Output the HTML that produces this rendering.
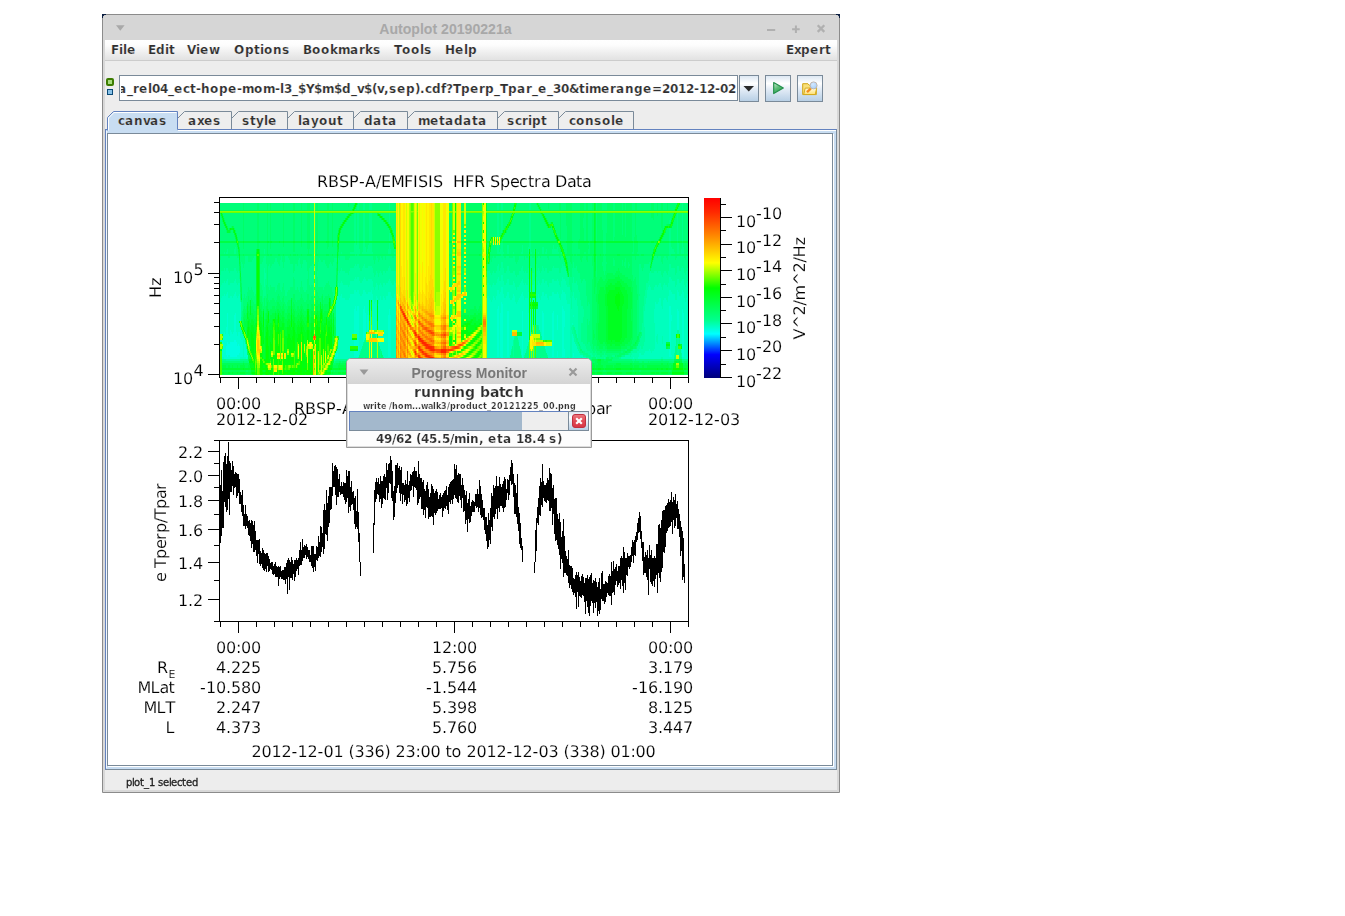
<!DOCTYPE html>
<html lang="en"><head><meta charset="utf-8"><title>Autoplot 20190221a</title>
<style>
*{box-sizing:border-box;margin:0;padding:0}
html,body{width:1345px;height:916px;overflow:hidden;background:#fff}
body{position:relative;font-family:"DejaVu Sans","Liberation Sans",sans-serif;font-size:12px;font-weight:bold;color:#333}
svg{position:absolute;left:0;top:0;overflow:visible}
svg text{font-family:"DejaVu Sans","Liberation Sans",sans-serif;white-space:pre}
.ui text{font-weight:bold;font-size:12px;fill:#2e2e2e;stroke:#f6f6f6;stroke-width:0.2px}
.plot text{font-weight:normal;font-size:16px;fill:#000}
#win{position:absolute;left:102px;top:14px;width:738px;height:779px;background:#ededed;border:1px solid #8b8b8b;border-radius:4px 4px 0 0;box-shadow:inset 0 0 0 2px #d8d8d8}

.nv{position:absolute;top:14px;width:4px;height:4px;background:#0b1b3d}
#title{position:absolute;left:103px;top:15px;width:736px;height:25px;background:#d6d6d6;border-radius:3px 3px 0 0}
#title text{font-family:"Liberation Sans","DejaVu Sans",sans-serif;font-size:15px;font-weight:bold;fill:#a8a8a8}
#menubar{position:absolute;left:105px;top:40px;width:732px;height:21px;background:linear-gradient(#fff 0,#fdfdfd 25%,#ececec 70%,#e2e2e2 100%);border-bottom:1px solid #cccccc}
#status{position:absolute;left:105px;top:770px;width:732px;height:21px}
#status text{font-weight:normal;font-size:10px;fill:#222}
#addr{position:absolute;left:119px;top:75px;width:619px;height:26px;background:#fff;border:1px solid #7a8a99;overflow:hidden}
.btn{position:absolute;top:75px;height:27px;border:1px solid #7a8a99;background:linear-gradient(#dde8f3 0,#fff 30%,#e6eef7 50%,#b8cfe5 100%)}
#pane{position:absolute;left:105px;top:129px;width:732px;height:641px;border:1px solid #6382bf;border-right-color:#7a8a99;border-bottom-color:#7a8a99;background:#c8ddf2}
#canvas{position:absolute;left:107px;top:133px;width:726px;height:633px;background:#fff;border:1px solid #7a8a99;box-shadow:1px 1px 0 #fff}
#pm{position:absolute;left:346px;top:358px;width:246px;height:90px;background:#fdfdfd;border:1px solid #9a9a9a;border-radius:5px 5px 0 0;box-shadow:inset 0 0 0 1px #dcdcdc}
#pm .tb{position:absolute;left:0;top:0;width:244px;height:25px;background:linear-gradient(#ececec,#d4d4d4);border-radius:4px 4px 0 0}
#pm .tt text{font-family:"Liberation Sans","DejaVu Sans",sans-serif;font-size:15px;font-weight:bold;fill:#787878}
#pm .bar{position:absolute;left:2px;top:52px;width:220px;height:20px;border:1px solid #7a8a99;border-top-color:#6382bf;border-left-color:#6382bf;background:#eeeeee}
#pm .bar i{position:absolute;left:0;top:0;width:172px;height:18px;background:#a3b8cc}
#pm .cancel{position:absolute;left:221px;top:52px;width:21px;height:20px;border:1px solid #7a8a99;background:linear-gradient(#dde8f3,#fff 30%,#b8cfe5)}
</style></head>
<body>
<div id="win"></div><svg width="1345" height="916" viewBox="0 0 1345 916" shape-rendering="crispEdges"><path d="M102 14h4v1h-2v1h-1v2h-1zM840 14h-4v1h2v1h1v2h1z" fill="#0b1d40"/></svg>
<div id="title"><svg width="736" height="25" viewBox="0 0 736 25"><text transform="translate(342.4,19.1) scale(0.94,1)" x="0" y="0" text-anchor="middle">Autoplot 20190221a</text>
<path d="M13 10.2h8.6l-4.3 5.6z" fill="#a9a9a9"/>
<path d="M664 15h8.2" stroke="#b0b0b0" stroke-width="2"/><path d="M689.1 14.2h7.6m-3.8 -3.8v7.6" stroke="#b0b0b0" stroke-width="2"/>
<path d="M714.7 10.3l6.6 6.6m0 -6.6l-6.6 6.6" stroke="#b0b0b0" stroke-width="2.3"/></svg></div>
<div id="menubar"></div>
<svg class="ui" width="1345" height="916" viewBox="0 0 1345 916"><text x="111 119 123 127" y="54" >File</text><text x="148 156 165 169" y="54" >Edit</text><text x="187 196 200 209" y="54" >View</text><text x="234 245 254 260 264 273 282" y="54" >Options</text><text x="303 312 321 330 338 350 359 365 373" y="54" >Bookmarks</text><text x="394 402 411 420 424" y="54" >Tools</text><text x="445 455 464 468" y="54" >Help</text><text x="786 794 801 810 819 825" y="54" >Expert</text></svg>
<svg width="1345" height="916" viewBox="0 0 1345 916"><rect x="106" y="78" width="8" height="8" rx="2" fill="#3c7c00"/><rect x="108" y="80" width="4" height="4" fill="#a6dc7c"/><rect x="107" y="89" width="6" height="6" fill="#0a4a78"/><rect x="108" y="90" width="4" height="4" fill="#88c2e8"/></svg><div id="addr"><div style="position:absolute;left:1px;top:0;width:616px;height:24px;overflow:hidden"><svg class="ui" width="616" height="24" viewBox="0 0 616 24"><text x="-3 6 12 18 27 31 39 47 53 62 69 75 80 89 98 107 116 121 133 142 154 159 163 171 177 185 193 201 213 221 230 236 243 251 256 263 268 276 285 294 299 304 311 320 325 332 340 349 358 364 373 379 387 396 405 411 417 426 432 440 448 458 464 468 480 489 495 504 513 522 531 541 549 557 565 573 578 586 594 599 607" y="17" >a_rel04_ect-hope-mom-l3_$Y$m$d_v$(v,sep).cdf?Tperp_Tpar_e_30&amp;timerange=2012-12-02</text></svg></div></div><div class="btn" style="left:739px;width:20px"></div><div class="btn" style="left:765px;width:26px"></div><div class="btn" style="left:797px;width:26px"></div><svg width="1345" height="916" viewBox="0 0 1345 916"><defs><linearGradient id="pg" x1="0" y1="0" x2="0.6" y2="1"><stop offset="0" stop-color="#cfeed6"/><stop offset="0.55" stop-color="#58bb74"/><stop offset="1" stop-color="#2f9c50"/></linearGradient><linearGradient id="fg" x1="0" y1="0" x2="0" y2="1"><stop offset="0" stop-color="#fffbe2"/><stop offset="1" stop-color="#ffe070"/></linearGradient><radialGradient id="lg" cx="0.4" cy="0.35" r="0.8"><stop offset="0" stop-color="#d4e8ff"/><stop offset="1" stop-color="#9ccaf8"/></radialGradient></defs><path d="M743.5 86h10.5l-5.25 5.5z" fill="#2a2a2a"/><path d="M773.7 82.5L783.3 88L773.7 93.5Z" fill="url(#pg)" stroke="#23904c" stroke-width="1.2" stroke-linejoin="round"/><path d="M802.7 83.7h5.2l1.5 1.6h6.9v9.3h-13.6z" fill="#f9e07a" stroke="#d0a616"/><path d="M803.7 94.5l1.5 -6.4h11.5l-1.5 6.4z" fill="url(#fg)" stroke="#d6ab1c"/><path d="M807 92.2l3.8 -3.6" stroke="#f28c1c" stroke-width="2.3"/><circle cx="813.6" cy="85.4" r="3.5" fill="url(#lg)" stroke="#c0b6b0"/></svg>
<div id="pane"></div>
<svg width="1345" height="916" viewBox="0 0 1345 916"><path d="M107.5 132.5 L107.5 117.5 L113.5 111.5 L177.5 111.5 L177.5 129.5 L177.5 132.5 Z" fill="#c8ddf2"/><path d="M107.5 130.5 L107.5 117.5 L113.5 111.5 L177.5 111.5 L177.5 129.5" fill="none" stroke="#6382bf"/><path d="M108.5 130.5 L108.5 118.0 L114.0 112.5 L176.5 112.5" fill="none" stroke="#fff"/><path d="M178.0 118.0 L184.0 112.0 L231.5 112.0 L231.5 129.0 L178.0 129.0 Z" fill="#eeeeee"/><path d="M178.0 118.0 L184.5 111.5 L231.5 111.5 L231.5 129.0" fill="none" stroke="#7a8a99"/><path d="M232.0 118.0 L238.0 112.0 L287.5 112.0 L287.5 129.0 L232.0 129.0 Z" fill="#eeeeee"/><path d="M232.0 118.0 L238.5 111.5 L287.5 111.5 L287.5 129.0" fill="none" stroke="#7a8a99"/><path d="M288.0 118.0 L294.0 112.0 L353.5 112.0 L353.5 129.0 L288.0 129.0 Z" fill="#eeeeee"/><path d="M288.0 118.0 L294.5 111.5 L353.5 111.5 L353.5 129.0" fill="none" stroke="#7a8a99"/><path d="M354.0 118.0 L360.0 112.0 L407.5 112.0 L407.5 129.0 L354.0 129.0 Z" fill="#eeeeee"/><path d="M354.0 118.0 L360.5 111.5 L407.5 111.5 L407.5 129.0" fill="none" stroke="#7a8a99"/><path d="M408.0 118.0 L414.0 112.0 L497.5 112.0 L497.5 129.0 L408.0 129.0 Z" fill="#eeeeee"/><path d="M408.0 118.0 L414.5 111.5 L497.5 111.5 L497.5 129.0" fill="none" stroke="#7a8a99"/><path d="M498.0 118.0 L504.0 112.0 L558.5 112.0 L558.5 129.0 L498.0 129.0 Z" fill="#eeeeee"/><path d="M498.0 118.0 L504.5 111.5 L558.5 111.5 L558.5 129.0" fill="none" stroke="#7a8a99"/><path d="M559.0 118.0 L565.0 112.0 L633.5 112.0 L633.5 129.0 L559.0 129.0 Z" fill="#eeeeee"/><path d="M559.0 118.0 L565.5 111.5 L633.5 111.5 L633.5 129.0" fill="none" stroke="#7a8a99"/><path d="M178 130.5H836" stroke="#fff" fill="none"/><path d="M106.5 131V768" stroke="#fff" stroke-opacity="0.75" fill="none"/></svg><svg class="ui" width="1345" height="916" viewBox="0 0 1345 916"><text x="118 125 134 143 150 159" y="125" >canvas</text><text x="188 197 204 213" y="125" >axes</text><text x="242 250 256 264 268" y="125" >style</text><text x="298 302 311 319 328 337" y="125" >layout</text><text x="364 373 382 388" y="125" >data</text><text x="418 430 439 445 454 463 472 478" y="125" >metadata</text><text x="507 515 522 528 532 541" y="125" >script</text><text x="569 576 585 594 602 611 615" y="125" >console</text></svg>
<div id="canvas"></div>
<svg width="1345" height="916" viewBox="0 0 1345 916" shape-rendering="crispEdges"><g shape-rendering="crispEdges" fill="none" stroke-width="1"><rect x="220" y="203" width="468" height="172" fill="#00ff79" stroke="none"/><path stroke="#00ffe1" d="M226.5 346v9M227.5 342v15M228.5 344v11M229.5 344v11M230.5 342v15M231.5 342v15M232.5 342v15M233.5 342v15M234.5 340v17M235.5 340v17M236.5 342v15M237.5 346v9M238.5 344v11M239.5 346v7"/><path stroke="#00ffcf" d="M222.5 340v4M222.5 349v8M223.5 338v19M224.5 332v27M225.5 334v25M226.5 327v19M226.5 355v4M227.5 313v29M227.5 357v2M228.5 334v10M228.5 355v4M229.5 336v8M229.5 355v4M230.5 330v12M230.5 357v2M231.5 332v10M231.5 357v2M232.5 334v8M232.5 357v2M233.5 332v10M233.5 357v2M234.5 315v25M234.5 357v2M235.5 313v27M235.5 357v2M236.5 332v10M236.5 357v2M237.5 336v10M237.5 355v4M238.5 332v12M238.5 355v4M239.5 332v14M239.5 353v6M240.5 338v19M241.5 340v17M242.5 340v17M244.5 342v15M245.5 344v13M246.5 349v10M247.5 355v2M334.5 357v2M335.5 353v6M336.5 355v2M337.5 353v4M354.5 309v25M354.5 340v6M354.5 351v6M355.5 306v28M355.5 340v6M355.5 351v6M356.5 311v23M356.5 340v6M356.5 351v6M357.5 306v40M357.5 351v6M358.5 306v51M363.5 309v33M364.5 306v34M365.5 313v25M367.5 315v17M368.5 311v19M370.5 309v21M388.5 315v42M389.5 309v48M390.5 315v42M497.5 309v48M498.5 306v51M500.5 313v44M501.5 302v57M502.5 304v55M507.5 311v46M508.5 311v46M522.5 311v46M528.5 313v29M530.5 309v27M542.5 311v29M543.5 313v27M552.5 313v44M553.5 311v46M557.5 315v15M557.5 351v6M562.5 306v51M563.5 309v48M564.5 311v16M564.5 349v8M573.5 353v4M669.5 306v36M669.5 349v8M670.5 306v51M671.5 315v6M671.5 355v2M677.5 309v21M678.5 311v19M682.5 309v48M683.5 313v44"/><path stroke="#00ffbe" d="M220.5 302v32M220.5 340v2M221.5 298v36M221.5 340v2M222.5 296v38M222.5 357v2M223.5 296v42M223.5 357v2M224.5 294v38M225.5 296v38M226.5 294v33M227.5 292v21M228.5 298v36M229.5 298v38M230.5 296v34M231.5 296v36M232.5 298v36M233.5 296v36M234.5 294v21M235.5 292v21M236.5 296v36M237.5 298v38M238.5 296v36M239.5 294v27M239.5 323v9M240.5 302v19M240.5 327v11M240.5 357v2M241.5 330v10M241.5 357v2M242.5 334v6M242.5 357v2M243.5 336v23M244.5 338v4M244.5 357v2M245.5 357v2M247.5 357v2M336.5 300v36M336.5 351v4M336.5 357v2M337.5 296v40M337.5 349v4M337.5 357v2M338.5 296v40M338.5 340v19M339.5 300v59M340.5 296v63M341.5 294v65M342.5 298v61M343.5 298v61M344.5 298v61M345.5 300v59M346.5 300v59M347.5 300v59M348.5 300v59M349.5 298v61M350.5 294v52M350.5 351v8M351.5 294v52M351.5 351v8M352.5 294v40M352.5 340v6M352.5 351v8M353.5 294v40M353.5 340v6M353.5 351v8M354.5 290v19M354.5 357v2M355.5 290v16M355.5 357v2M356.5 292v19M356.5 357v2M357.5 290v16M357.5 357v2M358.5 290v16M359.5 294v61M360.5 296v55M361.5 296v53M362.5 294v52M363.5 290v19M364.5 290v16M365.5 292v21M366.5 294v38M367.5 294v21M368.5 292v19M369.5 292v8M370.5 292v17M371.5 290v10M372.5 294v36M373.5 300v30M374.5 304v26M375.5 302v28M376.5 296v34M376.5 334v4M377.5 298v2M378.5 304v26M378.5 336v2M379.5 300v30M379.5 336v2M379.5 342v4M380.5 296v34M380.5 336v2M380.5 342v7M381.5 300v30M381.5 336v2M381.5 342v9M382.5 300v30M382.5 336v2M382.5 342v13M383.5 296v34M383.5 334v4M383.5 342v15M384.5 298v61M385.5 300v59M386.5 296v63M387.5 296v63M388.5 292v23M388.5 357v2M389.5 292v17M389.5 357v2M390.5 292v23M390.5 357v2M391.5 296v63M392.5 298v61M393.5 298v61M394.5 294v65M395.5 296v63M487.5 296v63M488.5 296v63M489.5 298v61M490.5 300v59M491.5 302v57M492.5 300v59M493.5 296v63M494.5 298v61M495.5 300v59M496.5 296v63M497.5 290v19M497.5 357v2M498.5 290v16M498.5 357v2M499.5 294v65M500.5 292v21M500.5 357v2M501.5 287v15M502.5 287v17M503.5 294v65M504.5 298v61M505.5 298v61M506.5 296v63M507.5 292v19M507.5 357v2M508.5 292v19M508.5 357v2M509.5 298v61M510.5 300v55M511.5 300v49M512.5 298v32M512.5 336v10M513.5 294v36M513.5 336v4M514.5 296v34M515.5 302v28M516.5 304v26M517.5 302v30M518.5 300v32M518.5 336v4M519.5 298v34M519.5 336v10M520.5 296v36M520.5 336v13M521.5 294v38M521.5 336v19M522.5 292v19M522.5 357v2M523.5 296v63M524.5 300v55M525.5 298v55M526.5 298v51M527.5 298v48M528.5 292v21M530.5 290v2M530.5 298v4M532.5 300v2M532.5 309v21M533.5 298v2M534.5 298v4M534.5 309v16M536.5 309v16M537.5 298v4M537.5 309v16M538.5 294v31M539.5 298v32M540.5 300v32M541.5 296v40M542.5 292v19M543.5 292v21M544.5 296v44M545.5 294v46M545.5 346v3M546.5 294v46M546.5 346v7M547.5 298v42M547.5 346v9M548.5 300v40M548.5 346v13M549.5 296v44M549.5 346v13M550.5 296v44M550.5 346v13M551.5 296v44M551.5 346v13M552.5 292v21M552.5 357v2M553.5 292v19M553.5 357v2M554.5 294v65M555.5 294v65M556.5 294v65M557.5 292v23M557.5 330v21M557.5 357v2M558.5 294v65M559.5 298v61M560.5 300v59M561.5 294v65M562.5 290v16M562.5 357v2M563.5 292v17M563.5 357v2M564.5 292v19M564.5 327v22M564.5 357v2M565.5 294v65M566.5 300v59M567.5 304v53M568.5 304v53M569.5 304v55M572.5 323v2M572.5 334v25M573.5 315v2M573.5 338v15M573.5 357v2M574.5 342v17M575.5 344v15M576.5 346v13M577.5 349v10M578.5 351v8M579.5 353v6M580.5 355v4M581.5 355v2M582.5 355v4M583.5 357v2M584.5 357v2M585.5 357v2M633.5 357v2M638.5 357v2M639.5 353v6M640.5 353v6M641.5 355v4M642.5 355v4M643.5 355v4M644.5 353v6M645.5 351v8M646.5 351v8M647.5 351v8M648.5 351v8M649.5 349v10M650.5 351v8M651.5 353v6M652.5 351v8M653.5 351v8M654.5 309v14M654.5 349v10M655.5 302v57M656.5 304v32M656.5 342v17M657.5 304v30M657.5 344v15M658.5 302v57M659.5 298v61M660.5 298v61M661.5 306v51M662.5 309v27M662.5 344v13M663.5 300v59M664.5 298v61M665.5 298v61M666.5 300v42M666.5 349v10M667.5 302v40M667.5 349v10M668.5 296v46M668.5 349v10M669.5 290v16M669.5 357v2M670.5 290v16M670.5 357v2M671.5 292v23M671.5 321v34M671.5 357v2M672.5 294v65M673.5 294v65M674.5 294v59M675.5 300v46M676.5 300v34M677.5 290v19M678.5 292v19M679.5 296v38M680.5 296v48M681.5 294v50M681.5 349v4M682.5 290v19M682.5 357v2M683.5 292v21M683.5 357v2M684.5 298v61M685.5 302v57M686.5 298v61M687.5 294v65"/><path stroke="#00ffad" d="M220.5 287v15M221.5 285v13M222.5 283v13M223.5 283v13M224.5 281v13M225.5 283v13M226.5 281v13M227.5 279v13M228.5 285v13M229.5 285v13M230.5 283v13M231.5 283v13M232.5 283v15M233.5 283v13M234.5 281v13M235.5 279v13M236.5 283v13M237.5 285v13M238.5 283v13M239.5 283v11M338.5 283v13M339.5 287v13M340.5 283v13M341.5 281v13M342.5 283v15M343.5 285v13M344.5 285v13M345.5 285v15M346.5 285v15M347.5 285v15M348.5 287v13M349.5 285v13M350.5 281v13M351.5 281v13M352.5 281v13M353.5 281v13M354.5 279v11M355.5 277v13M356.5 279v13M357.5 277v13M358.5 277v13M359.5 281v13M360.5 283v13M361.5 283v13M362.5 281v13M363.5 279v11M364.5 277v13M365.5 279v13M366.5 281v13M367.5 281v13M368.5 279v13M369.5 279v13M370.5 279v13M371.5 279v11M372.5 281v13M373.5 287v13M374.5 290v14M375.5 287v15M376.5 283v13M377.5 285v13M378.5 290v14M379.5 285v15M380.5 283v13M381.5 285v15M382.5 287v13M383.5 283v13M384.5 283v15M385.5 285v15M386.5 283v13M387.5 283v13M388.5 281v11M389.5 279v13M390.5 281v11M391.5 283v13M392.5 285v13M393.5 285v13M394.5 281v13M395.5 283v13M487.5 283v13M488.5 283v13M489.5 285v13M490.5 285v15M491.5 287v15M492.5 285v15M493.5 283v13M494.5 285v13M495.5 285v15M496.5 283v13M497.5 279v11M498.5 277v13M499.5 281v13M500.5 281v11M501.5 275v12M502.5 275v12M503.5 281v13M504.5 285v13M505.5 285v13M506.5 283v13M507.5 279v13M508.5 279v13M509.5 285v13M510.5 285v15M511.5 285v15M512.5 285v13M513.5 281v13M514.5 283v13M515.5 287v15M516.5 290v14M517.5 287v15M518.5 287v13M519.5 285v13M520.5 283v13M521.5 281v13M522.5 279v13M523.5 283v13M524.5 285v15M525.5 283v15M526.5 285v13M527.5 285v13M528.5 279v13M530.5 279v11M532.5 285v7M532.5 298v2M533.5 285v7M534.5 281v11M536.5 290v12M537.5 285v13M538.5 281v13M539.5 283v15M540.5 285v15M541.5 283v13M542.5 279v13M543.5 279v13M544.5 283v13M545.5 281v13M546.5 281v13M547.5 285v13M548.5 287v13M549.5 283v13M550.5 283v13M551.5 283v13M552.5 279v13M553.5 279v13M554.5 281v13M555.5 281v13M556.5 281v13M557.5 279v13M558.5 281v13M559.5 285v13M560.5 287v13M561.5 281v13M562.5 277v13M563.5 279v13M564.5 279v13M565.5 281v13M566.5 285v15M567.5 287v17M567.5 357v2M568.5 287v17M568.5 357v2M569.5 287v17M570.5 298v61M571.5 309v18M571.5 330v29M572.5 296v27M573.5 292v23M573.5 317v8M573.5 336v2M574.5 298v29M575.5 300v30M576.5 298v36M577.5 306v32M581.5 357v2M621.5 357v2M622.5 357v2M623.5 357v2M624.5 357v2M625.5 355v4M626.5 355v4M627.5 355v4M628.5 355v4M629.5 355v4M630.5 357v2M631.5 355v4M632.5 353v6M633.5 353v4M634.5 353v6M635.5 353v6M636.5 353v6M637.5 351v8M638.5 351v6M639.5 349v4M640.5 346v7M641.5 349v6M642.5 349v6M643.5 346v9M644.5 311v16M644.5 342v11M645.5 304v47M646.5 298v53M647.5 290v61M648.5 287v64M649.5 285v64M650.5 287v64M651.5 290v63M652.5 290v61M653.5 290v61M654.5 287v22M654.5 323v26M655.5 285v17M656.5 285v19M656.5 336v6M657.5 287v17M657.5 334v10M658.5 285v17M659.5 283v15M660.5 283v15M661.5 287v19M661.5 357v2M662.5 290v19M662.5 336v8M662.5 357v2M663.5 285v15M664.5 283v15M665.5 285v13M666.5 285v15M667.5 287v15M668.5 283v13M669.5 277v13M670.5 277v13M671.5 279v13M672.5 281v13M673.5 281v13M674.5 281v13M675.5 287v13M676.5 285v15M677.5 279v11M678.5 279v13M679.5 283v13M680.5 283v13M681.5 281v13M682.5 279v11M683.5 279v13M684.5 285v13M685.5 287v15M686.5 283v15M687.5 281v13"/><path stroke="#00ff9c" d="M220.5 275v12M221.5 271v14M222.5 271v12M223.5 271v12M224.5 268v13M225.5 271v12M226.5 268v13M226.5 359v2M227.5 268v11M227.5 359v2M228.5 271v14M228.5 359v2M229.5 273v12M229.5 359v2M230.5 271v12M230.5 359v2M231.5 271v12M231.5 359v2M232.5 271v12M232.5 359v2M233.5 271v12M233.5 359v2M234.5 268v13M234.5 359v2M235.5 268v11M235.5 359v2M236.5 271v12M236.5 359v2M237.5 273v12M237.5 359v2M238.5 271v12M238.5 359v2M239.5 279v4M239.5 359v2M240.5 300v2M264.5 268v19M265.5 273v6M334.5 359v2M335.5 359v2M338.5 271v12M339.5 273v14M340.5 271v12M341.5 268v13M342.5 271v12M343.5 271v14M344.5 271v14M345.5 273v12M346.5 273v12M347.5 273v12M348.5 275v12M349.5 271v14M350.5 268v13M351.5 268v13M352.5 268v13M353.5 268v13M354.5 266v13M355.5 264v13M356.5 266v13M357.5 264v13M358.5 264v13M358.5 357v2M359.5 268v13M360.5 271v12M360.5 351v2M361.5 271v12M362.5 268v13M363.5 266v13M363.5 342v2M364.5 264v13M364.5 340v2M365.5 268v11M366.5 268v13M367.5 268v13M368.5 266v13M369.5 266v13M370.5 266v13M371.5 266v13M372.5 268v13M373.5 273v14M374.5 277v13M375.5 275v12M376.5 271v12M377.5 273v12M378.5 277v13M379.5 273v12M380.5 271v12M381.5 273v12M382.5 275v12M383.5 271v12M384.5 271v12M385.5 273v12M386.5 271v12M387.5 271v12M388.5 268v13M389.5 266v13M390.5 268v13M391.5 271v12M392.5 271v14M393.5 271v14M394.5 271v10M395.5 271v12M487.5 271v12M488.5 271v12M489.5 271v14M490.5 273v12M491.5 275v12M492.5 273v12M493.5 271v12M494.5 273v12M495.5 273v12M496.5 271v12M497.5 266v13M498.5 264v13M499.5 271v10M500.5 268v13M501.5 262v13M501.5 359v2M502.5 262v13M502.5 359v2M503.5 268v13M504.5 273v12M505.5 273v12M506.5 271v12M507.5 266v13M508.5 266v13M509.5 271v14M510.5 273v12M511.5 273v12M511.5 349v2M512.5 273v12M513.5 271v10M513.5 340v17M514.5 271v12M514.5 336v2M515.5 275v12M516.5 277v13M517.5 275v12M517.5 336v2M518.5 275v12M518.5 340v2M519.5 271v14M520.5 271v12M520.5 349v2M521.5 268v13M521.5 355v2M522.5 266v13M523.5 271v12M524.5 273v12M524.5 355v2M525.5 271v12M526.5 273v12M526.5 349v2M527.5 273v12M528.5 268v11M528.5 342v2M530.5 266v13M532.5 273v12M533.5 273v12M534.5 268v13M536.5 277v13M537.5 271v14M538.5 268v13M538.5 325v2M539.5 271v12M540.5 273v12M540.5 332v2M541.5 271v12M542.5 266v13M543.5 268v11M544.5 271v12M545.5 268v13M545.5 349v2M546.5 268v13M547.5 273v12M547.5 355v2M548.5 273v14M549.5 271v12M550.5 271v12M551.5 271v12M552.5 268v11M553.5 266v13M554.5 268v13M555.5 268v13M556.5 268v13M557.5 268v11M558.5 268v13M559.5 273v12M560.5 273v14M561.5 268v13M562.5 264v13M563.5 266v13M564.5 266v13M565.5 268v13M566.5 273v12M567.5 277v10M568.5 277v10M569.5 285v2M570.5 290v8M571.5 292v17M571.5 327v3M572.5 283v13M572.5 325v9M573.5 277v15M573.5 325v2M573.5 330v6M574.5 283v15M574.5 334v8M575.5 283v17M575.5 338v6M576.5 281v17M576.5 342v4M577.5 285v21M577.5 344v5M578.5 290v52M578.5 346v5M579.5 292v52M579.5 349v4M580.5 300v46M580.5 353v2M581.5 306v17M581.5 342v7M581.5 353v2M582.5 306v17M582.5 342v9M582.5 353v2M583.5 309v8M583.5 344v7M583.5 355v2M584.5 344v7M584.5 355v2M585.5 346v7M585.5 355v2M586.5 349v4M586.5 357v2M587.5 351v2M587.5 357v2M588.5 351v4M588.5 357v2M589.5 351v4M590.5 353v2M591.5 353v4M592.5 355v2M595.5 355v2M596.5 357v2M604.5 357v2M629.5 353v2M630.5 353v4M631.5 351v4M632.5 351v2M633.5 349v4M634.5 349v4M635.5 349v4M636.5 349v4M637.5 346v5M638.5 344v7M639.5 342v7M640.5 338v8M641.5 330v2M641.5 336v13M642.5 323v26M643.5 306v40M644.5 296v15M644.5 327v15M645.5 290v14M646.5 283v15M647.5 283v7M648.5 281v6M649.5 273v12M650.5 271v16M651.5 273v17M652.5 273v17M653.5 273v17M654.5 271v16M655.5 271v14M656.5 271v14M657.5 273v14M658.5 271v14M659.5 271v12M660.5 271v12M661.5 275v12M662.5 277v13M663.5 273v12M664.5 271v12M665.5 271v14M666.5 273v12M667.5 275v12M668.5 271v12M669.5 264v13M670.5 264v13M671.5 268v11M672.5 268v13M673.5 268v13M674.5 268v13M674.5 353v4M675.5 275v12M676.5 273v12M677.5 266v13M677.5 330v4M677.5 338v17M678.5 266v13M678.5 330v4M678.5 338v6M678.5 349v6M679.5 271v12M680.5 271v12M681.5 268v13M681.5 353v4M682.5 266v13M683.5 268v11M684.5 273v12M685.5 275v12M686.5 271v12M687.5 268v13"/><path stroke="#00ff8b" d="M220.5 260v15M221.5 256v15M222.5 256v15M222.5 359v2M223.5 256v15M223.5 359v2M224.5 252v2M224.5 256v12M224.5 359v2M225.5 256v15M225.5 359v2M226.5 252v2M226.5 256v12M227.5 249v5M227.5 256v12M228.5 258v13M229.5 258v15M230.5 256v15M231.5 256v15M232.5 256v15M233.5 256v15M234.5 249v5M234.5 256v12M235.5 247v7M235.5 256v12M236.5 256v15M237.5 258v15M238.5 258v13M239.5 273v6M240.5 298v2M240.5 359v2M241.5 262v15M241.5 302v15M241.5 359v2M242.5 264v47M242.5 359v2M243.5 268v30M243.5 359v2M244.5 264v30M244.5 359v2M245.5 256v42M245.5 342v2M245.5 359v2M246.5 256v40M246.5 346v3M246.5 359v2M247.5 256v36M247.5 359v2M248.5 262v25M249.5 262v28M250.5 262v28M251.5 262v25M252.5 260v30M253.5 258v34M254.5 256v40M255.5 256v38M260.5 264v19M261.5 264v21M262.5 262v28M263.5 258v40M264.5 249v5M264.5 256v12M264.5 287v9M265.5 256v17M265.5 279v17M266.5 264v21M268.5 266v21M269.5 264v26M270.5 268v17M271.5 266v21M272.5 264v23M273.5 264v23M274.5 262v25M275.5 258v34M276.5 258v32M277.5 262v23M278.5 264v19M279.5 266v17M280.5 260v30M281.5 256v36M282.5 262v25M283.5 268v15M284.5 262v28M285.5 256v40M286.5 256v40M287.5 256v36M288.5 258v32M289.5 260v30M290.5 264v23M291.5 264v23M292.5 264v23M293.5 273v4M294.5 271v8M295.5 264v26M296.5 264v26M297.5 266v21M298.5 260v30M299.5 258v34M300.5 264v23M301.5 268v13M302.5 264v23M303.5 260v30M304.5 260v32M305.5 260v32M306.5 262v28M307.5 271v8M309.5 268v17M310.5 266v21M311.5 266v19M312.5 264v21M313.5 262v28M315.5 264v21M317.5 271v6M318.5 262v25M319.5 258v29M320.5 260v27M321.5 262v25M322.5 262v25M323.5 260v30M324.5 260v27M325.5 264v21M326.5 266v17M327.5 268v15M328.5 268v13M329.5 264v21M330.5 262v25M331.5 264v23M332.5 266v26M333.5 262v36M334.5 258v38M334.5 361v2M335.5 258v29M335.5 304v2M336.5 258v4M336.5 359v2M337.5 359v2M338.5 258v13M338.5 359v2M339.5 260v13M339.5 359v2M340.5 256v15M340.5 359v2M341.5 252v2M341.5 256v12M341.5 359v2M342.5 256v15M342.5 359v2M343.5 256v15M343.5 359v2M344.5 256v15M344.5 359v2M345.5 260v13M345.5 359v2M346.5 260v13M346.5 359v2M347.5 260v13M347.5 359v2M348.5 260v15M348.5 359v2M349.5 258v13M349.5 359v2M350.5 252v2M350.5 256v12M350.5 359v2M351.5 252v2M351.5 256v12M351.5 359v2M352.5 252v2M352.5 256v12M352.5 359v2M353.5 252v2M353.5 256v12M353.5 359v2M354.5 214v27M354.5 243v11M354.5 256v10M354.5 359v2M355.5 209v1M355.5 213v28M355.5 243v11M355.5 256v8M355.5 359v2M356.5 245v9M356.5 256v10M356.5 359v2M357.5 205v5M357.5 213v28M357.5 243v11M357.5 256v8M357.5 359v2M358.5 203v7M358.5 213v28M358.5 243v11M358.5 256v8M359.5 249v5M359.5 256v12M359.5 355v2M360.5 256v15M360.5 353v4M361.5 256v15M361.5 349v8M362.5 252v2M362.5 256v12M362.5 346v11M363.5 203v7M363.5 213v28M363.5 243v11M363.5 256v10M363.5 344v15M364.5 203v7M364.5 213v28M364.5 243v11M364.5 256v8M364.5 342v17M365.5 247v7M365.5 256v12M365.5 338v19M366.5 252v2M366.5 256v12M366.5 342v15M367.5 249v5M367.5 256v12M367.5 342v15M368.5 245v9M368.5 256v10M368.5 330v2M368.5 342v17M369.5 203v7M369.5 213v28M369.5 243v11M369.5 256v10M370.5 203v7M370.5 213v28M370.5 243v11M370.5 256v10M370.5 334v4M370.5 342v17M371.5 203v7M371.5 213v28M371.5 243v11M371.5 256v10M372.5 252v2M372.5 256v12M372.5 334v4M372.5 342v15M373.5 260v13M374.5 264v13M375.5 260v15M375.5 334v2M376.5 256v15M376.5 342v15M377.5 258v15M378.5 262v15M378.5 342v2M379.5 260v13M380.5 256v15M380.5 349v8M381.5 258v15M381.5 351v2M382.5 260v15M383.5 256v15M383.5 357v2M384.5 256v15M384.5 359v2M385.5 260v13M385.5 359v2M386.5 256v15M386.5 359v2M387.5 256v15M387.5 359v2M388.5 249v5M388.5 256v12M388.5 359v2M389.5 203v7M389.5 213v11M389.5 233v8M389.5 243v11M389.5 256v10M389.5 359v2M390.5 249v5M390.5 256v12M390.5 359v2M391.5 256v15M391.5 359v2M392.5 258v13M392.5 359v2M393.5 258v13M393.5 359v2M394.5 252v2M394.5 256v15M394.5 359v2M395.5 256v15M395.5 359v2M487.5 264v7M487.5 359v2M488.5 264v7M488.5 359v2M489.5 264v7M489.5 359v2M490.5 260v13M490.5 359v2M491.5 262v13M491.5 359v2M492.5 258v15M492.5 359v2M493.5 256v15M493.5 359v2M494.5 258v15M494.5 359v2M495.5 258v15M495.5 359v2M496.5 256v15M496.5 359v2M497.5 203v7M497.5 213v24M497.5 245v9M497.5 256v10M497.5 359v2M498.5 203v7M498.5 213v26M498.5 243v11M498.5 256v8M498.5 359v2M499.5 252v2M499.5 256v15M499.5 359v2M500.5 249v5M500.5 256v12M500.5 359v2M501.5 203v7M501.5 213v20M501.5 243v11M501.5 256v6M502.5 203v7M502.5 213v17M502.5 239v2M502.5 243v11M502.5 256v6M503.5 252v2M503.5 256v12M503.5 359v2M504.5 258v15M504.5 359v2M505.5 258v15M505.5 359v2M506.5 256v15M506.5 359v2M507.5 245v9M507.5 256v10M507.5 359v2M508.5 245v9M508.5 256v10M508.5 359v2M509.5 258v13M510.5 258v15M510.5 355v4M511.5 258v15M511.5 351v8M512.5 258v15M512.5 346v13M513.5 252v2M513.5 256v15M513.5 357v2M514.5 256v15M514.5 338v21M515.5 262v13M515.5 336v23M516.5 264v13M516.5 336v23M517.5 262v13M517.5 338v21M518.5 260v15M518.5 342v17M519.5 256v15M519.5 346v13M520.5 256v15M520.5 351v8M521.5 252v2M521.5 256v12M521.5 357v2M522.5 245v9M522.5 256v10M523.5 256v15M524.5 260v13M525.5 256v15M525.5 353v6M526.5 258v15M526.5 351v8M527.5 258v15M527.5 346v11M528.5 247v7M528.5 256v12M528.5 344v15M529.5 203v7M529.5 213v28M529.5 243v6M530.5 203v7M530.5 213v28M530.5 243v11M530.5 256v10M530.5 351v8M531.5 252v2M531.5 256v12M532.5 258v15M532.5 330v4M532.5 351v6M533.5 258v15M534.5 249v5M534.5 256v12M534.5 325v9M534.5 346v13M536.5 264v13M536.5 325v9M536.5 346v11M537.5 258v13M537.5 325v9M537.5 346v13M538.5 252v2M538.5 256v12M538.5 327v7M538.5 346v13M539.5 256v15M539.5 330v4M539.5 346v13M540.5 258v15M540.5 334v6M540.5 346v11M541.5 256v15M541.5 336v4M541.5 346v13M542.5 247v7M542.5 256v10M542.5 346v13M543.5 247v7M543.5 256v12M543.5 346v13M544.5 256v15M544.5 346v13M545.5 252v2M545.5 256v12M545.5 351v8M546.5 249v5M546.5 256v12M546.5 353v6M547.5 258v15M548.5 260v13M549.5 256v15M549.5 359v2M550.5 256v15M550.5 359v2M551.5 256v15M551.5 359v2M552.5 249v5M552.5 256v12M552.5 359v2M553.5 245v9M553.5 256v10M553.5 359v2M554.5 249v5M554.5 256v12M554.5 359v2M555.5 249v5M555.5 256v12M555.5 359v2M556.5 249v5M556.5 256v12M556.5 359v2M557.5 247v7M557.5 256v12M557.5 359v2M558.5 252v2M558.5 256v12M558.5 359v2M559.5 258v15M559.5 359v2M560.5 260v13M560.5 359v2M561.5 252v2M561.5 256v12M561.5 359v2M562.5 256v8M562.5 359v2M563.5 260v6M563.5 359v2M564.5 262v4M564.5 359v2M565.5 359v2M566.5 271v2M566.5 359v2M568.5 359v2M569.5 271v14M569.5 359v2M570.5 277v13M571.5 277v15M572.5 268v15M572.5 359v2M573.5 262v15M573.5 327v3M573.5 359v2M574.5 268v15M574.5 327v7M574.5 359v2M575.5 268v15M575.5 330v8M575.5 359v2M576.5 266v15M576.5 334v8M576.5 359v2M577.5 271v14M577.5 338v6M577.5 359v2M578.5 273v17M578.5 344v2M578.5 359v2M579.5 273v19M579.5 346v3M579.5 359v2M580.5 279v21M580.5 346v3M580.5 351v2M580.5 359v2M581.5 283v23M581.5 323v19M581.5 351v2M581.5 359v2M582.5 281v25M582.5 323v19M582.5 359v2M583.5 279v30M583.5 317v27M583.5 351v4M583.5 359v2M584.5 279v65M584.5 351v4M584.5 359v2M585.5 281v65M585.5 353v2M585.5 359v2M586.5 296v53M586.5 353v4M586.5 359v2M587.5 306v13M587.5 344v7M587.5 353v4M587.5 359v2M588.5 302v23M588.5 342v9M588.5 355v2M588.5 359v2M589.5 304v17M589.5 342v9M589.5 355v6M590.5 346v7M590.5 355v4M591.5 349v4M591.5 357v2M592.5 351v4M593.5 353v4M594.5 353v4M595.5 351v4M596.5 353v4M597.5 355v4M598.5 355v4M599.5 355v4M600.5 357v2M601.5 357v2M602.5 355v4M603.5 355v4M604.5 353v4M605.5 355v4M606.5 355v2M612.5 355v2M613.5 355v2M614.5 355v2M619.5 357v2M620.5 357v2M622.5 355v2M623.5 355v2M624.5 355v2M628.5 353v2M632.5 359v2M633.5 359v2M634.5 359v2M636.5 359v2M637.5 359v2M638.5 359v2M639.5 264v30M639.5 296v36M639.5 359v2M640.5 264v68M640.5 359v2M641.5 268v62M641.5 359v2M642.5 271v52M642.5 359v2M643.5 268v38M643.5 359v2M644.5 264v32M644.5 359v2M645.5 264v26M645.5 359v2M646.5 264v19M646.5 359v2M647.5 264v19M647.5 359v2M648.5 264v17M648.5 359v2M649.5 262v11M649.5 359v2M650.5 359v2M651.5 268v5M651.5 359v2M652.5 264v9M652.5 359v2M653.5 260v13M653.5 359v2M654.5 256v15M654.5 359v2M655.5 256v15M655.5 359v2M656.5 256v15M656.5 359v2M657.5 258v15M657.5 359v2M658.5 256v15M658.5 359v2M659.5 256v15M659.5 359v2M660.5 256v15M660.5 359v2M661.5 262v13M662.5 264v13M663.5 258v15M663.5 359v2M664.5 256v15M664.5 359v2M665.5 256v15M665.5 359v2M666.5 258v15M666.5 359v2M667.5 260v15M667.5 359v2M668.5 256v15M668.5 359v2M669.5 220v4M669.5 228v13M669.5 243v11M669.5 256v8M669.5 359v2M670.5 218v4M670.5 228v13M670.5 243v11M670.5 256v8M670.5 359v2M671.5 247v7M671.5 256v12M671.5 359v2M672.5 249v5M672.5 256v12M672.5 359v2M673.5 249v5M673.5 256v12M673.5 359v2M674.5 252v2M674.5 256v12M674.5 357v2M675.5 260v15M675.5 346v13M676.5 258v15M676.5 338v17M677.5 213v28M677.5 243v11M677.5 256v10M678.5 243v11M678.5 256v10M679.5 256v15M679.5 338v6M679.5 349v10M680.5 256v15M680.5 349v10M681.5 249v5M681.5 256v12M681.5 357v2M682.5 203v7M682.5 213v28M682.5 243v11M682.5 256v10M682.5 359v2M683.5 247v7M683.5 256v12M683.5 359v2M684.5 258v15M684.5 359v2M685.5 260v15M685.5 359v2M686.5 256v15M686.5 359v2M687.5 252v2M687.5 256v12M687.5 359v2"/><path stroke="#00ff67" d="M220.5 214v2M220.5 254v2M221.5 254v2M222.5 213v1M222.5 254v2M223.5 254v2M224.5 218v2M224.5 254v2M225.5 254v2M226.5 230v3M226.5 254v2M227.5 254v2M228.5 228v2M228.5 254v2M229.5 254v2M230.5 254v2M231.5 226v2M231.5 254v2M232.5 254v2M233.5 254v2M234.5 235v2M234.5 254v2M235.5 239v2M235.5 254v2M236.5 243v2M236.5 254v2M237.5 247v2M237.5 254v2M239.5 266v5M240.5 254v2M240.5 262v4M240.5 287v5M241.5 254v2M241.5 283v4M241.5 300v2M242.5 254v2M242.5 321v2M242.5 332v2M243.5 203v7M243.5 213v28M243.5 243v6M243.5 309v8M243.5 361v2M244.5 254v2M244.5 306v7M245.5 254v2M245.5 309v6M246.5 254v2M246.5 306v7M246.5 370v2M246.5 374v1M247.5 254v2M247.5 351v4M247.5 370v2M247.5 374v1M248.5 254v2M248.5 296v8M249.5 254v2M249.5 300v6M250.5 254v2M251.5 254v2M251.5 298v8M252.5 254v2M252.5 300v6M253.5 254v2M253.5 302v7M254.5 254v2M254.5 304v7M255.5 254v2M255.5 304v7M257.5 203v7M257.5 213v28M257.5 243v6M258.5 203v7M258.5 213v28M258.5 243v6M260.5 254v2M260.5 296v6M261.5 254v2M261.5 296v8M262.5 254v2M262.5 302v9M263.5 254v2M263.5 306v3M264.5 254v2M264.5 298v21M265.5 254v2M265.5 306v7M266.5 254v2M266.5 298v8M267.5 203v7M267.5 213v28M267.5 243v11M267.5 294v8M268.5 300v9M269.5 254v2M269.5 302v9M270.5 203v7M270.5 213v28M270.5 243v6M270.5 300v9M271.5 300v9M272.5 254v2M272.5 298v8M273.5 254v2M273.5 298v8M274.5 254v2M274.5 300v6M275.5 254v2M275.5 302v7M276.5 254v2M276.5 300v6M277.5 254v2M277.5 296v6M278.5 294v8M279.5 296v8M280.5 254v2M280.5 300v6M281.5 254v2M281.5 302v7M282.5 254v2M282.5 298v8M283.5 203v7M283.5 213v28M283.5 243v4M283.5 296v8M284.5 254v2M284.5 302v7M285.5 254v2M285.5 304v9M286.5 254v2M286.5 306v7M287.5 254v2M287.5 302v7M288.5 254v2M288.5 300v6M289.5 254v2M289.5 300v6M290.5 300v6M291.5 254v2M292.5 254v2M292.5 298v8M293.5 203v7M293.5 213v28M293.5 243v9M293.5 294v8M294.5 203v7M294.5 213v28M294.5 243v9M294.5 294v10M295.5 300v9M296.5 254v2M296.5 302v9M297.5 300v6M298.5 254v2M298.5 300v6M299.5 254v2M299.5 300v9M300.5 254v2M300.5 298v8M301.5 203v7M301.5 213v28M301.5 243v4M301.5 294v10M302.5 254v2M302.5 298v8M303.5 254v2M303.5 300v9M304.5 254v2M304.5 302v9M305.5 254v2M305.5 302v9M306.5 254v2M306.5 300v9M307.5 203v7M307.5 213v28M307.5 243v6M307.5 294v10M308.5 203v7M308.5 213v28M308.5 243v11M308.5 294v10M309.5 203v7M309.5 213v28M309.5 243v6M309.5 300v9M310.5 300v9M311.5 296v8M312.5 254v2M312.5 296v8M313.5 254v2M313.5 300v6M315.5 296v8M316.5 203v7M316.5 213v28M316.5 243v11M316.5 290v10M317.5 203v7M317.5 213v28M317.5 243v6M317.5 292v8M318.5 254v2M318.5 296v8M319.5 254v2M319.5 298v6M320.5 254v2M320.5 298v4M321.5 254v2M321.5 296v8M322.5 254v2M322.5 294v2M323.5 254v2M323.5 300v6M324.5 254v2M324.5 298v6M325.5 254v2M325.5 296v8M326.5 296v8M327.5 203v7M327.5 213v28M327.5 243v6M327.5 296v8M328.5 203v7M328.5 213v28M328.5 243v4M328.5 294v8M329.5 254v2M329.5 296v2M330.5 254v2M331.5 254v2M331.5 302v4M331.5 370v2M332.5 203v7M332.5 213v28M332.5 243v4M332.5 311v4M333.5 254v2M333.5 311v2M333.5 363v2M334.5 254v2M334.5 317v8M334.5 363v2M334.5 370v2M335.5 254v2M335.5 317v10M335.5 363v2M336.5 254v2M336.5 268v7M337.5 233v2M337.5 275v6M338.5 228v2M338.5 252v2M339.5 226v2M339.5 254v2M339.5 361v2M340.5 224v2M340.5 254v2M340.5 361v2M341.5 254v2M342.5 254v2M342.5 361v2M343.5 254v2M343.5 361v2M344.5 254v2M344.5 361v2M345.5 222v2M345.5 254v2M345.5 361v2M346.5 254v2M346.5 361v2M347.5 214v2M347.5 254v2M347.5 361v2M348.5 203v4M348.5 218v2M348.5 254v2M348.5 361v2M349.5 213v1M349.5 254v2M349.5 361v2M350.5 254v2M351.5 254v2M352.5 254v2M353.5 205v2M353.5 254v2M354.5 203v2M354.5 254v2M356.5 254v2M359.5 254v2M360.5 254v2M361.5 254v2M362.5 254v2M363.5 254v2M364.5 254v2M365.5 254v2M366.5 254v2M367.5 254v2M368.5 254v2M369.5 254v2M370.5 254v2M371.5 254v2M372.5 254v2M373.5 254v2M374.5 254v2M375.5 254v2M376.5 254v2M377.5 254v2M378.5 254v2M379.5 254v2M380.5 254v2M381.5 254v2M382.5 254v2M383.5 254v2M384.5 254v2M385.5 254v2M385.5 361v2M386.5 254v2M386.5 361v2M387.5 226v2M387.5 254v2M387.5 361v2M388.5 222v2M388.5 254v2M389.5 254v2M390.5 254v2M391.5 235v2M391.5 254v2M391.5 361v2M392.5 254v2M392.5 361v2M393.5 254v2M393.5 361v2M394.5 254v2M395.5 254v2M395.5 361v2M449.5 203v7M449.5 213v28M449.5 243v11M449.5 256v31M449.5 290v16M450.5 203v7M450.5 213v28M450.5 243v11M450.5 256v31M450.5 292v8M450.5 304v5M451.5 203v7M451.5 213v28M451.5 243v11M451.5 256v31M451.5 292v8M451.5 304v5M453.5 235v2M453.5 239v2M453.5 243v2M453.5 247v2M453.5 256v2M453.5 260v2M453.5 264v2M453.5 277v2M453.5 281v2M454.5 235v2M454.5 239v2M454.5 243v2M454.5 247v2M454.5 256v2M454.5 260v2M454.5 264v2M454.5 277v2M454.5 281v2M454.5 302v2M461.5 203v7M461.5 213v28M461.5 243v11M461.5 256v38M461.5 298v13M462.5 203v7M462.5 213v28M462.5 243v11M462.5 256v36M462.5 298v11M463.5 203v7M463.5 213v28M463.5 243v11M463.5 256v36M463.5 296v10M464.5 228v2M464.5 233v2M464.5 237v2M464.5 245v2M464.5 258v2M464.5 262v2M464.5 266v2M464.5 275v2M464.5 279v2M464.5 283v2M464.5 296v2M464.5 300v2M464.5 304v5M465.5 228v2M465.5 233v2M465.5 237v2M465.5 245v2M465.5 258v2M465.5 262v2M465.5 266v2M465.5 275v2M465.5 279v2M465.5 283v2M465.5 296v2M465.5 300v2M465.5 304v5M466.5 203v7M466.5 213v28M466.5 243v11M466.5 256v36M466.5 296v13M467.5 203v7M467.5 213v28M467.5 243v11M467.5 256v53M468.5 203v7M468.5 213v28M468.5 243v11M468.5 256v55M469.5 203v7M469.5 213v28M469.5 243v11M469.5 256v55M470.5 203v7M470.5 213v28M470.5 243v11M470.5 256v53M471.5 203v7M471.5 213v28M471.5 243v11M471.5 256v53M472.5 203v7M472.5 213v28M472.5 243v11M472.5 256v53M473.5 203v7M473.5 213v28M473.5 243v11M473.5 256v53M474.5 203v7M474.5 213v28M474.5 243v11M474.5 256v50M475.5 203v7M475.5 213v28M475.5 243v11M475.5 256v50M476.5 203v7M476.5 213v28M476.5 243v11M476.5 256v53M477.5 203v7M477.5 213v28M477.5 243v11M477.5 256v55M478.5 203v7M478.5 213v28M478.5 243v11M478.5 256v53M479.5 203v7M479.5 213v28M479.5 243v11M479.5 256v50M480.5 203v7M480.5 213v28M480.5 243v11M480.5 256v48M481.5 203v7M481.5 213v28M481.5 243v11M481.5 256v50M487.5 252v2M487.5 361v2M488.5 245v2M488.5 361v2M489.5 361v2M490.5 237v2M490.5 254v2M490.5 361v2M491.5 245v2M491.5 254v2M491.5 361v2M492.5 254v2M492.5 361v2M493.5 254v2M493.5 361v2M494.5 254v2M494.5 361v2M495.5 254v2M495.5 361v2M496.5 254v2M496.5 361v2M497.5 254v2M497.5 370v2M497.5 374v1M498.5 254v2M498.5 370v2M498.5 374v1M499.5 254v2M500.5 254v2M501.5 370v2M501.5 374v1M502.5 230v3M502.5 370v2M502.5 374v1M503.5 254v2M504.5 254v2M504.5 361v2M505.5 254v2M505.5 361v2M506.5 254v2M506.5 361v2M507.5 254v2M508.5 254v2M509.5 254v2M509.5 359v2M510.5 254v2M511.5 254v2M512.5 209v1M512.5 254v2M513.5 205v2M513.5 216v2M513.5 254v2M514.5 254v2M515.5 209v1M515.5 254v2M516.5 205v2M516.5 254v2M517.5 254v2M518.5 254v2M519.5 254v2M520.5 254v2M521.5 254v2M522.5 254v2M522.5 359v2M523.5 254v2M524.5 254v2M525.5 254v2M526.5 254v2M527.5 254v2M528.5 254v2M530.5 254v2M531.5 254v2M532.5 254v2M533.5 254v2M534.5 254v2M536.5 254v2M537.5 254v2M538.5 254v2M539.5 254v2M540.5 254v2M541.5 214v2M541.5 254v2M542.5 216v2M542.5 254v2M543.5 218v2M543.5 254v2M544.5 214v2M544.5 254v2M545.5 216v2M545.5 254v2M546.5 254v2M547.5 254v2M548.5 203v6M548.5 254v2M549.5 254v2M549.5 361v2M550.5 222v2M550.5 254v2M550.5 361v2M551.5 226v2M551.5 254v2M551.5 361v2M552.5 254v2M553.5 254v2M554.5 226v2M554.5 235v2M554.5 254v2M555.5 254v2M556.5 254v2M557.5 254v2M558.5 254v2M559.5 203v7M559.5 213v1M559.5 254v2M559.5 361v2M560.5 203v7M560.5 213v26M560.5 249v3M560.5 254v2M560.5 361v2M561.5 243v2M561.5 254v2M562.5 245v2M562.5 370v2M562.5 374v1M563.5 370v2M563.5 374v1M566.5 203v7M566.5 213v13M566.5 361v2M567.5 203v7M567.5 213v28M567.5 243v11M567.5 361v2M568.5 203v7M568.5 213v28M568.5 243v11M568.5 268v3M568.5 361v2M569.5 203v7M569.5 213v28M569.5 243v11M569.5 361v2M570.5 203v7M570.5 213v28M570.5 243v11M570.5 256v6M570.5 361v2M571.5 203v7M571.5 213v28M571.5 243v11M571.5 256v8M571.5 361v2M572.5 361v2M573.5 254v2M573.5 370v2M573.5 374v1M576.5 254v2M576.5 370v2M576.5 374v1M578.5 243v6M578.5 361v2M579.5 239v2M579.5 243v6M579.5 361v2M580.5 203v7M580.5 213v28M580.5 243v11M580.5 256v4M580.5 361v2M581.5 203v7M581.5 213v28M581.5 243v11M581.5 256v6M581.5 361v2M582.5 203v7M582.5 213v28M582.5 243v11M582.5 256v2M582.5 361v2M583.5 203v7M583.5 213v5M583.5 228v13M583.5 243v11M583.5 361v2M584.5 243v9M584.5 361v2M585.5 243v9M585.5 361v2M586.5 203v7M586.5 213v28M586.5 243v11M586.5 256v4M586.5 361v2M587.5 203v7M587.5 213v28M587.5 243v11M587.5 256v6M587.5 361v2M588.5 245v4M589.5 370v2M589.5 374v1M590.5 243v11M590.5 361v2M591.5 243v11M591.5 361v2M592.5 203v7M592.5 213v28M592.5 243v11M592.5 256v10M592.5 279v65M592.5 361v2M593.5 203v7M593.5 213v28M593.5 243v11M593.5 256v74M593.5 340v9M593.5 361v2M594.5 294v40M594.5 338v8M594.5 361v2M595.5 287v59M595.5 370v2M595.5 374v1M596.5 243v11M596.5 277v17M596.5 302v21M596.5 340v9M597.5 203v7M597.5 213v28M597.5 243v11M597.5 256v27M597.5 346v5M598.5 203v7M598.5 213v28M598.5 243v11M598.5 256v25M598.5 346v5M599.5 203v7M599.5 213v28M599.5 243v11M599.5 256v23M599.5 349v2M600.5 203v7M600.5 213v28M600.5 243v11M600.5 256v21M600.5 349v4M601.5 203v7M601.5 213v28M601.5 243v11M601.5 256v21M601.5 349v4M602.5 230v11M602.5 243v11M602.5 256v6M602.5 266v13M602.5 349v2M603.5 271v10M603.5 346v5M603.5 370v2M603.5 374v1M604.5 254v2M604.5 275v6M604.5 346v5M604.5 359v2M604.5 370v2M604.5 374v1M605.5 271v8M605.5 349v2M605.5 359v2M605.5 370v2M605.5 374v1M606.5 233v8M606.5 243v11M606.5 256v6M606.5 264v11M606.5 349v4M606.5 357v2M607.5 203v7M607.5 213v28M607.5 243v11M607.5 256v17M607.5 351v2M607.5 357v2M608.5 203v7M608.5 213v28M608.5 243v11M608.5 256v17M608.5 351v2M608.5 357v2M608.5 361v2M609.5 203v7M609.5 213v28M609.5 243v11M609.5 256v17M609.5 351v2M609.5 361v2M610.5 203v7M610.5 213v28M610.5 243v11M610.5 256v17M610.5 351v2M610.5 361v2M611.5 203v7M611.5 213v28M611.5 243v11M611.5 256v17M611.5 351v2M611.5 357v2M611.5 361v2M612.5 203v7M612.5 213v28M612.5 243v11M612.5 256v17M612.5 351v2M612.5 357v2M612.5 361v2M613.5 243v11M613.5 256v2M613.5 266v9M613.5 351v2M613.5 361v2M614.5 237v4M614.5 243v11M614.5 256v4M614.5 266v9M614.5 351v2M614.5 361v2M615.5 203v7M615.5 213v28M615.5 243v11M615.5 256v17M615.5 351v2M615.5 355v2M615.5 361v2M616.5 203v7M616.5 213v28M616.5 243v11M616.5 256v15M616.5 351v2M616.5 361v2M617.5 203v7M617.5 213v28M617.5 243v11M617.5 256v15M617.5 351v2M617.5 355v2M617.5 361v2M618.5 203v7M618.5 213v28M618.5 243v11M618.5 256v12M618.5 351v2M618.5 355v2M618.5 361v2M619.5 203v7M619.5 213v28M619.5 243v11M619.5 256v15M619.5 351v6M619.5 361v2M620.5 203v7M620.5 213v28M620.5 243v11M620.5 256v17M620.5 351v6M620.5 361v2M621.5 203v7M621.5 213v28M621.5 243v11M621.5 256v17M621.5 349v2M621.5 353v2M621.5 361v2M622.5 235v6M622.5 243v11M622.5 256v4M622.5 266v9M622.5 349v2M622.5 353v2M622.5 361v2M623.5 203v7M623.5 213v28M623.5 243v11M623.5 256v19M623.5 349v6M623.5 361v2M624.5 203v7M624.5 213v28M624.5 243v11M624.5 256v6M624.5 266v9M624.5 349v6M624.5 361v2M625.5 237v4M625.5 243v11M625.5 256v2M625.5 268v9M625.5 361v2M626.5 203v7M626.5 213v28M626.5 243v11M626.5 256v21M626.5 361v2M627.5 203v7M627.5 213v28M627.5 243v11M627.5 256v21M627.5 346v3M627.5 351v2M627.5 361v2M628.5 203v7M628.5 213v28M628.5 243v11M628.5 256v6M628.5 268v11M628.5 346v3M628.5 351v2M628.5 361v2M629.5 203v7M629.5 213v28M629.5 243v11M629.5 256v8M629.5 266v13M629.5 346v3M629.5 351v2M629.5 361v2M630.5 203v7M630.5 213v28M630.5 243v11M630.5 256v23M630.5 361v2M631.5 203v7M631.5 213v28M631.5 243v11M631.5 256v25M631.5 344v2M631.5 349v2M631.5 361v2M632.5 243v9M632.5 275v12M632.5 340v6M632.5 361v2M633.5 281v63M633.5 346v3M633.5 370v2M633.5 374v1M634.5 237v4M634.5 243v11M634.5 279v65M634.5 346v3M634.5 361v2M635.5 203v7M635.5 213v28M635.5 243v11M635.5 256v4M635.5 277v65M635.5 346v3M635.5 361v2M636.5 203v7M636.5 235v6M636.5 243v11M636.5 285v55M636.5 344v2M636.5 361v2M637.5 243v9M637.5 294v6M637.5 342v4M637.5 361v2M638.5 334v2M638.5 340v2M638.5 361v2M639.5 254v2M639.5 332v4M639.5 370v2M639.5 374v1M640.5 254v2M640.5 332v2M640.5 370v2M640.5 374v1M642.5 361v2M643.5 361v2M644.5 254v2M645.5 254v2M646.5 254v2M647.5 254v2M648.5 254v2M648.5 361v2M649.5 254v2M650.5 254v2M650.5 268v3M650.5 361v2M651.5 203v7M651.5 213v5M651.5 266v2M651.5 361v2M652.5 203v7M652.5 213v5M652.5 252v2M652.5 361v2M653.5 203v7M653.5 213v7M653.5 258v2M653.5 361v2M654.5 361v2M655.5 252v4M655.5 361v2M656.5 249v3M656.5 254v2M656.5 361v2M657.5 203v7M657.5 213v3M657.5 254v2M657.5 361v2M658.5 245v2M658.5 254v2M658.5 361v2M659.5 243v2M659.5 254v2M659.5 361v2M660.5 254v2M660.5 361v2M661.5 203v7M661.5 213v15M661.5 254v2M661.5 361v2M662.5 203v7M662.5 213v17M662.5 254v2M662.5 361v2M663.5 228v2M663.5 254v2M663.5 361v2M664.5 254v2M664.5 361v2M665.5 254v2M665.5 361v2M666.5 224v2M666.5 254v2M666.5 361v2M667.5 203v7M667.5 213v1M667.5 254v2M667.5 361v2M668.5 254v2M668.5 361v2M669.5 370v2M669.5 374v1M670.5 222v2M670.5 370v2M670.5 374v1M671.5 218v2M671.5 254v2M672.5 254v2M673.5 213v1M673.5 222v2M673.5 254v2M674.5 209v1M674.5 254v2M675.5 216v2M675.5 254v2M676.5 254v2M677.5 209v1M677.5 254v2M678.5 207v2M678.5 254v2M679.5 205v2M679.5 254v2M680.5 254v2M681.5 254v2M682.5 254v2M683.5 254v2M684.5 254v2M684.5 361v2M685.5 254v2M685.5 361v2M686.5 254v2M686.5 361v2M687.5 254v2"/><path stroke="#00ff56" d="M220.5 210v1M221.5 210v1M221.5 216v2M222.5 210v1M222.5 220v2M222.5 363v2M222.5 370v2M222.5 374v1M223.5 210v1M223.5 216v2M223.5 363v2M223.5 370v2M223.5 374v1M224.5 210v1M224.5 363v2M224.5 370v2M224.5 374v1M225.5 210v1M225.5 363v2M225.5 370v2M225.5 374v1M226.5 210v1M226.5 224v2M226.5 363v5M226.5 370v2M226.5 374v1M227.5 210v1M227.5 226v2M227.5 363v5M227.5 370v2M227.5 374v1M228.5 210v1M228.5 363v2M228.5 370v2M228.5 374v1M229.5 210v1M229.5 363v2M229.5 370v2M229.5 374v1M230.5 210v1M230.5 230v3M230.5 363v5M230.5 370v2M230.5 374v1M231.5 210v1M231.5 363v5M231.5 370v2M231.5 374v1M232.5 210v1M232.5 363v2M232.5 370v2M232.5 374v1M233.5 210v1M233.5 226v2M233.5 363v5M233.5 370v2M233.5 374v1M234.5 210v1M234.5 228v2M234.5 363v5M234.5 370v2M234.5 374v1M235.5 210v1M235.5 230v3M235.5 363v5M235.5 370v2M235.5 374v1M236.5 210v1M236.5 233v2M236.5 363v5M236.5 370v2M236.5 374v1M237.5 210v1M237.5 237v2M237.5 363v2M237.5 370v2M237.5 374v1M238.5 210v1M238.5 252v4M238.5 363v5M238.5 370v2M238.5 374v1M239.5 210v1M239.5 247v2M239.5 264v2M239.5 363v5M239.5 370v2M239.5 374v1M240.5 210v1M240.5 266v5M240.5 281v6M240.5 363v2M240.5 370v2M240.5 374v1M241.5 210v1M241.5 287v7M241.5 363v2M241.5 370v2M241.5 374v1M242.5 210v1M242.5 363v2M242.5 370v2M242.5 374v1M243.5 210v1M243.5 254v2M243.5 317v10M243.5 334v2M243.5 370v2M243.5 374v1M244.5 210v1M244.5 313v6M244.5 363v2M244.5 370v2M244.5 374v1M245.5 210v1M245.5 315v6M245.5 327v5M245.5 363v5M245.5 370v2M245.5 374v1M246.5 210v1M246.5 313v6M246.5 332v2M246.5 363v5M247.5 210v1M247.5 302v2M247.5 363v5M248.5 210v1M248.5 304v7M248.5 353v8M248.5 363v2M248.5 370v2M248.5 374v1M249.5 210v1M249.5 306v7M249.5 355v4M249.5 370v2M249.5 374v1M250.5 210v1M250.5 370v2M250.5 374v1M251.5 210v1M251.5 306v7M251.5 374v1M252.5 210v1M252.5 306v7M253.5 210v1M253.5 309v6M254.5 210v1M254.5 311v8M255.5 210v1M255.5 311v6M256.5 210v1M257.5 210v1M258.5 210v1M259.5 210v1M260.5 210v1M260.5 302v7M261.5 210v1M261.5 304v7M262.5 210v1M262.5 311v6M263.5 210v1M264.5 210v1M264.5 319v8M265.5 210v1M265.5 313v6M266.5 210v1M266.5 306v7M267.5 210v1M267.5 254v2M267.5 302v7M268.5 210v1M268.5 254v2M268.5 309v2M269.5 210v1M269.5 311v8M270.5 210v1M270.5 254v2M270.5 309v6M271.5 210v1M271.5 254v2M271.5 309v6M272.5 210v1M272.5 306v7M273.5 210v1M273.5 306v7M274.5 210v1M274.5 306v7M275.5 210v1M275.5 309v2M276.5 210v1M276.5 306v7M277.5 210v1M277.5 302v7M278.5 210v1M278.5 254v2M278.5 302v7M279.5 210v1M279.5 254v2M279.5 304v7M280.5 210v1M280.5 306v7M281.5 210v1M281.5 309v6M282.5 210v1M282.5 306v5M283.5 210v1M283.5 254v2M283.5 304v7M284.5 210v1M284.5 309v8M285.5 210v1M285.5 313v6M286.5 210v1M286.5 313v6M287.5 210v1M287.5 309v6M288.5 210v1M288.5 306v7M289.5 210v1M289.5 306v7M290.5 210v1M290.5 254v2M290.5 306v9M291.5 210v1M292.5 210v1M292.5 306v7M293.5 210v1M293.5 254v2M293.5 302v7M294.5 210v1M294.5 254v2M294.5 304v7M295.5 210v1M295.5 254v2M295.5 309v8M296.5 210v1M296.5 311v6M297.5 210v1M297.5 254v2M297.5 306v9M298.5 210v1M298.5 306v7M299.5 210v1M299.5 309v6M300.5 210v1M300.5 306v5M301.5 210v1M301.5 254v2M301.5 304v5M302.5 210v1M302.5 306v7M303.5 210v1M303.5 309v6M304.5 210v1M304.5 311v6M305.5 210v1M305.5 311v6M306.5 210v1M306.5 309v6M307.5 210v1M307.5 254v2M307.5 304v5M308.5 210v1M308.5 254v2M308.5 304v5M309.5 210v1M309.5 254v2M309.5 309v6M310.5 210v1M310.5 254v2M310.5 309v8M311.5 210v1M311.5 254v2M311.5 304v7M312.5 210v1M312.5 304v7M313.5 210v1M313.5 306v7M315.5 210v1M315.5 254v2M315.5 304v7M316.5 210v1M316.5 254v2M316.5 300v6M317.5 210v1M317.5 254v2M317.5 300v6M318.5 210v1M318.5 304v7M319.5 210v1M319.5 304v7M320.5 210v1M321.5 210v1M321.5 304v5M322.5 210v1M322.5 296v8M323.5 210v1M323.5 306v7M324.5 210v1M324.5 304v7M325.5 210v1M325.5 304v7M326.5 210v1M326.5 254v2M326.5 304v7M327.5 210v1M327.5 254v2M327.5 304v7M328.5 210v1M328.5 254v2M328.5 302v7M329.5 210v1M330.5 210v1M330.5 374v1M331.5 210v1M331.5 374v1M332.5 210v1M332.5 254v2M332.5 315v8M332.5 370v2M332.5 374v1M333.5 210v1M333.5 365v3M333.5 370v2M333.5 374v1M334.5 210v1M334.5 325v11M334.5 365v3M334.5 374v1M335.5 210v1M335.5 327v9M335.5 365v3M335.5 370v2M335.5 374v1M336.5 210v1M336.5 275v6M336.5 363v5M336.5 370v2M336.5 374v1M337.5 210v1M337.5 271v4M337.5 346v3M337.5 363v5M337.5 370v2M337.5 374v1M338.5 210v1M338.5 254v2M338.5 363v2M338.5 370v2M338.5 374v1M339.5 210v1M339.5 237v4M339.5 370v2M339.5 374v1M340.5 210v1M340.5 363v2M340.5 370v2M340.5 374v1M341.5 210v1M341.5 228v2M341.5 363v2M341.5 370v2M341.5 374v1M342.5 210v1M342.5 363v2M342.5 370v2M342.5 374v1M343.5 210v1M343.5 220v2M343.5 363v2M343.5 370v2M343.5 374v1M344.5 210v1M344.5 363v2M344.5 370v2M344.5 374v1M345.5 210v1M345.5 370v2M345.5 374v1M346.5 210v1M346.5 216v2M346.5 370v2M346.5 374v1M347.5 210v1M347.5 370v2M347.5 374v1M348.5 210v1M348.5 370v2M348.5 374v1M349.5 210v1M349.5 363v2M349.5 370v2M349.5 374v1M350.5 210v1M350.5 363v2M350.5 370v2M350.5 374v1M351.5 210v1M351.5 214v2M351.5 363v2M351.5 370v2M351.5 374v1M352.5 363v2M352.5 370v2M352.5 374v1M353.5 363v2M353.5 370v2M354.5 363v5M355.5 210v1M355.5 241v2M355.5 363v2M356.5 205v2M356.5 210v1M357.5 203v2M357.5 210v1M357.5 241v2M358.5 210v1M358.5 241v2M358.5 359v2M359.5 210v1M360.5 210v1M361.5 210v1M362.5 210v1M363.5 210v1M363.5 241v2M363.5 359v2M364.5 210v1M364.5 241v2M364.5 359v2M365.5 210v1M366.5 210v1M367.5 210v1M368.5 210v1M368.5 359v2M369.5 210v1M370.5 210v1M370.5 359v2M371.5 210v1M372.5 210v1M373.5 210v1M374.5 210v1M375.5 210v1M376.5 210v1M377.5 210v1M378.5 210v1M379.5 210v1M380.5 210v1M381.5 210v1M382.5 210v1M383.5 210v1M384.5 210v1M385.5 210v1M386.5 210v1M386.5 224v2M386.5 363v2M387.5 210v1M387.5 363v2M388.5 210v1M388.5 363v2M388.5 370v2M389.5 210v1M389.5 224v2M389.5 363v5M389.5 370v2M389.5 374v1M390.5 210v1M390.5 363v2M390.5 370v2M390.5 374v1M391.5 210v1M391.5 363v2M391.5 370v2M391.5 374v1M392.5 210v1M392.5 239v2M392.5 363v2M392.5 370v2M392.5 374v1M393.5 210v1M393.5 233v2M393.5 245v2M393.5 363v2M393.5 370v2M393.5 374v1M394.5 210v1M394.5 237v2M394.5 363v2M394.5 370v2M394.5 374v1M395.5 210v1M395.5 243v2M395.5 363v2M395.5 370v2M395.5 374v1M449.5 210v1M449.5 254v2M449.5 306v7M450.5 210v1M450.5 254v2M450.5 309v6M451.5 210v1M451.5 254v2M451.5 309v6M461.5 210v1M461.5 254v2M461.5 311v4M462.5 210v1M462.5 254v2M462.5 309v6M463.5 210v1M463.5 254v2M463.5 306v7M464.5 254v2M464.5 313v2M465.5 254v2M465.5 313v2M466.5 210v1M466.5 254v2M466.5 309v6M467.5 210v1M467.5 254v2M467.5 309v6M468.5 210v1M468.5 254v2M468.5 311v4M469.5 210v1M469.5 254v2M469.5 311v6M470.5 210v1M470.5 254v2M470.5 309v6M471.5 210v1M471.5 254v2M471.5 309v6M472.5 210v1M472.5 254v2M472.5 309v6M473.5 210v1M473.5 254v2M473.5 309v6M474.5 210v1M474.5 254v2M474.5 306v7M475.5 210v1M475.5 254v2M475.5 306v7M476.5 210v1M476.5 254v2M476.5 309v6M477.5 210v1M477.5 254v2M477.5 311v4M478.5 210v1M478.5 254v2M478.5 309v4M479.5 210v1M479.5 306v7M480.5 210v1M480.5 304v7M481.5 210v1M481.5 254v2M481.5 306v7M487.5 210v1M487.5 256v2M487.5 262v2M487.5 363v2M487.5 370v2M487.5 374v1M488.5 210v1M488.5 363v2M488.5 370v2M488.5 374v1M489.5 210v1M489.5 262v2M489.5 363v2M489.5 370v2M489.5 374v1M490.5 210v1M490.5 370v2M490.5 374v1M491.5 210v1M491.5 370v2M491.5 374v1M492.5 210v1M492.5 363v2M492.5 370v2M492.5 374v1M493.5 210v1M493.5 363v2M493.5 370v2M493.5 374v1M494.5 210v1M494.5 363v2M494.5 370v2M494.5 374v1M495.5 210v1M495.5 370v2M495.5 374v1M496.5 210v1M496.5 363v2M496.5 370v2M496.5 374v1M497.5 210v1M497.5 363v5M498.5 210v1M498.5 363v5M499.5 210v1M499.5 363v2M499.5 370v2M499.5 374v1M500.5 210v1M500.5 235v2M500.5 363v2M500.5 370v2M500.5 374v1M501.5 210v1M501.5 233v2M501.5 239v4M501.5 363v5M502.5 210v1M502.5 237v2M502.5 241v2M502.5 363v5M503.5 210v1M503.5 235v2M503.5 363v2M503.5 370v2M503.5 374v1M504.5 210v1M504.5 228v2M504.5 363v2M504.5 370v2M504.5 374v1M505.5 210v1M505.5 226v2M505.5 363v2M505.5 370v2M505.5 374v1M506.5 210v1M506.5 230v3M506.5 363v2M506.5 370v2M507.5 210v1M507.5 363v5M508.5 210v1M509.5 210v1M510.5 210v1M510.5 216v2M510.5 224v2M510.5 359v2M511.5 210v1M511.5 222v2M511.5 359v2M512.5 210v1M512.5 359v2M513.5 359v2M514.5 359v2M515.5 210v1M515.5 359v2M516.5 210v1M516.5 359v2M517.5 210v1M517.5 359v2M518.5 210v1M518.5 359v2M519.5 210v1M519.5 359v2M520.5 210v1M520.5 359v2M521.5 210v1M521.5 359v2M522.5 210v1M523.5 210v1M523.5 359v2M524.5 210v1M525.5 210v1M525.5 359v2M526.5 210v1M527.5 210v1M528.5 210v1M528.5 359v2M529.5 210v1M529.5 241v2M530.5 210v1M530.5 241v2M530.5 359v2M531.5 210v1M532.5 210v1M533.5 210v1M534.5 210v1M534.5 359v2M535.5 210v1M536.5 203v2M536.5 210v1M537.5 205v2M537.5 210v1M537.5 359v2M538.5 203v2M538.5 207v2M538.5 210v1M538.5 359v2M539.5 205v2M539.5 209v2M539.5 359v2M540.5 207v2M540.5 213v1M541.5 209v2M541.5 359v2M542.5 210v1M542.5 359v2M543.5 210v1M543.5 359v2M544.5 210v1M544.5 220v2M544.5 359v2M545.5 210v1M545.5 222v2M545.5 359v2M546.5 210v1M546.5 218v2M546.5 224v2M546.5 359v2M547.5 210v1M547.5 220v2M547.5 226v2M548.5 210v1M548.5 222v2M548.5 359v2M549.5 210v1M550.5 210v1M550.5 363v2M551.5 210v1M551.5 363v2M552.5 210v1M552.5 363v2M552.5 370v2M553.5 210v1M553.5 363v5M553.5 370v2M553.5 374v1M554.5 210v1M554.5 363v2M554.5 370v2M554.5 374v1M555.5 210v1M555.5 237v2M555.5 363v2M555.5 370v2M555.5 374v1M556.5 210v1M556.5 239v2M556.5 363v2M556.5 370v2M556.5 374v1M557.5 210v1M557.5 235v2M557.5 363v2M557.5 370v2M557.5 374v1M558.5 210v1M558.5 237v2M558.5 243v2M558.5 363v2M558.5 370v2M558.5 374v1M559.5 210v1M559.5 239v2M559.5 363v2M559.5 370v2M559.5 374v1M560.5 210v1M560.5 370v2M560.5 374v1M561.5 210v1M561.5 363v2M561.5 370v2M561.5 374v1M562.5 210v1M562.5 363v5M563.5 210v1M563.5 363v5M564.5 210v1M564.5 363v5M564.5 370v2M564.5 374v1M565.5 210v1M565.5 254v2M565.5 363v2M565.5 370v2M565.5 374v1M566.5 210v1M566.5 254v2M566.5 258v2M566.5 363v2M566.5 370v2M566.5 374v1M567.5 210v1M567.5 254v2M567.5 262v2M567.5 273v2M567.5 370v2M567.5 374v1M568.5 210v1M568.5 254v2M568.5 271v2M568.5 370v2M568.5 374v1M569.5 210v1M569.5 254v2M569.5 370v2M569.5 374v1M570.5 210v1M570.5 254v2M571.5 210v1M571.5 254v2M572.5 210v1M572.5 254v2M572.5 363v2M572.5 370v2M572.5 374v1M573.5 210v1M573.5 363v5M574.5 210v1M574.5 254v2M574.5 363v2M574.5 370v2M574.5 374v1M575.5 210v1M575.5 254v2M575.5 363v2M575.5 370v2M575.5 374v1M576.5 210v1M576.5 363v5M577.5 210v1M577.5 254v2M577.5 363v2M577.5 370v2M577.5 374v1M578.5 210v1M578.5 254v2M578.5 363v2M578.5 370v2M578.5 374v1M579.5 210v1M579.5 254v2M579.5 363v2M579.5 370v2M579.5 374v1M580.5 210v1M580.5 254v2M580.5 363v2M580.5 370v2M580.5 374v1M581.5 210v1M581.5 254v2M581.5 370v2M581.5 374v1M582.5 210v1M582.5 254v2M582.5 363v2M582.5 370v2M582.5 374v1M583.5 210v1M583.5 254v2M583.5 363v2M583.5 370v2M583.5 374v1M584.5 210v1M584.5 254v2M584.5 363v2M584.5 370v2M584.5 374v1M585.5 210v1M585.5 254v2M585.5 363v2M585.5 370v2M585.5 374v1M586.5 210v1M586.5 254v2M586.5 363v2M586.5 370v2M586.5 374v1M587.5 210v1M587.5 254v2M587.5 363v2M587.5 370v2M587.5 374v1M588.5 210v1M588.5 254v2M588.5 363v2M588.5 370v2M588.5 374v1M589.5 210v1M589.5 254v2M589.5 363v5M590.5 210v1M590.5 254v2M590.5 363v2M590.5 370v2M590.5 374v1M591.5 210v1M591.5 254v2M591.5 363v2M591.5 370v2M591.5 374v1M592.5 210v1M592.5 254v2M592.5 359v2M592.5 363v2M592.5 370v2M592.5 374v1M593.5 210v1M593.5 330v10M593.5 359v2M593.5 370v2M593.5 374v1M594.5 277v17M594.5 334v4M594.5 359v2M594.5 363v2M594.5 370v2M594.5 374v1M595.5 271v16M595.5 359v9M596.5 210v1M596.5 254v2M596.5 294v8M596.5 323v17M596.5 359v6M596.5 370v2M596.5 374v1M597.5 210v1M597.5 254v2M597.5 283v63M597.5 363v2M597.5 370v2M597.5 374v1M598.5 210v1M598.5 254v2M598.5 281v13M598.5 304v19M598.5 340v6M598.5 370v2M598.5 374v1M599.5 210v1M599.5 254v2M599.5 279v11M599.5 342v7M599.5 370v2M599.5 374v1M600.5 210v1M600.5 277v10M600.5 344v5M600.5 370v2M600.5 374v1M601.5 210v1M601.5 254v2M601.5 277v10M601.5 344v5M601.5 359v6M601.5 370v2M601.5 374v1M602.5 210v1M602.5 254v2M602.5 279v8M602.5 344v5M602.5 359v6M602.5 370v2M602.5 374v1M603.5 210v1M603.5 254v2M603.5 281v6M603.5 342v4M603.5 359v9M604.5 210v1M604.5 281v9M604.5 342v4M604.5 361v7M605.5 210v1M605.5 254v2M605.5 279v6M605.5 344v5M605.5 361v7M606.5 210v1M606.5 254v2M606.5 275v8M606.5 346v3M606.5 359v6M606.5 370v2M606.5 374v1M607.5 210v1M607.5 254v2M607.5 273v8M607.5 349v2M607.5 359v6M607.5 370v2M607.5 374v1M608.5 210v1M608.5 254v2M608.5 273v6M608.5 349v2M608.5 359v2M608.5 363v2M608.5 370v2M608.5 374v1M609.5 210v1M609.5 254v2M609.5 273v6M609.5 349v2M609.5 359v2M609.5 363v2M609.5 370v2M609.5 374v1M610.5 210v1M610.5 254v2M610.5 273v6M610.5 349v2M610.5 359v2M610.5 363v2M610.5 370v2M610.5 374v1M611.5 210v1M611.5 254v2M611.5 273v6M611.5 349v2M611.5 359v2M611.5 363v2M611.5 370v2M611.5 374v1M612.5 210v1M612.5 254v2M612.5 273v6M612.5 349v2M612.5 363v2M612.5 370v2M612.5 374v1M613.5 210v1M613.5 254v2M613.5 275v4M613.5 349v2M613.5 363v5M613.5 370v2M613.5 374v1M614.5 210v1M614.5 254v2M614.5 275v4M614.5 349v2M614.5 363v2M614.5 370v2M614.5 374v1M615.5 210v1M615.5 254v2M615.5 273v4M615.5 349v2M615.5 363v2M615.5 370v2M615.5 374v1M616.5 210v1M616.5 254v2M616.5 271v6M616.5 349v2M616.5 370v2M616.5 374v1M617.5 210v1M617.5 271v6M617.5 349v2M617.5 370v2M617.5 374v1M618.5 210v1M618.5 268v7M618.5 349v2M618.5 370v2M618.5 374v1M619.5 210v1M619.5 271v6M619.5 349v2M619.5 370v2M619.5 374v1M620.5 210v1M620.5 254v2M620.5 273v6M620.5 349v2M620.5 370v2M620.5 374v1M621.5 210v1M621.5 254v2M621.5 273v6M621.5 346v3M621.5 363v2M621.5 370v2M621.5 374v1M622.5 210v1M622.5 254v2M622.5 275v6M622.5 346v3M622.5 363v2M622.5 370v2M622.5 374v1M623.5 210v1M623.5 254v2M623.5 275v6M623.5 346v3M623.5 363v2M623.5 370v2M623.5 374v1M624.5 210v1M624.5 254v2M624.5 275v8M624.5 346v3M624.5 363v2M624.5 370v2M624.5 374v1M625.5 210v1M625.5 254v2M625.5 277v6M625.5 344v5M625.5 351v2M625.5 363v2M625.5 370v2M625.5 374v1M626.5 210v1M626.5 254v2M626.5 277v6M626.5 344v5M626.5 351v2M626.5 363v2M626.5 370v2M626.5 374v1M627.5 210v1M627.5 254v2M627.5 277v8M627.5 344v2M627.5 349v2M627.5 363v2M627.5 370v2M627.5 374v1M628.5 210v1M628.5 254v2M628.5 279v8M628.5 342v4M628.5 349v2M628.5 363v2M628.5 370v2M628.5 374v1M629.5 210v1M629.5 254v2M629.5 279v8M629.5 342v4M629.5 349v2M629.5 363v2M629.5 370v2M629.5 374v1M630.5 210v1M630.5 254v2M630.5 279v8M630.5 340v11M630.5 370v2M630.5 374v1M631.5 210v1M631.5 254v2M631.5 281v11M631.5 309v12M631.5 338v6M631.5 346v3M631.5 370v2M631.5 374v1M632.5 210v1M632.5 254v2M632.5 287v53M632.5 346v3M632.5 363v2M632.5 370v2M632.5 374v1M633.5 210v1M633.5 254v2M633.5 344v2M633.5 363v5M634.5 210v1M634.5 254v2M634.5 344v2M634.5 363v2M634.5 370v2M634.5 374v1M635.5 210v1M635.5 254v2M635.5 344v2M635.5 363v2M635.5 370v2M635.5 374v1M636.5 210v1M636.5 254v2M636.5 340v4M636.5 363v2M636.5 370v2M636.5 374v1M637.5 210v1M637.5 254v2M637.5 336v6M637.5 363v2M637.5 370v2M637.5 374v1M638.5 210v1M638.5 254v2M638.5 336v4M638.5 363v2M638.5 370v2M638.5 374v1M639.5 210v1M639.5 363v5M640.5 210v1M640.5 363v5M641.5 210v1M641.5 254v2M641.5 363v5M641.5 370v2M641.5 374v1M642.5 210v1M642.5 254v2M642.5 363v2M642.5 370v2M642.5 374v1M643.5 210v1M643.5 254v2M643.5 363v2M643.5 370v2M643.5 374v1M644.5 210v1M644.5 363v5M644.5 370v2M644.5 374v1M645.5 210v1M645.5 363v5M645.5 370v2M645.5 374v1M646.5 210v1M646.5 363v5M646.5 370v2M646.5 374v1M647.5 210v1M647.5 363v2M647.5 370v2M647.5 374v1M648.5 210v1M648.5 363v2M648.5 370v2M648.5 374v1M649.5 210v1M649.5 363v2M649.5 370v2M649.5 374v1M650.5 210v1M650.5 264v2M650.5 363v2M650.5 370v2M650.5 374v1M651.5 210v1M651.5 254v2M651.5 258v2M651.5 363v2M651.5 370v2M651.5 374v1M652.5 210v1M652.5 363v2M652.5 370v2M652.5 374v1M653.5 210v1M653.5 363v2M653.5 370v2M653.5 374v1M654.5 210v1M654.5 363v2M654.5 370v2M654.5 374v1M655.5 210v1M655.5 363v2M655.5 370v2M655.5 374v1M656.5 210v1M656.5 363v2M656.5 370v2M656.5 374v1M657.5 210v1M657.5 363v2M657.5 370v2M657.5 374v1M658.5 210v1M658.5 239v2M658.5 363v2M658.5 370v2M658.5 374v1M659.5 210v1M659.5 237v2M659.5 363v2M659.5 370v2M659.5 374v1M660.5 210v1M660.5 235v2M660.5 363v2M660.5 370v2M660.5 374v1M661.5 210v1M661.5 233v2M661.5 239v2M661.5 370v2M661.5 374v1M662.5 210v1M662.5 230v3M662.5 237v2M662.5 370v2M662.5 374v1M663.5 210v1M663.5 235v2M663.5 363v2M663.5 370v2M663.5 374v1M664.5 210v1M664.5 226v2M664.5 233v2M664.5 363v2M664.5 370v2M664.5 374v1M665.5 210v1M665.5 363v2M665.5 370v2M665.5 374v1M666.5 210v1M666.5 228v2M666.5 363v2M666.5 370v2M666.5 374v1M667.5 210v1M667.5 224v2M667.5 370v2M667.5 374v1M668.5 210v1M668.5 224v2M668.5 346v3M668.5 363v2M668.5 370v2M668.5 374v1M669.5 210v1M669.5 241v2M669.5 346v3M669.5 363v5M670.5 210v1M670.5 241v2M670.5 363v5M671.5 210v1M671.5 363v2M671.5 370v2M671.5 374v1M672.5 210v1M672.5 216v2M672.5 363v2M673.5 210v1M674.5 210v1M674.5 218v2M674.5 359v2M675.5 207v2M675.5 359v2M676.5 359v2M677.5 210v1M677.5 241v2M677.5 359v2M678.5 210v1M678.5 359v2M679.5 210v1M679.5 359v2M680.5 210v1M680.5 359v2M681.5 210v1M681.5 359v2M682.5 210v1M682.5 241v2M683.5 210v1M683.5 363v2M684.5 210v1M684.5 363v2M684.5 370v2M684.5 374v1M685.5 210v1M685.5 370v2M685.5 374v1M686.5 210v1M686.5 363v2M686.5 370v2M686.5 374v1M687.5 210v1M687.5 363v2M687.5 370v2M687.5 374v1"/><path stroke="#00ff44" d="M220.5 213v1M220.5 241v2M221.5 241v2M222.5 241v2M222.5 365v3M223.5 222v2M223.5 241v2M223.5 365v3M224.5 220v2M224.5 241v2M224.5 365v3M224.5 372v2M225.5 222v2M225.5 241v2M225.5 365v3M225.5 372v2M226.5 241v2M226.5 372v2M227.5 241v2M227.5 372v2M228.5 241v2M228.5 365v3M229.5 228v2M229.5 241v2M229.5 365v3M230.5 241v2M230.5 372v2M231.5 241v2M231.5 372v2M232.5 226v2M232.5 241v2M232.5 365v3M233.5 241v2M233.5 372v2M234.5 241v2M234.5 372v2M235.5 237v2M235.5 241v2M235.5 372v2M236.5 372v2M237.5 245v2M237.5 365v3M238.5 243v2M238.5 249v3M238.5 372v2M239.5 241v2M239.5 249v5M239.5 260v4M239.5 372v2M240.5 241v2M240.5 271v2M240.5 277v4M240.5 365v3M241.5 241v2M241.5 294v4M241.5 365v3M242.5 241v2M242.5 323v2M242.5 365v3M243.5 363v5M244.5 241v2M244.5 319v11M244.5 365v3M245.5 241v2M245.5 321v6M245.5 372v2M246.5 241v2M246.5 319v13M246.5 372v2M247.5 241v2M247.5 304v2M247.5 319v2M247.5 349v2M247.5 372v2M248.5 241v2M248.5 311v6M248.5 365v3M248.5 372v2M249.5 241v2M249.5 313v6M249.5 365v3M249.5 372v2M250.5 241v2M250.5 315v8M250.5 357v2M250.5 372v2M251.5 241v2M251.5 313v6M252.5 241v2M252.5 313v6M253.5 241v2M253.5 315v6M254.5 241v2M254.5 319v6M255.5 241v2M255.5 317v6M256.5 241v2M256.5 249v3M259.5 249v3M260.5 241v2M260.5 309v6M261.5 241v2M261.5 311v6M262.5 241v2M262.5 317v8M263.5 241v2M263.5 309v2M264.5 241v2M264.5 327v11M265.5 241v2M265.5 319v8M266.5 241v2M266.5 313v6M267.5 309v6M269.5 241v2M269.5 319v6M270.5 315v8M271.5 315v8M272.5 241v2M272.5 313v6M273.5 241v2M273.5 313v6M274.5 241v2M274.5 313v6M275.5 241v2M275.5 311v2M276.5 241v2M276.5 313v6M277.5 241v2M277.5 309v6M278.5 241v2M278.5 309v4M279.5 311v6M280.5 241v2M280.5 313v6M281.5 241v2M281.5 315v6M282.5 241v2M282.5 311v6M283.5 311v6M284.5 241v2M284.5 317v6M285.5 241v2M285.5 319v8M286.5 241v2M286.5 319v8M287.5 241v2M287.5 315v6M288.5 241v2M288.5 313v6M289.5 241v2M289.5 313v6M290.5 241v2M290.5 315v6M291.5 241v2M291.5 298v2M292.5 241v2M292.5 313v6M293.5 309v6M294.5 311v6M295.5 241v2M295.5 317v6M296.5 241v2M296.5 317v8M297.5 241v2M297.5 315v6M298.5 241v2M298.5 313v6M299.5 241v2M299.5 315v6M300.5 241v2M300.5 311v6M301.5 309v6M302.5 241v2M302.5 313v6M303.5 241v2M303.5 315v6M304.5 241v2M304.5 317v6M305.5 241v2M305.5 317v8M306.5 241v2M306.5 315v6M309.5 315v8M310.5 317v6M311.5 311v6M312.5 241v2M312.5 311v6M313.5 241v2M313.5 313v6M315.5 241v2M315.5 311v4M316.5 306v7M317.5 306v5M318.5 241v2M318.5 311v4M319.5 241v2M319.5 311v6M320.5 241v2M321.5 241v2M322.5 241v2M322.5 304v5M323.5 241v2M323.5 313v6M324.5 241v2M324.5 311v6M325.5 241v2M325.5 311v6M326.5 311v6M327.5 311v2M327.5 317v2M328.5 309v2M329.5 241v2M330.5 241v2M330.5 298v2M330.5 315v4M331.5 241v2M331.5 372v2M332.5 323v11M333.5 241v2M333.5 336v8M333.5 359v4M333.5 372v2M334.5 241v2M334.5 372v2M335.5 241v2M335.5 372v2M336.5 241v2M336.5 281v4M336.5 372v2M337.5 235v6M337.5 243v2M337.5 247v5M337.5 264v7M337.5 372v2M338.5 230v3M338.5 249v3M338.5 336v2M338.5 365v3M339.5 235v2M339.5 363v5M340.5 230v3M340.5 241v2M340.5 365v3M341.5 241v2M341.5 365v3M341.5 372v2M342.5 222v2M342.5 226v2M342.5 241v2M342.5 365v3M343.5 241v2M343.5 365v3M344.5 241v2M344.5 365v3M345.5 241v2M345.5 363v5M346.5 220v2M346.5 241v2M346.5 363v5M347.5 241v2M347.5 363v5M348.5 241v2M348.5 363v5M349.5 216v2M349.5 241v2M349.5 365v3M350.5 241v2M350.5 365v3M350.5 372v2M351.5 241v2M351.5 365v3M351.5 372v2M352.5 241v2M352.5 365v3M352.5 372v2M353.5 213v1M353.5 241v2M353.5 365v3M354.5 209v2M354.5 241v2M355.5 207v2M356.5 241v2M359.5 241v2M359.5 359v2M360.5 241v2M360.5 359v2M361.5 241v2M361.5 359v2M362.5 241v2M362.5 359v2M365.5 241v2M365.5 359v2M366.5 241v2M366.5 359v2M367.5 241v2M367.5 359v2M368.5 241v2M369.5 241v2M370.5 241v2M371.5 241v2M372.5 241v2M372.5 359v2M373.5 241v2M373.5 359v2M374.5 241v2M374.5 359v2M375.5 241v2M375.5 359v2M376.5 241v2M376.5 359v2M377.5 213v3M377.5 241v2M378.5 213v1M378.5 241v2M378.5 359v2M379.5 216v2M379.5 241v2M379.5 359v2M380.5 214v2M380.5 241v2M380.5 359v2M381.5 218v2M381.5 241v2M381.5 359v2M382.5 216v2M382.5 241v2M382.5 359v2M383.5 220v2M383.5 241v2M383.5 359v2M384.5 218v2M384.5 241v2M385.5 241v2M386.5 220v2M386.5 241v2M387.5 241v2M387.5 365v3M388.5 241v2M388.5 365v3M389.5 241v2M389.5 372v2M390.5 241v2M390.5 365v3M390.5 372v2M391.5 228v2M391.5 241v2M391.5 365v3M391.5 372v2M392.5 230v3M392.5 241v2M392.5 365v3M393.5 365v3M394.5 365v3M394.5 372v2M395.5 241v2M395.5 365v3M395.5 372v2M449.5 313v6M450.5 315v2M461.5 315v6M462.5 315v4M463.5 313v6M464.5 315v4M465.5 315v4M466.5 315v4M467.5 315v4M468.5 315v6M469.5 317v4M470.5 315v4M471.5 315v4M472.5 315v4M473.5 315v2M474.5 313v4M475.5 313v4M476.5 315v6M477.5 315v6M478.5 313v6M479.5 254v2M479.5 313v6M480.5 254v2M480.5 311v6M481.5 313v6M487.5 241v2M487.5 254v2M487.5 258v4M487.5 365v3M487.5 372v2M488.5 241v2M488.5 247v2M488.5 365v3M489.5 365v3M490.5 249v3M490.5 363v5M491.5 243v2M491.5 363v5M492.5 365v3M493.5 365v3M493.5 372v2M494.5 241v2M494.5 365v3M495.5 363v5M496.5 365v3M496.5 372v2M497.5 372v2M498.5 239v2M498.5 372v2M499.5 365v3M499.5 372v2M500.5 365v3M500.5 372v2M501.5 372v2M502.5 372v2M503.5 241v2M503.5 365v3M503.5 372v2M504.5 233v2M504.5 241v2M504.5 365v3M505.5 241v2M505.5 365v3M506.5 241v2M506.5 365v3M507.5 228v2M507.5 241v2M508.5 222v2M508.5 241v2M509.5 220v2M509.5 241v2M510.5 241v2M511.5 214v2M511.5 241v2M512.5 218v2M512.5 241v2M513.5 241v2M513.5 361v2M514.5 241v2M514.5 361v2M515.5 241v2M516.5 203v2M516.5 241v2M517.5 241v2M518.5 241v2M519.5 241v2M520.5 241v2M520.5 361v2M521.5 241v2M521.5 361v2M522.5 241v2M522.5 361v2M523.5 241v2M524.5 241v2M524.5 359v2M525.5 241v2M526.5 241v2M526.5 359v2M527.5 241v2M527.5 359v2M528.5 241v2M530.5 306v3M530.5 361v2M531.5 241v2M532.5 241v2M532.5 359v2M533.5 241v2M534.5 241v2M535.5 241v2M536.5 241v2M536.5 359v2M537.5 241v2M538.5 241v2M539.5 241v2M540.5 241v2M540.5 359v2M541.5 241v2M542.5 241v2M543.5 241v2M544.5 241v2M545.5 241v2M546.5 241v2M547.5 241v2M547.5 359v2M548.5 241v2M549.5 241v2M550.5 241v2M551.5 241v2M551.5 365v3M552.5 228v2M552.5 241v2M552.5 365v3M553.5 224v2M553.5 241v2M553.5 372v2M554.5 241v2M554.5 365v3M554.5 372v2M555.5 241v2M555.5 365v3M555.5 372v2M556.5 233v2M556.5 241v2M556.5 365v3M556.5 372v2M557.5 365v3M557.5 372v2M558.5 365v3M558.5 372v2M559.5 245v2M559.5 365v3M560.5 363v5M561.5 241v2M561.5 365v3M561.5 372v2M562.5 241v2M562.5 254v2M562.5 372v2M563.5 241v2M563.5 372v2M564.5 241v2M564.5 252v2M564.5 260v2M564.5 372v2M565.5 241v2M565.5 264v2M565.5 365v3M565.5 372v2M566.5 268v3M566.5 365v3M567.5 264v2M567.5 363v5M568.5 363v5M569.5 363v5M570.5 363v5M570.5 370v2M570.5 374v1M571.5 363v5M571.5 370v2M571.5 374v1M572.5 365v3M572.5 372v2M573.5 241v2M573.5 372v2M574.5 241v2M574.5 365v3M574.5 372v2M575.5 241v2M575.5 365v3M575.5 372v2M576.5 241v2M576.5 372v2M577.5 241v2M577.5 365v3M577.5 372v2M578.5 365v3M578.5 372v2M579.5 365v3M579.5 372v2M580.5 365v3M581.5 363v5M582.5 365v3M583.5 365v3M583.5 372v2M584.5 365v3M584.5 372v2M585.5 365v3M585.5 372v2M586.5 365v3M587.5 365v3M588.5 365v3M588.5 372v2M589.5 241v2M589.5 372v2M590.5 365v3M590.5 372v2M591.5 365v3M591.5 372v2M592.5 365v3M593.5 254v2M593.5 363v5M594.5 262v15M594.5 365v3M595.5 203v8M595.5 213v28M595.5 243v11M595.5 256v15M595.5 372v2M596.5 365v3M596.5 372v2M597.5 359v4M597.5 365v3M598.5 294v10M598.5 323v17M598.5 361v7M599.5 290v52M599.5 361v7M600.5 254v2M600.5 287v57M600.5 361v7M601.5 287v57M601.5 365v3M602.5 287v57M602.5 365v3M602.5 372v2M603.5 241v2M603.5 287v55M603.5 372v2M604.5 241v2M604.5 290v52M604.5 368v2M604.5 372v2M605.5 241v2M605.5 285v9M605.5 306v38M605.5 372v2M606.5 283v4M606.5 342v4M606.5 365v3M606.5 372v2M607.5 281v6M607.5 344v5M607.5 365v3M608.5 279v6M608.5 344v5M608.5 365v3M609.5 279v6M609.5 344v5M609.5 365v3M610.5 279v4M610.5 346v3M610.5 365v3M611.5 279v4M611.5 346v3M611.5 365v3M612.5 279v6M612.5 344v5M612.5 365v3M612.5 372v2M613.5 279v6M613.5 344v5M613.5 372v2M614.5 279v6M614.5 344v5M614.5 365v3M614.5 372v2M615.5 277v6M615.5 346v3M615.5 365v3M616.5 277v6M616.5 346v3M616.5 363v5M617.5 254v2M617.5 277v4M617.5 346v3M617.5 363v5M618.5 254v2M618.5 275v6M618.5 346v3M618.5 363v5M619.5 254v2M619.5 277v4M619.5 346v3M619.5 363v5M620.5 279v4M620.5 344v5M620.5 363v5M621.5 279v6M621.5 344v2M621.5 365v3M622.5 281v6M622.5 342v4M622.5 365v3M622.5 372v2M623.5 281v6M623.5 342v4M623.5 365v3M623.5 372v2M624.5 283v4M624.5 340v6M624.5 365v3M624.5 372v2M625.5 283v7M625.5 338v6M625.5 365v3M625.5 372v2M626.5 283v7M626.5 338v6M626.5 365v3M627.5 285v9M627.5 309v35M627.5 365v3M628.5 287v55M628.5 365v3M629.5 287v55M629.5 365v3M630.5 287v53M630.5 363v5M631.5 292v17M631.5 321v17M631.5 363v5M632.5 365v3M632.5 372v2M633.5 241v2M633.5 372v2M634.5 365v3M634.5 372v2M635.5 342v2M635.5 365v3M636.5 365v3M636.5 372v2M637.5 365v3M637.5 372v2M638.5 241v2M638.5 365v3M638.5 372v2M639.5 241v2M639.5 372v2M640.5 241v2M640.5 372v2M641.5 241v2M641.5 372v2M642.5 241v2M642.5 365v3M642.5 372v2M643.5 241v2M643.5 365v3M643.5 372v2M644.5 241v2M644.5 372v2M645.5 241v2M645.5 372v2M646.5 241v2M646.5 372v2M647.5 241v2M647.5 365v3M647.5 372v2M648.5 241v2M648.5 365v3M648.5 372v2M649.5 241v2M649.5 365v3M649.5 372v2M650.5 241v2M650.5 365v3M650.5 372v2M651.5 260v2M651.5 264v2M651.5 365v3M652.5 260v2M652.5 365v3M653.5 249v3M653.5 365v3M654.5 241v2M654.5 247v2M654.5 365v3M655.5 241v2M655.5 365v3M655.5 372v2M656.5 241v2M656.5 365v3M657.5 365v3M658.5 365v3M659.5 365v3M659.5 372v2M660.5 365v3M660.5 372v2M661.5 241v2M661.5 363v5M662.5 241v2M662.5 363v5M663.5 241v2M663.5 365v3M664.5 241v2M664.5 365v3M665.5 230v3M665.5 241v2M665.5 365v3M666.5 241v2M666.5 342v2M666.5 346v3M666.5 365v3M667.5 241v2M667.5 342v2M667.5 346v3M667.5 363v5M668.5 241v2M668.5 342v2M668.5 365v3M668.5 372v2M669.5 224v2M669.5 342v2M669.5 372v2M670.5 372v2M671.5 241v2M671.5 365v3M671.5 372v2M672.5 224v2M672.5 241v2M672.5 365v3M673.5 241v2M674.5 241v2M674.5 361v2M675.5 241v2M676.5 205v2M676.5 213v1M676.5 241v2M677.5 361v2M678.5 241v2M678.5 361v2M679.5 241v2M680.5 241v2M680.5 361v2M681.5 241v2M681.5 361v2M683.5 241v2M683.5 365v3M684.5 241v2M684.5 365v3M685.5 241v2M685.5 363v5M686.5 241v2M686.5 365v3M687.5 241v2M687.5 365v3M687.5 372v2"/><path stroke="#00ff32" d="M222.5 214v2M222.5 218v2M222.5 368v2M222.5 372v2M223.5 368v2M223.5 372v2M224.5 224v2M224.5 368v2M225.5 226v2M225.5 368v2M226.5 228v2M226.5 368v2M227.5 230v3M227.5 368v2M228.5 230v3M228.5 368v2M228.5 372v2M229.5 230v3M229.5 368v2M229.5 372v2M230.5 368v2M231.5 368v2M232.5 368v2M232.5 372v2M233.5 230v3M233.5 368v2M234.5 233v2M234.5 368v2M235.5 368v2M236.5 368v2M237.5 239v2M237.5 368v2M237.5 372v2M238.5 241v2M238.5 245v2M238.5 368v2M239.5 256v4M239.5 368v2M240.5 273v4M240.5 368v2M240.5 372v2M241.5 298v2M241.5 368v2M241.5 372v2M242.5 368v2M242.5 372v2M243.5 241v2M243.5 372v2M244.5 368v2M244.5 372v2M245.5 368v2M246.5 334v2M246.5 368v2M247.5 306v7M247.5 321v6M247.5 368v2M248.5 317v4M248.5 368v2M249.5 319v8M249.5 363v2M249.5 368v2M250.5 300v6M250.5 323v7M250.5 346v3M250.5 368v2M251.5 319v6M251.5 370v2M252.5 319v6M252.5 370v2M252.5 374v1M253.5 321v6M253.5 370v2M253.5 374v1M254.5 325v7M254.5 370v2M254.5 374v1M255.5 323v7M256.5 252v2M256.5 256v61M257.5 241v2M258.5 241v2M259.5 241v2M259.5 252v2M259.5 256v61M260.5 315v6M261.5 317v6M262.5 325v7M263.5 344v15M263.5 370v2M263.5 374v1M264.5 338v21M264.5 370v2M264.5 374v1M265.5 327v9M266.5 319v6M267.5 241v2M267.5 315v6M268.5 241v2M268.5 323v7M269.5 325v11M270.5 241v2M270.5 323v7M271.5 241v2M271.5 323v7M272.5 319v6M275.5 313v4M276.5 319v6M277.5 315v4M279.5 241v2M279.5 317v6M280.5 319v8M281.5 321v6M282.5 317v6M283.5 241v2M283.5 317v6M284.5 323v7M285.5 327v9M286.5 327v9M287.5 321v6M288.5 319v8M289.5 319v6M290.5 321v6M291.5 300v9M291.5 327v3M292.5 319v8M293.5 241v2M293.5 315v6M294.5 241v2M294.5 317v6M295.5 323v9M296.5 325v9M297.5 321v6M298.5 319v6M299.5 321v6M300.5 317v6M301.5 241v2M301.5 315v6M302.5 319v6M303.5 321v6M304.5 323v7M305.5 325v7M306.5 321v9M307.5 241v2M308.5 241v2M309.5 241v2M309.5 323v7M310.5 241v2M310.5 323v9M311.5 241v2M311.5 317v6M312.5 317v6M313.5 319v8M316.5 241v2M316.5 313v2M317.5 241v2M317.5 311v6M318.5 315v6M319.5 317v4M320.5 302v4M322.5 309v6M322.5 321v2M323.5 319v6M324.5 317v6M325.5 317v6M326.5 241v2M327.5 241v2M327.5 319v6M327.5 370v2M327.5 374v1M328.5 241v2M328.5 317v4M328.5 370v2M328.5 374v1M329.5 317v4M329.5 370v2M329.5 374v1M330.5 300v6M330.5 319v6M330.5 370v2M331.5 313v6M332.5 241v2M332.5 334v15M332.5 361v2M332.5 365v5M332.5 372v2M333.5 313v6M333.5 368v2M334.5 355v2M334.5 368v2M335.5 368v2M336.5 368v2M337.5 245v2M337.5 252v2M337.5 256v8M337.5 368v2M338.5 245v4M338.5 368v2M338.5 372v2M339.5 241v2M339.5 372v2M340.5 368v2M340.5 372v2M341.5 224v2M341.5 368v2M342.5 368v2M342.5 372v2M343.5 224v2M343.5 368v2M343.5 372v2M344.5 368v2M344.5 372v2M345.5 218v2M345.5 372v2M346.5 372v2M347.5 372v2M348.5 214v2M348.5 372v2M349.5 368v2M349.5 372v2M350.5 368v2M351.5 368v2M352.5 209v2M352.5 368v2M353.5 207v2M353.5 368v2M353.5 374v1M354.5 370v2M354.5 374v1M355.5 365v3M355.5 370v2M355.5 374v1M356.5 370v2M356.5 374v1M357.5 361v2M357.5 370v2M357.5 374v1M358.5 361v2M358.5 370v2M358.5 374v1M359.5 361v2M359.5 370v2M359.5 374v1M360.5 361v2M360.5 370v2M360.5 374v1M361.5 361v2M361.5 370v2M361.5 374v1M362.5 361v2M362.5 370v2M362.5 374v1M363.5 361v2M363.5 370v2M363.5 374v1M364.5 361v2M364.5 370v2M364.5 374v1M365.5 361v2M365.5 370v2M365.5 374v1M366.5 361v2M366.5 370v2M366.5 374v1M367.5 361v2M367.5 370v2M367.5 374v1M368.5 361v2M368.5 370v2M368.5 374v1M370.5 361v2M370.5 370v2M370.5 374v1M372.5 361v2M372.5 370v2M372.5 374v1M373.5 370v2M373.5 374v1M374.5 370v2M374.5 374v1M375.5 370v2M375.5 374v1M376.5 361v2M376.5 370v2M376.5 374v1M378.5 370v2M378.5 374v1M379.5 370v2M379.5 374v1M380.5 361v2M380.5 370v2M380.5 374v1M381.5 361v2M381.5 370v2M381.5 374v1M382.5 370v2M382.5 374v1M383.5 361v2M383.5 370v2M383.5 374v1M384.5 361v2M384.5 370v2M384.5 374v1M385.5 222v2M385.5 370v2M385.5 374v1M386.5 365v3M386.5 370v2M386.5 374v1M387.5 370v2M387.5 374v1M388.5 368v2M388.5 374v1M389.5 228v2M389.5 368v2M390.5 226v2M390.5 368v2M391.5 368v2M392.5 237v2M392.5 368v2M392.5 372v2M393.5 243v2M393.5 368v2M393.5 372v2M394.5 239v2M394.5 368v2M395.5 245v2M395.5 368v2M449.5 241v2M449.5 319v6M450.5 241v2M450.5 319v6M451.5 241v2M451.5 321v4M453.5 319v2M454.5 319v2M461.5 241v2M461.5 321v4M462.5 241v2M462.5 319v6M463.5 241v2M463.5 319v4M464.5 241v2M464.5 321v2M465.5 241v2M465.5 321v2M466.5 241v2M466.5 319v4M467.5 241v2M467.5 319v2M468.5 241v2M469.5 241v2M470.5 241v2M470.5 319v2M471.5 241v2M471.5 323v2M472.5 241v2M472.5 321v4M473.5 241v2M473.5 317v8M474.5 241v2M474.5 317v6M475.5 241v2M475.5 317v6M476.5 241v2M476.5 321v4M477.5 241v2M477.5 321v4M478.5 241v2M478.5 319v6M479.5 241v2M479.5 319v4M480.5 241v2M480.5 317v6M481.5 241v2M481.5 319v4M487.5 368v2M488.5 368v2M488.5 372v2M489.5 260v2M489.5 368v2M489.5 372v2M490.5 372v2M491.5 372v2M492.5 239v4M492.5 372v2M493.5 368v2M494.5 237v2M494.5 368v2M494.5 372v2M495.5 372v2M496.5 368v2M497.5 368v2M498.5 368v2M499.5 368v2M500.5 368v2M501.5 368v2M502.5 368v2M503.5 368v2M504.5 368v2M504.5 372v2M505.5 368v2M505.5 372v2M506.5 368v2M506.5 374v1M507.5 370v2M507.5 374v1M508.5 363v2M508.5 370v2M508.5 374v1M509.5 361v2M509.5 370v2M509.5 374v1M510.5 361v2M510.5 370v2M510.5 374v1M511.5 361v2M511.5 370v2M511.5 374v1M512.5 361v2M512.5 370v2M512.5 374v1M513.5 207v2M513.5 370v2M513.5 374v1M514.5 203v2M514.5 213v1M514.5 370v2M514.5 374v1M515.5 207v2M515.5 361v2M515.5 370v2M515.5 374v1M516.5 361v2M516.5 370v2M516.5 374v1M517.5 332v4M517.5 361v2M517.5 370v2M517.5 374v1M518.5 332v4M518.5 361v2M518.5 370v2M518.5 374v1M519.5 332v4M519.5 361v2M519.5 370v2M519.5 374v1M520.5 332v4M520.5 370v2M520.5 374v1M521.5 332v4M521.5 370v2M521.5 374v1M522.5 370v2M522.5 374v1M523.5 361v2M523.5 370v2M523.5 374v1M524.5 361v2M524.5 370v2M524.5 374v1M525.5 361v2M525.5 370v2M525.5 374v1M526.5 361v2M526.5 370v2M526.5 374v1M527.5 361v2M527.5 370v2M527.5 374v1M528.5 361v2M528.5 370v2M528.5 374v1M530.5 302v2M530.5 370v2M530.5 374v1M532.5 306v3M532.5 361v2M532.5 370v2M532.5 374v1M534.5 306v3M534.5 361v2M534.5 370v2M534.5 374v1M536.5 306v3M536.5 361v2M536.5 370v2M536.5 374v1M537.5 306v3M537.5 361v2M537.5 370v2M537.5 374v1M538.5 361v2M538.5 370v2M538.5 374v1M539.5 361v2M539.5 370v2M539.5 374v1M540.5 361v2M540.5 370v2M540.5 374v1M541.5 361v2M541.5 370v2M541.5 374v1M542.5 213v1M542.5 361v2M542.5 370v2M542.5 374v1M543.5 361v2M543.5 370v2M543.5 374v1M544.5 361v2M544.5 370v2M544.5 374v1M545.5 361v2M545.5 370v2M545.5 374v1M546.5 361v2M546.5 370v2M546.5 374v1M547.5 361v2M547.5 370v2M547.5 374v1M548.5 361v2M548.5 370v2M548.5 374v1M549.5 224v2M549.5 370v2M549.5 374v1M550.5 226v2M550.5 365v3M550.5 370v2M550.5 374v1M551.5 222v2M551.5 368v4M551.5 374v1M552.5 222v2M552.5 368v2M552.5 374v1M553.5 230v3M553.5 368v2M554.5 368v2M555.5 230v3M555.5 368v2M556.5 368v2M557.5 368v2M558.5 368v2M559.5 368v2M559.5 372v2M560.5 247v2M560.5 372v2M561.5 368v2M562.5 247v2M562.5 368v2M563.5 249v3M563.5 256v2M563.5 368v2M564.5 368v2M565.5 256v2M565.5 368v2M566.5 241v2M566.5 368v2M566.5 372v2M567.5 241v2M567.5 372v2M568.5 241v2M568.5 273v4M568.5 372v2M569.5 241v2M569.5 372v2M570.5 241v2M570.5 372v2M571.5 241v2M571.5 372v2M572.5 241v2M572.5 368v2M573.5 368v2M574.5 368v2M575.5 368v2M576.5 368v2M577.5 368v2M578.5 241v2M578.5 368v2M579.5 241v2M579.5 368v2M580.5 241v2M580.5 368v2M580.5 372v2M581.5 241v2M581.5 372v2M582.5 241v2M582.5 368v2M582.5 372v2M583.5 241v2M583.5 368v2M584.5 241v2M584.5 368v2M585.5 241v2M585.5 368v2M586.5 241v2M586.5 368v2M586.5 372v2M587.5 241v2M587.5 368v2M587.5 372v2M588.5 241v2M588.5 368v2M589.5 368v2M590.5 241v2M590.5 368v2M591.5 241v2M591.5 368v2M592.5 241v2M592.5 368v2M592.5 372v2M593.5 241v2M593.5 372v2M594.5 203v8M594.5 213v28M594.5 243v11M594.5 256v6M594.5 368v2M594.5 372v2M595.5 368v2M596.5 241v2M596.5 368v2M597.5 241v2M597.5 368v2M597.5 372v2M598.5 241v2M598.5 359v2M598.5 372v2M599.5 241v2M599.5 359v2M599.5 372v2M600.5 241v2M600.5 359v2M600.5 372v2M601.5 241v2M601.5 368v2M601.5 372v2M602.5 241v2M602.5 368v2M603.5 368v2M605.5 294v12M605.5 368v2M606.5 241v2M606.5 287v55M606.5 368v2M607.5 241v2M607.5 287v7M607.5 306v38M607.5 368v2M607.5 372v2M608.5 241v2M608.5 285v7M608.5 340v4M608.5 368v2M608.5 372v2M609.5 241v2M609.5 285v5M609.5 340v4M609.5 368v2M609.5 372v2M610.5 241v2M610.5 283v7M610.5 340v6M610.5 368v2M610.5 372v2M611.5 241v2M611.5 283v7M611.5 342v4M611.5 368v2M611.5 372v2M612.5 241v2M612.5 285v5M612.5 340v4M612.5 368v2M613.5 241v2M613.5 285v5M613.5 340v4M613.5 368v2M614.5 241v2M614.5 285v5M614.5 340v4M614.5 368v2M615.5 241v2M615.5 283v4M615.5 342v4M615.5 368v2M615.5 372v2M616.5 241v2M616.5 283v4M616.5 342v4M616.5 372v2M617.5 241v2M617.5 281v6M617.5 342v4M617.5 372v2M618.5 241v2M618.5 281v6M618.5 342v4M618.5 372v2M619.5 241v2M619.5 281v6M619.5 342v4M619.5 372v2M620.5 241v2M620.5 283v7M620.5 340v4M620.5 372v2M621.5 241v2M621.5 285v7M621.5 338v6M621.5 368v2M621.5 372v2M622.5 241v2M622.5 287v7M622.5 306v36M622.5 368v2M623.5 241v2M623.5 287v9M623.5 304v38M623.5 368v2M624.5 241v2M624.5 287v53M624.5 368v2M625.5 241v2M625.5 290v48M625.5 368v2M626.5 241v2M626.5 290v48M626.5 368v2M626.5 372v2M627.5 241v2M627.5 294v15M627.5 368v2M627.5 372v2M628.5 241v2M628.5 368v2M628.5 372v2M629.5 241v2M629.5 368v2M629.5 372v2M630.5 241v2M630.5 372v2M631.5 241v2M631.5 372v2M632.5 241v2M632.5 368v2M633.5 368v2M634.5 241v2M634.5 368v2M635.5 241v2M635.5 368v2M635.5 372v2M636.5 241v2M636.5 368v2M637.5 241v2M637.5 368v2M638.5 368v2M639.5 368v2M640.5 368v2M641.5 368v2M642.5 368v2M643.5 368v2M644.5 368v2M645.5 368v2M646.5 368v2M647.5 368v2M648.5 368v2M649.5 368v2M650.5 266v2M650.5 368v2M651.5 241v2M651.5 368v2M651.5 372v2M652.5 241v2M652.5 368v2M652.5 372v2M653.5 241v2M653.5 256v2M653.5 368v2M653.5 372v2M654.5 254v2M654.5 368v2M654.5 372v2M655.5 245v2M655.5 368v2M656.5 243v2M656.5 368v2M656.5 372v2M657.5 372v2M658.5 368v2M658.5 372v2M659.5 368v2M660.5 368v2M661.5 372v2M662.5 372v2M663.5 368v2M663.5 372v2M664.5 368v2M664.5 372v2M665.5 368v2M665.5 372v2M666.5 372v2M667.5 372v2M668.5 368v2M669.5 368v2M670.5 368v2M671.5 220v2M671.5 226v2M671.5 368v2M672.5 368v4M672.5 374v1M673.5 214v2M673.5 220v2M673.5 370v2M673.5 374v1M674.5 370v2M674.5 374v1M675.5 214v2M675.5 361v2M675.5 370v2M675.5 374v1M676.5 361v2M676.5 370v2M676.5 374v1M677.5 203v2M677.5 370v2M677.5 374v1M678.5 370v2M678.5 374v1M679.5 361v2M679.5 370v2M679.5 374v1M680.5 344v2M680.5 370v2M680.5 374v1M681.5 344v2M681.5 370v2M681.5 374v1M682.5 370v2M682.5 374v1M683.5 368v4M683.5 374v1M684.5 372v2M685.5 372v2M686.5 368v2M686.5 372v2M687.5 368v2"/><path stroke="#00ff20" d="M221.5 214v2M223.5 218v2M227.5 228v2M231.5 228v2M232.5 228v2M235.5 235v2M236.5 235v2M236.5 239v2M237.5 243v2M238.5 247v2M239.5 254v2M239.5 321v2M243.5 368v2M246.5 342v2M247.5 313v6M247.5 327v3M248.5 321v6M248.5 336v4M249.5 327v17M249.5 359v2M250.5 306v9M250.5 330v16M250.5 359v2M250.5 363v5M251.5 325v7M251.5 363v5M251.5 372v2M252.5 325v9M252.5 363v5M253.5 327v11M253.5 365v3M254.5 332v27M255.5 330v14M256.5 254v2M256.5 317v6M259.5 254v2M259.5 317v6M260.5 321v6M261.5 323v7M262.5 332v25M262.5 370v2M262.5 374v1M263.5 311v2M263.5 327v13M263.5 365v3M264.5 365v3M265.5 336v23M265.5 370v2M265.5 374v1M266.5 325v7M267.5 321v6M268.5 311v2M268.5 330v16M269.5 336v23M269.5 370v2M269.5 374v1M270.5 330v12M271.5 330v14M272.5 325v9M275.5 317v8M275.5 340v4M276.5 325v7M277.5 319v6M278.5 313v2M279.5 323v7M280.5 327v5M281.5 327v7M282.5 323v7M283.5 323v7M284.5 330v14M285.5 336v17M285.5 370v2M285.5 374v1M286.5 336v23M286.5 370v2M286.5 374v1M287.5 327v11M288.5 327v7M289.5 325v9M290.5 327v11M291.5 309v6M291.5 330v10M292.5 327v9M293.5 321v6M294.5 323v7M295.5 332v27M295.5 370v2M295.5 374v1M296.5 334v25M296.5 370v2M296.5 374v1M297.5 327v11M298.5 325v9M299.5 327v7M300.5 323v9M301.5 321v6M302.5 325v7M303.5 327v9M304.5 330v14M305.5 332v27M305.5 370v2M305.5 374v1M306.5 330v10M307.5 309v2M307.5 327v3M308.5 309v2M308.5 327v3M309.5 330v12M310.5 332v10M310.5 349v10M310.5 370v2M310.5 374v1M311.5 323v7M312.5 323v7M313.5 327v7M315.5 315v2M315.5 325v5M317.5 317v4M318.5 321v6M319.5 321v6M320.5 306v7M321.5 309v2M321.5 323v7M322.5 315v6M322.5 323v7M323.5 325v7M324.5 323v4M325.5 323v7M326.5 374v1M327.5 313v2M327.5 325v7M328.5 311v2M328.5 321v6M329.5 298v4M329.5 321v6M330.5 313v2M330.5 325v7M330.5 365v3M330.5 372v2M331.5 319v8M331.5 363v5M332.5 309v2M332.5 363v2M333.5 319v11M333.5 334v2M334.5 336v2M336.5 285v2M337.5 254v2M337.5 292v4M338.5 243v2M338.5 338v2M339.5 228v2M339.5 233v2M339.5 368v2M340.5 226v2M344.5 222v2M345.5 368v2M346.5 368v2M347.5 218v2M347.5 368v2M348.5 368v2M350.5 213v3M350.5 349v2M351.5 349v2M352.5 349v2M353.5 349v2M354.5 205v2M354.5 349v2M355.5 349v2M356.5 349v2M356.5 363v5M357.5 349v2M357.5 363v5M358.5 363v5M359.5 363v5M360.5 363v5M361.5 363v5M362.5 363v5M363.5 363v5M364.5 363v5M365.5 363v5M366.5 363v5M367.5 363v5M368.5 363v5M370.5 363v5M372.5 363v5M373.5 361v7M374.5 361v7M375.5 361v7M376.5 363v5M377.5 300v6M378.5 361v7M379.5 361v7M380.5 363v5M381.5 363v5M382.5 361v7M383.5 363v5M384.5 363v5M385.5 363v5M387.5 222v2M388.5 226v2M390.5 230v3M391.5 233v2M395.5 247v2M449.5 325v2M450.5 325v2M451.5 325v2M453.5 323v2M454.5 323v2M461.5 325v2M463.5 323v2M464.5 323v2M467.5 321v2M467.5 327v3M468.5 321v2M468.5 325v7M469.5 321v2M469.5 325v7M470.5 321v11M471.5 319v4M471.5 325v7M472.5 319v2M472.5 325v5M473.5 325v5M474.5 323v7M475.5 323v4M476.5 325v2M477.5 325v2M478.5 325v2M479.5 323v2M486.5 203v8M486.5 213v28M486.5 243v2M488.5 262v2M489.5 243v2M489.5 256v4M490.5 239v2M490.5 247v2M490.5 368v2M491.5 368v2M492.5 368v2M495.5 368v2M500.5 241v2M503.5 230v3M506.5 372v2M507.5 224v2M508.5 226v2M508.5 365v3M509.5 363v5M510.5 218v2M510.5 363v5M511.5 220v2M511.5 363v5M512.5 213v1M512.5 363v5M513.5 214v2M513.5 363v5M514.5 363v5M515.5 363v5M516.5 363v5M517.5 363v5M518.5 363v5M519.5 363v5M520.5 363v5M521.5 363v5M522.5 363v5M523.5 363v5M524.5 363v5M525.5 363v5M526.5 363v5M527.5 363v5M528.5 363v5M529.5 249v3M530.5 292v2M530.5 296v2M530.5 363v5M531.5 268v3M532.5 292v2M532.5 296v2M532.5 302v2M532.5 363v5M533.5 292v2M533.5 296v2M534.5 292v2M534.5 296v2M534.5 302v2M534.5 363v5M535.5 249v3M536.5 302v2M536.5 363v5M537.5 203v2M537.5 302v2M537.5 363v5M538.5 205v2M538.5 363v5M539.5 207v2M539.5 363v5M540.5 209v2M540.5 363v5M541.5 213v1M541.5 363v5M542.5 214v2M542.5 363v5M543.5 363v5M544.5 363v5M545.5 363v5M546.5 363v5M547.5 363v5M548.5 363v5M549.5 363v5M552.5 372v2M554.5 228v2M554.5 233v2M557.5 241v2M560.5 241v2M560.5 368v2M561.5 245v2M561.5 249v3M562.5 252v2M565.5 262v2M566.5 260v2M567.5 266v2M567.5 271v2M567.5 368v2M568.5 368v2M569.5 368v2M570.5 368v2M571.5 368v2M581.5 368v2M593.5 368v2M594.5 254v2M595.5 254v2M598.5 368v2M599.5 368v2M600.5 368v2M607.5 294v12M608.5 292v48M609.5 290v50M610.5 290v50M611.5 290v52M612.5 290v50M613.5 290v50M614.5 290v50M615.5 287v9M615.5 304v38M616.5 287v7M616.5 306v36M616.5 368v2M617.5 287v7M617.5 309v33M617.5 368v2M618.5 287v5M618.5 311v31M618.5 368v2M619.5 287v7M619.5 306v36M619.5 368v2M620.5 290v50M620.5 368v2M621.5 292v46M622.5 294v12M623.5 296v8M630.5 368v2M631.5 368v2M651.5 262v2M652.5 254v2M656.5 247v2M657.5 245v2M657.5 368v2M660.5 241v2M661.5 368v2M662.5 368v2M666.5 368v2M667.5 368v2M670.5 224v4M673.5 363v5M674.5 363v5M675.5 363v5M678.5 205v2M679.5 203v2M679.5 363v5M680.5 363v5M681.5 363v5M682.5 363v5M684.5 368v2M685.5 368v2"/><path stroke="#00ff0e" d="M220.5 349v2M221.5 213v1M221.5 349v2M222.5 216v2M223.5 220v2M224.5 222v2M225.5 224v2M226.5 226v2M230.5 228v2M233.5 228v2M234.5 230v3M235.5 233v2M236.5 237v2M236.5 241v2M240.5 325v2M242.5 330v2M243.5 327v3M244.5 336v2M245.5 332v2M247.5 330v6M248.5 327v9M248.5 351v2M249.5 344v2M249.5 361v2M250.5 349v2M250.5 355v2M250.5 361v2M251.5 332v21M251.5 359v4M252.5 334v21M252.5 361v2M252.5 372v2M253.5 338v21M253.5 363v2M253.5 372v2M254.5 359v2M254.5 363v5M254.5 372v2M255.5 344v9M256.5 323v2M256.5 368v4M256.5 374v1M257.5 249v3M258.5 249v3M259.5 323v2M260.5 327v7M261.5 330v10M262.5 361v7M263.5 313v8M263.5 325v2M263.5 340v4M263.5 363v2M263.5 372v2M264.5 359v2M264.5 372v2M265.5 359v2M265.5 365v3M266.5 332v14M267.5 327v11M268.5 313v6M268.5 321v2M268.5 346v17M268.5 370v2M268.5 374v1M269.5 359v4M270.5 342v17M270.5 370v2M270.5 374v1M271.5 344v7M271.5 357v8M271.5 370v2M271.5 374v1M272.5 334v17M272.5 357v8M272.5 368v7M274.5 355v10M274.5 372v3M275.5 325v7M275.5 344v21M275.5 374v1M276.5 332v14M277.5 325v7M278.5 315v2M278.5 330v2M279.5 330v8M280.5 361v4M280.5 370v5M281.5 334v19M281.5 359v6M281.5 370v5M284.5 344v9M284.5 359v6M284.5 370v2M284.5 374v1M285.5 359v6M286.5 359v6M287.5 338v11M287.5 355v10M287.5 370v2M287.5 374v1M288.5 334v15M288.5 355v10M288.5 370v5M289.5 334v31M289.5 370v5M290.5 338v27M290.5 370v2M290.5 374v1M291.5 315v8M291.5 340v11M291.5 361v4M291.5 370v2M291.5 374v1M292.5 336v15M292.5 361v4M292.5 370v2M292.5 374v1M293.5 327v11M294.5 330v12M295.5 359v6M296.5 359v4M297.5 338v4M297.5 359v4M297.5 370v2M297.5 374v1M298.5 334v10M298.5 359v2M298.5 365v10M299.5 334v27M299.5 365v10M300.5 332v10M301.5 327v7M302.5 332v43M303.5 336v32M303.5 370v2M303.5 374v1M304.5 353v15M304.5 370v2M304.5 374v1M305.5 359v9M306.5 340v6M306.5 357v11M306.5 370v2M306.5 374v1M307.5 311v6M307.5 330v8M308.5 311v6M308.5 330v12M309.5 349v19M309.5 370v2M309.5 374v1M310.5 359v9M311.5 330v12M312.5 330v10M313.5 334v2M313.5 340v9M315.5 317v2M315.5 330v6M315.5 340v2M316.5 315v2M316.5 325v5M317.5 321v6M318.5 327v9M319.5 327v9M320.5 313v4M320.5 334v2M321.5 311v2M321.5 330v8M322.5 330v12M322.5 353v12M323.5 332v17M324.5 327v9M324.5 351v10M325.5 330v2M325.5 372v3M326.5 317v2M326.5 336v21M326.5 370v2M327.5 332v12M327.5 372v2M328.5 327v7M328.5 372v2M329.5 302v7M329.5 315v2M329.5 327v7M329.5 365v3M329.5 372v2M330.5 332v17M331.5 327v9M331.5 368v2M333.5 300v2M333.5 330v4M333.5 357v2M334.5 296v2M335.5 302v2M336.5 298v2M336.5 349v2M337.5 241v2M337.5 290v2M338.5 233v2M340.5 228v2M344.5 220v2M346.5 218v2M347.5 216v2M349.5 214v2M351.5 213v1M352.5 213v1M353.5 372v2M354.5 368v2M354.5 372v2M355.5 203v2M355.5 372v2M356.5 203v2M356.5 372v2M357.5 372v2M358.5 372v2M359.5 372v2M360.5 372v2M361.5 372v2M362.5 372v2M363.5 372v2M364.5 372v2M365.5 372v2M366.5 372v2M367.5 372v2M368.5 372v2M369.5 300v9M370.5 372v2M372.5 372v2M373.5 372v2M374.5 372v2M375.5 372v2M376.5 372v2M377.5 306v9M378.5 372v2M379.5 372v2M380.5 372v2M381.5 372v2M382.5 372v2M383.5 372v2M384.5 372v2M385.5 372v2M386.5 372v2M387.5 368v2M387.5 372v2M388.5 372v2M392.5 235v2M393.5 235v2M394.5 247v2M449.5 338v6M450.5 336v8M451.5 336v8M453.5 340v2M454.5 340v2M455.5 203v8M455.5 213v28M455.5 243v11M455.5 256v27M455.5 287v9M455.5 302v13M455.5 319v4M461.5 332v8M461.5 349v2M461.5 368v2M462.5 325v2M462.5 330v8M463.5 330v8M464.5 330v4M465.5 323v2M465.5 330v4M466.5 323v2M466.5 327v9M467.5 325v2M467.5 330v6M467.5 374v1M468.5 323v2M468.5 332v4M468.5 344v2M468.5 353v2M468.5 363v2M468.5 372v3M469.5 323v2M469.5 332v2M469.5 372v2M470.5 332v2M470.5 342v2M470.5 361v2M471.5 370v2M472.5 330v2M472.5 340v2M472.5 359v2M473.5 330v2M473.5 368v2M475.5 327v3M476.5 336v2M476.5 355v2M476.5 365v3M477.5 334v4M477.5 344v2M477.5 353v4M477.5 363v2M477.5 374v1M478.5 334v2M478.5 353v2M478.5 363v2M478.5 372v3M479.5 374v1M480.5 323v2M480.5 332v2M481.5 330v2M481.5 370v5M486.5 245v9M488.5 249v3M489.5 241v2M489.5 252v2M496.5 241v2M505.5 230v3M506.5 226v2M507.5 368v2M507.5 372v2M508.5 372v2M509.5 224v2M509.5 372v2M510.5 372v2M511.5 372v2M512.5 372v2M513.5 372v2M514.5 372v2M515.5 372v2M516.5 372v2M517.5 372v2M518.5 372v2M519.5 372v2M520.5 372v2M521.5 372v2M522.5 372v2M523.5 372v2M524.5 372v2M525.5 372v2M526.5 372v2M527.5 372v2M528.5 372v2M530.5 372v2M532.5 372v2M534.5 372v2M535.5 252v2M535.5 256v36M535.5 298v4M535.5 309v16M536.5 372v2M537.5 372v2M538.5 372v2M539.5 372v2M540.5 372v2M541.5 372v2M542.5 372v2M543.5 214v4M543.5 372v2M544.5 216v2M544.5 372v2M545.5 372v2M546.5 372v2M547.5 372v2M548.5 372v2M549.5 372v2M550.5 372v2M551.5 372v2M564.5 258v2M566.5 266v2M567.5 268v3M595.5 241v2M615.5 296v8M616.5 294v12M617.5 294v15M618.5 292v19M619.5 294v12M652.5 256v4M653.5 252v2M654.5 252v2M655.5 249v3M657.5 241v2M658.5 243v2M664.5 228v2M666.5 226v2M666.5 344v2M667.5 344v2M668.5 344v2M669.5 226v2M669.5 344v2M672.5 218v2M672.5 222v2M672.5 372v2M673.5 372v2M674.5 213v1M674.5 216v2M674.5 372v2M675.5 372v2M676.5 372v2M677.5 207v2M677.5 372v2M678.5 344v2M678.5 372v2M679.5 344v2M679.5 372v2M680.5 372v2M681.5 346v3M681.5 372v2M682.5 372v2M683.5 372v2"/><path stroke="#07ff00" d="M241.5 321v2M242.5 325v2M243.5 332v2M244.5 330v2M245.5 338v2M247.5 336v2M247.5 346v3M249.5 353v2M251.5 368v2M252.5 368v2M253.5 368v2M254.5 361v2M254.5 368v2M256.5 325v2M256.5 365v3M256.5 372v2M257.5 252v2M257.5 256v50M258.5 252v2M258.5 256v50M259.5 325v2M260.5 334v2M260.5 353v4M260.5 359v16M261.5 340v6M261.5 353v4M261.5 359v16M262.5 357v2M262.5 368v2M262.5 372v2M263.5 321v4M263.5 368v2M264.5 363v2M264.5 368v2M265.5 361v2M265.5 368v2M265.5 372v2M266.5 346v17M266.5 365v10M267.5 338v25M267.5 368v7M268.5 319v2M268.5 372v2M269.5 372v2M270.5 372v2M271.5 368v2M271.5 372v2M273.5 319v2M273.5 355v4M274.5 319v4M275.5 332v8M275.5 372v2M276.5 346v19M276.5 372v3M277.5 332v21M277.5 359v6M277.5 370v5M278.5 317v6M278.5 327v3M278.5 332v2M278.5 346v7M279.5 338v15M279.5 359v6M279.5 370v5M282.5 374v1M283.5 353v22M284.5 365v3M284.5 372v2M285.5 372v2M286.5 372v2M287.5 372v2M290.5 368v2M290.5 372v2M291.5 323v4M291.5 351v2M291.5 357v4M291.5 368v2M291.5 372v2M292.5 351v2M292.5 357v4M292.5 368v2M292.5 372v2M293.5 338v15M293.5 357v8M293.5 368v7M294.5 342v9M294.5 368v7M295.5 368v2M295.5 372v2M296.5 368v2M296.5 372v2M297.5 368v2M297.5 372v2M300.5 342v33M301.5 361v14M303.5 368v2M303.5 372v2M304.5 368v2M304.5 372v2M305.5 368v2M305.5 372v2M306.5 368v2M306.5 372v2M307.5 317v6M307.5 338v2M307.5 370v5M308.5 317v6M308.5 342v2M308.5 349v26M309.5 368v2M309.5 372v2M310.5 368v2M310.5 372v2M311.5 349v26M312.5 340v4M312.5 349v26M315.5 319v6M315.5 342v2M316.5 317v2M316.5 330v45M317.5 327v24M318.5 336v15M319.5 336v2M319.5 368v2M320.5 317v6M320.5 336v2M321.5 313v6M321.5 321v2M321.5 338v17M322.5 342v11M324.5 336v15M324.5 361v2M324.5 374v1M325.5 332v2M326.5 319v6M326.5 357v2M326.5 372v2M328.5 334v10M328.5 368v2M329.5 334v17M329.5 355v2M329.5 368v2M330.5 368v2M331.5 311v2M331.5 336v13M331.5 351v2M331.5 361v2M333.5 306v3M333.5 344v2M335.5 287v3M335.5 351v2M337.5 287v3M338.5 237v4M339.5 230v3M341.5 226v2M342.5 224v2M343.5 222v2M345.5 220v2M348.5 216v2M352.5 338v2M353.5 209v2M353.5 338v2M354.5 207v2M354.5 338v2M355.5 205v2M355.5 338v2M355.5 368v2M356.5 338v2M356.5 368v2M357.5 368v2M358.5 368v2M359.5 368v2M360.5 368v2M361.5 368v2M362.5 368v2M363.5 368v2M364.5 368v2M365.5 368v2M366.5 368v2M367.5 368v2M368.5 368v2M369.5 309v6M370.5 368v2M371.5 300v2M372.5 368v2M373.5 368v2M374.5 368v2M375.5 368v2M376.5 368v2M377.5 315v6M378.5 214v2M378.5 368v2M379.5 214v2M379.5 368v2M380.5 216v2M380.5 368v2M381.5 216v2M381.5 368v2M382.5 218v2M382.5 368v2M383.5 218v2M383.5 368v2M384.5 220v2M384.5 368v2M385.5 220v2M385.5 368v2M386.5 222v2M386.5 368v2M387.5 224v2M388.5 224v2M389.5 226v2M391.5 230v3M392.5 233v2M449.5 336v2M449.5 344v2M449.5 355v2M449.5 363v2M449.5 374v1M450.5 344v2M450.5 363v2M450.5 372v3M451.5 353v2M451.5 363v2M451.5 372v3M453.5 353v2M453.5 372v2M454.5 353v2M454.5 372v2M455.5 334v10M457.5 351v2M457.5 370v2M458.5 351v2M458.5 370v2M459.5 351v2M459.5 359v2M459.5 368v2M460.5 359v2M460.5 368v2M461.5 330v2M462.5 338v2M462.5 349v2M462.5 357v2M462.5 368v2M463.5 325v2M463.5 338v2M463.5 357v2M464.5 346v3M464.5 365v3M465.5 346v3M465.5 355v2M465.5 365v3M465.5 374v1M466.5 325v2M466.5 336v2M466.5 355v2M466.5 374v1M467.5 323v2M467.5 344v2M467.5 353v2M467.5 363v2M469.5 334v2M469.5 342v4M469.5 351v4M469.5 361v4M469.5 374v1M470.5 351v2M470.5 370v4M471.5 332v2M471.5 340v4M471.5 351v2M471.5 359v4M472.5 342v2M472.5 349v2M472.5 368v4M473.5 338v4M473.5 349v2M473.5 357v4M473.5 370v2M474.5 338v4M474.5 357v2M474.5 368v2M475.5 336v4M475.5 346v3M475.5 355v4M475.5 365v5M476.5 327v3M476.5 338v2M476.5 344v5M476.5 357v2M476.5 363v2M476.5 374v1M477.5 365v3M477.5 372v2M478.5 336v2M478.5 342v4M478.5 351v2M478.5 355v2M478.5 361v2M479.5 332v4M479.5 342v2M479.5 351v4M479.5 361v4M479.5 370v4M480.5 330v2M480.5 340v4M480.5 351v2M480.5 359v4M480.5 370v5M481.5 323v2M481.5 332v2M481.5 340v2M481.5 349v4M481.5 359v4M481.5 368v2M483.5 203v2M483.5 222v2M483.5 230v3M483.5 239v2M483.5 258v2M483.5 266v2M483.5 275v2M483.5 285v2M483.5 294v2M486.5 256v8M488.5 252v2M489.5 245v2M489.5 254v2M490.5 245v2M491.5 237v2M494.5 239v2M501.5 235v2M502.5 233v2M508.5 368v2M509.5 368v2M510.5 222v2M510.5 368v2M511.5 216v2M511.5 368v2M512.5 216v2M512.5 368v2M513.5 209v2M513.5 368v2M514.5 205v2M514.5 209v2M514.5 368v2M515.5 205v2M515.5 368v2M516.5 368v2M517.5 368v2M518.5 368v2M519.5 368v2M520.5 368v2M521.5 368v2M522.5 368v2M523.5 368v2M524.5 368v2M525.5 368v2M526.5 368v2M527.5 368v2M528.5 368v2M529.5 252v2M529.5 256v84M530.5 304v2M530.5 368v2M532.5 304v2M532.5 368v2M533.5 300v25M534.5 304v2M534.5 368v2M535.5 254v2M535.5 292v2M535.5 296v2M535.5 302v7M536.5 304v2M536.5 368v2M537.5 304v2M537.5 368v2M538.5 368v2M539.5 368v2M540.5 368v2M541.5 368v2M542.5 368v2M543.5 368v2M544.5 218v2M544.5 368v2M545.5 218v4M545.5 368v2M546.5 220v4M546.5 368v2M547.5 222v4M547.5 368v2M548.5 224v4M548.5 368v2M549.5 368v2M550.5 368v2M552.5 226v2M553.5 226v2M555.5 235v2M556.5 235v4M557.5 237v4M558.5 239v2M559.5 243v2M560.5 243v2M565.5 258v2M566.5 262v2M594.5 241v2M659.5 239v2M660.5 237v4M661.5 235v4M662.5 233v4M663.5 230v5M665.5 226v2M667.5 226v2M671.5 222v2M673.5 368v2M674.5 368v2M675.5 209v2M675.5 368v2M676.5 209v2M676.5 334v4M676.5 368v2M677.5 368v2M678.5 368v2M679.5 334v4M679.5 368v2M680.5 368v2M681.5 368v2M682.5 368v2"/><path stroke="#28ff00" d="M220.5 342v2M221.5 342v2M222.5 334v2M222.5 338v2M241.5 327v3M246.5 336v2M246.5 340v2M248.5 340v2M251.5 357v2M252.5 355v2M253.5 361v2M255.5 353v6M255.5 372v3M256.5 327v3M256.5 363v2M259.5 327v3M265.5 363v2M270.5 359v2M272.5 365v3M273.5 321v6M274.5 323v7M278.5 323v4M278.5 344v2M278.5 359v6M278.5 370v5M280.5 332v2M284.5 368v2M286.5 365v5M287.5 365v5M291.5 365v3M295.5 365v3M297.5 365v3M298.5 361v2M301.5 334v8M307.5 323v4M308.5 323v4M316.5 319v6M317.5 351v24M319.5 365v3M320.5 323v7M320.5 332v2M320.5 365v5M321.5 319v2M322.5 368v2M323.5 374v1M325.5 334v17M325.5 370v2M326.5 325v7M326.5 361v2M327.5 315v2M327.5 344v2M327.5 351v4M328.5 344v2M328.5 359v2M328.5 365v3M329.5 309v2M330.5 306v3M330.5 353v4M332.5 304v2M332.5 359v2M333.5 302v2M334.5 298v2M334.5 304v2M334.5 340v2M335.5 290v4M335.5 300v2M335.5 336v2M336.5 296v2M337.5 336v2M338.5 235v2M350.5 346v3M351.5 346v3M352.5 346v3M353.5 346v3M354.5 346v3M355.5 346v3M356.5 346v3M357.5 346v3M366.5 332v2M369.5 315v6M371.5 302v9M377.5 321v9M377.5 334v4M390.5 228v2M393.5 237v4M394.5 243v4M449.5 353v2M449.5 372v2M450.5 353v4M451.5 344v2M451.5 355v2M454.5 361v2M454.5 370v2M455.5 254v2M455.5 351v4M455.5 361v2M455.5 370v4M457.5 361v2M458.5 359v2M458.5 368v2M459.5 370v2M460.5 351v2M460.5 370v2M461.5 357v4M463.5 327v3M463.5 349v2M463.5 365v5M464.5 325v2M464.5 355v4M465.5 325v2M466.5 344v5M466.5 363v5M467.5 355v2M467.5 372v2M468.5 361v2M469.5 370v2M470.5 344v2M470.5 353v2M470.5 359v2M470.5 363v2M470.5 374v1M471.5 349v2M471.5 368v2M471.5 372v2M472.5 332v2M472.5 351v2M472.5 357v2M472.5 361v2M474.5 330v2M474.5 346v5M474.5 355v2M474.5 359v2M474.5 365v3M475.5 374v1M476.5 334v2M476.5 353v2M476.5 368v2M476.5 372v2M477.5 357v2M478.5 332v2M478.5 365v3M478.5 370v2M479.5 325v2M479.5 344v2M480.5 334v2M480.5 349v2M480.5 353v2M480.5 363v2M480.5 368v2M481.5 338v2M481.5 357v2M486.5 241v2M486.5 254v2M486.5 264v7M488.5 256v2M492.5 237v2M496.5 239v2M500.5 237v4M501.5 237v2M502.5 235v2M503.5 233v2M504.5 230v3M505.5 228v2M506.5 228v2M507.5 226v2M508.5 224v2M509.5 222v2M515.5 203v2M529.5 254v2M530.5 294v2M531.5 271v61M532.5 294v2M533.5 294v2M534.5 294v2M535.5 294v2M543.5 340v2M545.5 340v2M546.5 340v2M549.5 226v2M550.5 224v2M551.5 224v2M554.5 230v3M560.5 245v2M561.5 247v2M562.5 249v3M563.5 252v2M564.5 254v4M565.5 260v2M566.5 264v2M654.5 249v3M656.5 245v2M657.5 243v2M664.5 230v3M665.5 228v2M668.5 226v2M671.5 224v2M672.5 220v2M673.5 216v4M674.5 214v2M675.5 213v1M676.5 207v2M677.5 205v2M678.5 203v2"/><path stroke="#4aff00" d="M220.5 351v24M221.5 351v24M222.5 346v3M237.5 241v2M240.5 323v2M242.5 327v3M243.5 330v2M248.5 349v2M250.5 351v2M251.5 353v2M252.5 359v2M253.5 359v2M255.5 359v2M255.5 368v4M256.5 330v2M256.5 359v4M257.5 254v2M257.5 306v3M257.5 374v1M258.5 254v2M258.5 306v3M258.5 374v1M259.5 368v7M260.5 357v2M261.5 357v2M262.5 359v2M263.5 359v2M264.5 361v2M267.5 365v3M270.5 361v2M273.5 327v11M274.5 330v10M277.5 368v2M278.5 334v10M280.5 334v27M282.5 330v8M282.5 351v2M282.5 359v2M282.5 372v2M283.5 330v8M283.5 351v2M285.5 365v5M288.5 368v2M289.5 368v2M293.5 365v3M294.5 351v17M296.5 363v2M297.5 342v17M299.5 361v4M314.5 264v2M314.5 271v4M314.5 279v4M314.5 287v3M314.5 296v2M314.5 304v2M314.5 311v4M314.5 319v4M314.5 327v3M314.5 344v2M314.5 351v4M314.5 359v4M314.5 368v2M319.5 338v27M319.5 374v1M320.5 330v2M320.5 338v27M324.5 365v3M324.5 372v2M325.5 363v2M326.5 332v4M326.5 359v2M327.5 346v5M327.5 359v4M327.5 368v2M328.5 346v9M329.5 351v2M330.5 363v2M331.5 306v3M332.5 349v2M333.5 355v2M334.5 338v2M335.5 294v2M336.5 346v3M337.5 342v4M338.5 241v2M369.5 321v9M371.5 311v6M393.5 241v2M394.5 241v2M411.5 203v8M411.5 213v87M412.5 203v8M412.5 213v89M450.5 334v2M451.5 334v2M453.5 361v4M453.5 370v2M453.5 374v1M454.5 351v2M455.5 241v2M457.5 359v2M458.5 361v2M461.5 327v3M461.5 340v2M462.5 327v3M463.5 346v3M464.5 338v2M464.5 374v1M465.5 357v2M465.5 363v2M466.5 353v2M466.5 372v2M467.5 336v2M467.5 346v3M467.5 365v3M468.5 342v2M468.5 355v2M470.5 334v2M470.5 340v2M472.5 338v2M472.5 372v2M473.5 342v2M473.5 346v3M473.5 361v2M473.5 365v3M474.5 336v2M474.5 370v2M474.5 374v1M475.5 340v2M475.5 344v2M475.5 349v2M475.5 359v2M475.5 363v2M477.5 327v3M477.5 338v2M477.5 342v2M477.5 346v3M477.5 351v2M477.5 361v2M477.5 368v4M479.5 336v2M479.5 340v2M479.5 349v2M479.5 355v2M479.5 359v2M481.5 342v2M481.5 363v2M486.5 271v6M488.5 254v2M488.5 258v4M489.5 247v5M490.5 243v2M491.5 239v4M510.5 220v2M511.5 218v2M512.5 214v2M513.5 213v1M514.5 207v2M535.5 325v9M535.5 346v29M544.5 340v2M547.5 340v2M548.5 340v2M549.5 340v2M550.5 340v2M551.5 340v2M552.5 224v2M553.5 228v2M555.5 233v2M563.5 254v2M653.5 254v2M655.5 247v2M677.5 334v4M678.5 334v4M678.5 346v3M679.5 346v3M680.5 346v3"/><path stroke="#6bff00" d="M220.5 212v1M221.5 212v1M222.5 212v1M223.5 212v1M224.5 212v1M225.5 212v1M226.5 212v1M227.5 212v1M228.5 212v1M229.5 212v1M230.5 212v1M231.5 212v1M232.5 212v1M233.5 212v1M234.5 212v1M235.5 212v1M236.5 212v1M237.5 212v1M238.5 212v1M239.5 212v1M240.5 212v1M241.5 212v1M241.5 323v2M242.5 212v1M243.5 212v1M244.5 212v1M244.5 334v2M245.5 212v1M245.5 334v2M246.5 212v1M246.5 338v2M247.5 212v1M247.5 338v2M247.5 344v2M248.5 212v1M248.5 342v2M249.5 212v1M249.5 346v3M249.5 351v2M250.5 212v1M250.5 353v2M251.5 212v1M252.5 212v1M253.5 212v1M254.5 212v1M255.5 212v1M255.5 361v7M256.5 212v1M256.5 332v2M256.5 357v2M257.5 212v1M257.5 309v6M257.5 368v6M258.5 212v1M258.5 309v6M258.5 368v6M259.5 212v1M260.5 212v1M260.5 336v10M261.5 212v1M262.5 212v1M263.5 212v1M263.5 361v2M264.5 212v1M265.5 212v1M266.5 212v1M267.5 212v1M268.5 212v1M269.5 212v1M270.5 212v1M271.5 212v1M271.5 365v3M272.5 212v1M273.5 212v1M273.5 338v17M273.5 359v6M273.5 368v7M274.5 212v1M274.5 340v15M275.5 212v1M276.5 212v1M277.5 212v1M277.5 365v3M278.5 212v1M279.5 212v1M280.5 212v1M281.5 212v1M282.5 212v1M282.5 338v13M282.5 361v4M282.5 370v2M283.5 212v1M283.5 338v13M284.5 212v1M285.5 212v1M286.5 212v1M287.5 212v1M288.5 212v1M288.5 365v3M289.5 212v1M290.5 212v1M290.5 365v3M291.5 212v1M292.5 212v1M292.5 365v3M293.5 212v1M293.5 355v2M294.5 212v1M295.5 212v1M296.5 212v1M297.5 212v1M298.5 212v1M298.5 363v2M299.5 212v1M300.5 212v1M301.5 212v1M302.5 212v1M303.5 212v1M304.5 212v1M305.5 212v1M306.5 212v1M306.5 346v3M306.5 355v2M307.5 212v1M307.5 363v7M308.5 212v1M309.5 212v1M310.5 212v1M311.5 212v1M312.5 212v1M313.5 212v1M315.5 212v1M316.5 212v1M317.5 212v1M318.5 212v1M318.5 372v3M319.5 212v1M319.5 370v2M320.5 212v1M321.5 212v1M322.5 212v1M322.5 365v3M322.5 370v2M323.5 212v1M324.5 212v1M325.5 212v1M326.5 212v1M327.5 212v1M327.5 355v2M328.5 212v1M328.5 313v4M329.5 212v1M329.5 311v4M329.5 353v2M329.5 357v2M330.5 212v1M330.5 311v2M330.5 361v2M331.5 212v1M331.5 309v2M332.5 212v1M332.5 306v3M332.5 351v2M333.5 212v1M333.5 304v2M333.5 346v3M334.5 212v1M334.5 342v2M334.5 351v2M335.5 212v1M336.5 212v1M336.5 292v4M337.5 212v1M337.5 340v2M338.5 212v1M339.5 212v1M340.5 212v1M341.5 212v1M342.5 212v1M343.5 212v1M344.5 212v1M345.5 212v1M346.5 212v1M347.5 212v1M348.5 212v1M349.5 212v1M350.5 212v1M351.5 212v1M352.5 212v1M352.5 334v4M353.5 212v1M353.5 334v4M354.5 212v1M354.5 334v4M355.5 212v1M355.5 334v4M356.5 212v1M356.5 334v4M357.5 212v1M358.5 212v1M359.5 212v1M360.5 212v1M361.5 212v1M362.5 212v1M363.5 212v1M364.5 212v1M365.5 212v1M366.5 212v1M367.5 212v1M368.5 212v1M369.5 212v1M370.5 212v1M371.5 212v1M371.5 317v8M372.5 212v1M373.5 212v1M374.5 212v1M374.5 330v2M375.5 212v1M375.5 330v2M376.5 212v1M376.5 330v2M377.5 212v1M378.5 212v1M379.5 212v1M380.5 212v1M381.5 212v1M382.5 212v1M383.5 212v1M383.5 330v2M384.5 212v1M385.5 212v1M386.5 212v1M387.5 212v1M388.5 212v1M389.5 212v1M390.5 212v1M391.5 212v1M392.5 212v1M393.5 212v1M394.5 212v1M395.5 212v1M411.5 212v1M411.5 300v2M411.5 306v3M412.5 212v1M412.5 302v2M413.5 203v8M413.5 212v80M417.5 203v8M417.5 212v88M449.5 212v1M449.5 332v4M450.5 212v1M450.5 332v2M451.5 212v1M451.5 332v2M452.5 203v8M452.5 212v29M452.5 243v11M452.5 256v29M452.5 290v10M452.5 304v11M452.5 321v6M452.5 334v12M452.5 353v4M452.5 361v4M452.5 372v3M453.5 230v3M453.5 268v3M453.5 306v3M453.5 344v2M454.5 230v3M454.5 268v3M454.5 306v3M454.5 363v2M454.5 374v1M455.5 212v1M455.5 330v4M457.5 353v2M457.5 368v2M457.5 372v2M460.5 357v2M461.5 212v1M461.5 351v2M461.5 370v2M462.5 212v1M462.5 359v2M462.5 365v3M463.5 212v1M463.5 355v2M464.5 224v2M464.5 249v3M464.5 287v3M464.5 349v2M464.5 368v2M465.5 224v2M465.5 249v3M465.5 287v3M466.5 212v1M467.5 212v1M467.5 361v2M468.5 212v1M468.5 351v2M468.5 370v2M469.5 212v1M469.5 359v2M470.5 212v1M470.5 349v2M470.5 368v2M471.5 212v1M471.5 344v2M471.5 353v2M471.5 357v2M471.5 363v2M471.5 374v1M472.5 212v1M473.5 212v1M473.5 351v2M473.5 355v2M473.5 372v2M474.5 212v1M474.5 361v2M474.5 372v2M475.5 212v1M475.5 330v2M475.5 353v2M475.5 370v4M476.5 212v1M476.5 340v2M476.5 359v4M476.5 370v2M477.5 212v1M477.5 332v2M477.5 359v2M478.5 212v1M478.5 338v4M478.5 346v3M478.5 357v4M478.5 368v2M479.5 212v1M479.5 330v2M479.5 365v5M480.5 212v1M480.5 325v2M480.5 338v2M480.5 344v2M480.5 357v2M480.5 365v3M481.5 212v1M481.5 327v3M481.5 334v2M481.5 346v3M481.5 353v4M481.5 365v3M486.5 212v1M486.5 277v8M487.5 212v1M488.5 212v1M489.5 212v1M490.5 212v1M491.5 212v1M492.5 212v1M493.5 212v1M494.5 212v1M495.5 212v1M496.5 212v1M497.5 212v1M498.5 212v1M499.5 212v1M500.5 212v1M501.5 212v1M502.5 212v1M503.5 212v1M504.5 212v1M505.5 212v1M506.5 212v1M507.5 212v1M508.5 212v1M509.5 212v1M510.5 212v1M511.5 212v1M512.5 212v1M513.5 212v1M514.5 212v1M515.5 212v1M516.5 212v1M517.5 212v1M518.5 212v1M519.5 212v1M520.5 212v1M521.5 212v1M522.5 212v1M523.5 212v1M524.5 212v1M525.5 212v1M526.5 212v1M527.5 212v1M528.5 212v1M529.5 212v1M529.5 340v35M530.5 212v1M531.5 212v1M531.5 332v2M532.5 212v1M533.5 212v1M533.5 325v2M534.5 212v1M534.5 338v2M535.5 212v1M536.5 212v1M536.5 338v2M537.5 212v1M537.5 338v2M538.5 212v1M538.5 338v2M539.5 212v1M539.5 338v2M540.5 212v1M541.5 212v1M542.5 212v1M543.5 212v1M544.5 212v1M545.5 212v1M546.5 212v1M547.5 212v1M548.5 212v1M549.5 212v1M550.5 212v1M551.5 212v1M552.5 212v1M553.5 212v1M554.5 212v1M555.5 212v1M556.5 212v1M557.5 212v1M558.5 212v1M558.5 241v2M559.5 212v1M559.5 241v2M560.5 212v1M561.5 212v1M562.5 212v1M563.5 212v1M564.5 212v1M565.5 212v1M566.5 212v1M567.5 212v1M568.5 212v1M569.5 212v1M570.5 212v1M571.5 212v1M572.5 212v1M573.5 212v1M574.5 212v1M575.5 212v1M576.5 212v1M577.5 212v1M578.5 212v1M579.5 212v1M580.5 212v1M581.5 212v1M582.5 212v1M583.5 212v1M584.5 212v1M585.5 212v1M586.5 212v1M587.5 212v1M588.5 212v1M589.5 212v1M590.5 212v1M591.5 212v1M592.5 212v1M593.5 212v1M594.5 212v1M595.5 212v1M596.5 212v1M597.5 212v1M598.5 212v1M599.5 212v1M600.5 212v1M601.5 212v1M602.5 212v1M603.5 212v1M604.5 212v1M605.5 212v1M606.5 212v1M607.5 212v1M608.5 212v1M609.5 212v1M610.5 212v1M611.5 212v1M612.5 212v1M613.5 212v1M614.5 212v1M615.5 212v1M616.5 212v1M617.5 212v1M618.5 212v1M619.5 212v1M620.5 212v1M621.5 212v1M622.5 212v1M623.5 212v1M624.5 212v1M625.5 212v1M626.5 212v1M627.5 212v1M628.5 212v1M629.5 212v1M630.5 212v1M631.5 212v1M632.5 212v1M633.5 212v1M634.5 212v1M635.5 212v1M636.5 212v1M637.5 212v1M638.5 212v1M639.5 212v1M640.5 212v1M641.5 212v1M642.5 212v1M643.5 212v1M644.5 212v1M645.5 212v1M646.5 212v1M647.5 212v1M648.5 212v1M649.5 212v1M650.5 212v1M651.5 212v1M652.5 212v1M653.5 212v1M654.5 212v1M655.5 212v1M656.5 212v1M657.5 212v1M658.5 212v1M659.5 212v1M659.5 241v2M660.5 212v1M661.5 212v1M662.5 212v1M663.5 212v1M664.5 212v1M665.5 212v1M666.5 212v1M667.5 212v1M668.5 212v1M669.5 212v1M670.5 212v1M671.5 212v1M672.5 212v1M673.5 212v1M674.5 212v1M675.5 212v1M676.5 212v1M676.5 365v3M677.5 212v1M677.5 365v3M678.5 212v1M678.5 365v3M679.5 212v1M680.5 212v1M681.5 212v1M682.5 212v1M683.5 212v1M684.5 212v1M685.5 212v1M686.5 212v1M687.5 212v1"/><path stroke="#8dff00" d="M220.5 211v1M221.5 211v1M222.5 211v1M223.5 211v1M224.5 211v1M225.5 211v1M226.5 211v1M227.5 211v1M228.5 211v1M229.5 211v1M230.5 211v1M231.5 211v1M232.5 211v1M233.5 211v1M234.5 211v1M235.5 211v1M236.5 211v1M237.5 211v1M238.5 211v1M239.5 211v1M240.5 211v1M240.5 321v2M241.5 211v1M241.5 325v2M242.5 211v1M243.5 211v1M244.5 211v1M244.5 332v2M245.5 211v1M245.5 336v2M246.5 211v1M247.5 211v1M248.5 211v1M249.5 211v1M249.5 349v2M250.5 211v1M251.5 211v1M251.5 355v2M252.5 211v1M252.5 357v2M253.5 211v1M254.5 211v1M255.5 211v1M256.5 211v1M256.5 334v2M256.5 355v2M257.5 211v1M257.5 315v6M257.5 363v5M258.5 211v1M258.5 315v6M258.5 363v5M259.5 211v1M259.5 330v2M259.5 365v3M260.5 211v1M261.5 211v1M262.5 211v1M263.5 211v1M264.5 211v1M265.5 211v1M266.5 211v1M266.5 363v2M267.5 211v1M268.5 211v1M269.5 211v1M270.5 211v1M271.5 211v1M272.5 211v1M273.5 211v1M273.5 365v3M274.5 211v1M275.5 211v1M276.5 211v1M277.5 211v1M278.5 211v1M279.5 211v1M280.5 211v1M281.5 211v1M282.5 211v1M283.5 211v1M284.5 211v1M285.5 211v1M286.5 211v1M287.5 211v1M287.5 349v2M287.5 353v2M288.5 211v1M288.5 349v2M288.5 353v2M289.5 211v1M289.5 365v3M290.5 211v1M291.5 211v1M291.5 355v2M292.5 211v1M293.5 211v1M294.5 211v1M295.5 211v1M296.5 211v1M296.5 365v3M297.5 211v1M297.5 363v2M298.5 211v1M299.5 211v1M300.5 211v1M301.5 211v1M302.5 211v1M303.5 211v1M304.5 211v1M304.5 351v2M305.5 211v1M306.5 211v1M307.5 211v1M308.5 211v1M309.5 211v1M310.5 211v1M311.5 211v1M312.5 211v1M313.5 211v1M315.5 211v1M316.5 211v1M317.5 211v1M318.5 211v1M319.5 211v1M320.5 211v1M320.5 372v2M321.5 211v1M322.5 211v1M322.5 374v1M323.5 211v1M323.5 349v2M323.5 365v5M324.5 211v1M324.5 370v2M325.5 211v1M326.5 211v1M326.5 363v2M327.5 211v1M328.5 211v1M329.5 211v1M330.5 211v1M330.5 349v2M331.5 211v1M331.5 349v2M331.5 353v2M332.5 211v1M332.5 357v2M333.5 211v1M334.5 211v1M334.5 300v4M334.5 353v2M335.5 211v1M335.5 296v4M336.5 211v1M336.5 287v5M336.5 336v2M337.5 211v1M338.5 211v1M339.5 211v1M340.5 211v1M341.5 211v1M342.5 211v1M343.5 211v1M344.5 211v1M345.5 211v1M346.5 211v1M347.5 211v1M348.5 211v1M349.5 211v1M350.5 211v1M351.5 211v1M352.5 211v1M353.5 211v1M354.5 211v1M355.5 211v1M356.5 211v1M357.5 211v1M358.5 211v1M359.5 211v1M360.5 211v1M361.5 211v1M362.5 211v1M363.5 211v1M364.5 211v1M365.5 211v1M366.5 211v1M366.5 340v2M367.5 211v1M367.5 332v2M367.5 340v2M368.5 211v1M368.5 332v2M368.5 340v2M369.5 211v1M370.5 211v1M371.5 211v1M371.5 325v5M372.5 211v1M373.5 211v1M374.5 211v1M375.5 211v1M376.5 211v1M377.5 211v1M378.5 211v1M379.5 211v1M380.5 211v1M381.5 211v1M382.5 211v1M383.5 211v1M384.5 211v1M385.5 211v1M386.5 211v1M387.5 211v1M388.5 211v1M389.5 211v1M390.5 211v1M391.5 211v1M392.5 211v1M393.5 211v1M394.5 211v1M395.5 211v1M410.5 203v93M411.5 211v1M411.5 302v4M411.5 315v2M412.5 211v1M412.5 306v5M412.5 317v2M413.5 211v1M413.5 292v12M417.5 211v1M417.5 300v2M417.5 306v3M435.5 203v99M436.5 203v89M437.5 203v89M438.5 203v89M439.5 203v89M449.5 211v1M449.5 327v3M450.5 211v1M451.5 211v1M451.5 361v2M452.5 211v1M452.5 332v2M452.5 370v2M453.5 252v2M453.5 271v4M453.5 290v6M453.5 351v2M453.5 355v2M454.5 252v2M454.5 271v4M454.5 290v6M454.5 344v2M455.5 211v1M455.5 327v3M455.5 363v2M455.5 374v1M458.5 353v2M459.5 361v2M461.5 211v1M462.5 211v1M463.5 211v1M463.5 374v1M464.5 271v2M464.5 290v2M464.5 309v4M465.5 271v2M465.5 290v2M465.5 309v4M465.5 338v2M466.5 211v1M467.5 211v1M468.5 211v1M468.5 336v2M468.5 346v3M468.5 365v3M469.5 211v1M469.5 355v2M470.5 211v1M471.5 211v1M472.5 211v1M472.5 344v5M472.5 363v5M472.5 374v1M473.5 211v1M473.5 332v2M473.5 363v2M473.5 374v1M474.5 211v1M474.5 342v4M474.5 351v2M474.5 363v2M475.5 211v1M475.5 342v2M475.5 361v2M476.5 211v1M476.5 342v2M476.5 349v4M477.5 211v1M477.5 340v2M477.5 349v2M478.5 211v1M478.5 349v2M479.5 211v1M479.5 338v2M479.5 346v3M479.5 357v2M480.5 211v1M480.5 336v2M480.5 346v3M480.5 355v2M481.5 211v1M481.5 336v2M481.5 344v2M482.5 203v38M482.5 243v11M482.5 256v119M486.5 211v1M486.5 285v13M487.5 211v1M488.5 211v1M489.5 211v1M490.5 211v1M490.5 241v2M491.5 211v1M492.5 211v1M493.5 211v1M494.5 211v1M495.5 211v1M496.5 211v1M497.5 211v1M498.5 211v1M498.5 241v2M499.5 211v1M500.5 211v1M501.5 211v1M502.5 211v1M503.5 211v1M504.5 211v1M505.5 211v1M506.5 211v1M507.5 211v1M508.5 211v1M509.5 211v1M510.5 211v1M511.5 211v1M512.5 211v1M513.5 211v1M514.5 211v1M515.5 211v1M516.5 211v1M517.5 211v1M518.5 211v1M519.5 211v1M520.5 211v1M521.5 211v1M522.5 211v1M523.5 211v1M524.5 211v1M525.5 211v1M526.5 211v1M527.5 211v1M528.5 211v1M529.5 211v1M530.5 211v1M530.5 349v2M531.5 211v1M531.5 351v24M532.5 211v1M532.5 349v2M533.5 211v1M533.5 327v7M533.5 346v29M534.5 211v1M535.5 211v1M536.5 211v1M537.5 211v1M538.5 211v1M539.5 211v1M540.5 211v1M541.5 211v1M542.5 211v1M543.5 211v1M544.5 211v1M545.5 211v1M546.5 211v1M547.5 211v1M548.5 211v1M549.5 211v1M550.5 211v1M551.5 211v1M552.5 211v1M553.5 211v1M554.5 211v1M555.5 211v1M556.5 211v1M557.5 211v1M558.5 211v1M559.5 211v1M560.5 211v1M561.5 211v1M562.5 211v1M563.5 211v1M564.5 211v1M565.5 211v1M566.5 211v1M567.5 211v1M568.5 211v1M569.5 211v1M570.5 211v1M571.5 211v1M572.5 211v1M573.5 211v1M574.5 211v1M575.5 211v1M576.5 211v1M577.5 211v1M578.5 211v1M579.5 211v1M580.5 211v1M581.5 211v1M582.5 211v1M583.5 211v1M584.5 211v1M585.5 211v1M586.5 211v1M587.5 211v1M588.5 211v1M589.5 211v1M590.5 211v1M591.5 211v1M592.5 211v1M593.5 211v1M594.5 211v1M595.5 211v1M596.5 211v1M597.5 211v1M598.5 211v1M599.5 211v1M600.5 211v1M601.5 211v1M602.5 211v1M603.5 211v1M604.5 211v1M605.5 211v1M606.5 211v1M607.5 211v1M608.5 211v1M609.5 211v1M610.5 211v1M611.5 211v1M612.5 211v1M613.5 211v1M614.5 211v1M615.5 211v1M616.5 211v1M617.5 211v1M618.5 211v1M619.5 211v1M620.5 211v1M621.5 211v1M622.5 211v1M623.5 211v1M624.5 211v1M625.5 211v1M626.5 211v1M627.5 211v1M628.5 211v1M629.5 211v1M630.5 211v1M631.5 211v1M632.5 211v1M633.5 211v1M634.5 211v1M635.5 211v1M636.5 211v1M637.5 211v1M638.5 211v1M639.5 211v1M640.5 211v1M641.5 211v1M642.5 211v1M643.5 211v1M644.5 211v1M645.5 211v1M646.5 211v1M647.5 211v1M648.5 211v1M649.5 211v1M650.5 211v1M651.5 211v1M652.5 211v1M653.5 211v1M654.5 211v1M655.5 211v1M656.5 211v1M657.5 211v1M658.5 211v1M658.5 241v2M659.5 211v1M660.5 211v1M661.5 211v1M662.5 211v1M663.5 211v1M664.5 211v1M665.5 211v1M666.5 211v1M667.5 211v1M668.5 211v1M669.5 211v1M670.5 211v1M671.5 211v1M672.5 211v1M673.5 211v1M674.5 211v1M675.5 211v1M676.5 211v1M677.5 211v1M678.5 211v1M679.5 211v1M680.5 211v1M681.5 211v1M682.5 211v1M683.5 211v1M684.5 211v1M685.5 211v1M686.5 211v1M687.5 211v1"/><path stroke="#aeff00" d="M220.5 334v6M220.5 344v5M221.5 334v6M221.5 344v5M222.5 336v2M222.5 344v2M248.5 346v3M256.5 336v2M256.5 353v2M257.5 321v4M257.5 361v2M258.5 321v4M258.5 361v2M259.5 332v2M259.5 363v2M260.5 351v2M261.5 346v3M261.5 351v2M267.5 363v2M268.5 363v2M268.5 368v2M269.5 363v2M269.5 368v2M270.5 368v2M271.5 351v2M271.5 355v2M272.5 351v2M272.5 355v2M278.5 365v5M282.5 365v5M292.5 355v2M293.5 353v2M298.5 344v2M298.5 357v2M306.5 349v6M307.5 340v2M308.5 346v3M309.5 342v2M312.5 346v3M314.5 262v2M314.5 266v2M314.5 290v2M314.5 294v2M314.5 298v2M314.5 302v2M314.5 306v3M314.5 330v2M314.5 342v2M314.5 346v3M314.5 365v3M314.5 370v2M318.5 351v2M319.5 372v2M320.5 370v2M320.5 374v1M321.5 355v2M323.5 351v14M324.5 363v2M325.5 351v2M325.5 365v3M326.5 368v2M327.5 365v3M328.5 357v2M328.5 361v2M329.5 359v2M330.5 351v2M331.5 355v2M331.5 359v2M334.5 344v2M335.5 340v2M335.5 349v2M336.5 342v2M337.5 338v2M377.5 342v33M378.5 330v2M379.5 330v2M380.5 330v2M381.5 330v2M382.5 330v2M399.5 203v93M409.5 203v95M410.5 296v4M411.5 317v2M412.5 304v2M412.5 323v2M413.5 304v2M413.5 309v2M417.5 302v4M417.5 309v2M417.5 315v2M435.5 302v9M436.5 292v14M437.5 292v14M438.5 292v14M439.5 292v14M449.5 330v2M450.5 327v3M450.5 361v2M451.5 327v3M451.5 370v2M452.5 254v2M453.5 309v6M454.5 309v6M455.5 323v2M456.5 203v38M456.5 243v11M456.5 256v27M456.5 287v9M456.5 300v13M456.5 319v4M456.5 330v14M456.5 351v4M456.5 359v4M456.5 370v4M458.5 372v2M461.5 365v3M462.5 340v2M462.5 346v3M462.5 351v2M462.5 370v2M463.5 359v2M464.5 268v3M464.5 334v2M464.5 363v2M465.5 268v3M465.5 334v2M465.5 349v2M465.5 353v2M465.5 368v2M465.5 372v2M466.5 357v2M467.5 342v2M467.5 370v2M469.5 346v5M469.5 365v5M470.5 365v3M471.5 334v2M471.5 346v3M471.5 365v3M472.5 353v4M473.5 336v2M473.5 344v2M473.5 353v2M474.5 353v2M475.5 334v2M475.5 351v2M478.5 327v5M480.5 327v3M481.5 325v2M482.5 254v2M483.5 211v3M483.5 249v3M486.5 298v77M534.5 340v2M535.5 338v2M536.5 340v2M537.5 340v2M538.5 340v2M539.5 340v2M540.5 340v2M541.5 340v2M542.5 340v2M676.5 363v2M677.5 363v2M678.5 363v2"/><path stroke="#d0ff00" d="M247.5 340v4M248.5 344v2M256.5 338v2M256.5 351v2M257.5 325v2M257.5 359v2M258.5 325v2M258.5 359v2M259.5 334v2M259.5 361v2M284.5 357v2M285.5 357v2M287.5 351v2M288.5 351v2M291.5 353v2M292.5 353v2M301.5 359v2M304.5 344v7M307.5 342v21M309.5 346v3M311.5 342v2M311.5 346v3M314.5 203v38M314.5 243v11M314.5 256v6M314.5 268v3M314.5 275v4M314.5 283v4M314.5 292v2M314.5 300v2M314.5 309v2M314.5 315v4M314.5 323v4M314.5 332v2M314.5 340v2M314.5 349v2M314.5 355v4M314.5 363v2M314.5 372v3M318.5 353v19M321.5 357v15M323.5 370v4M325.5 361v2M326.5 365v3M327.5 357v2M329.5 361v4M330.5 309v2M332.5 355v2M333.5 349v2M335.5 338v2M335.5 346v3M336.5 344v2M369.5 334v4M369.5 342v33M377.5 330v2M397.5 203v91M399.5 296v6M406.5 203v97M409.5 298v8M410.5 300v6M410.5 313v2M411.5 309v2M411.5 321v2M411.5 332v2M411.5 342v2M411.5 351v2M411.5 361v2M411.5 370v2M412.5 315v2M412.5 319v2M412.5 334v2M412.5 353v2M412.5 363v2M412.5 372v3M413.5 311v2M413.5 319v2M414.5 203v93M416.5 203v97M417.5 323v2M434.5 203v99M435.5 311v4M436.5 306v9M437.5 306v9M438.5 306v9M439.5 306v9M449.5 361v2M450.5 290v2M450.5 370v2M451.5 290v2M452.5 241v2M452.5 330v2M452.5 351v2M453.5 203v27M453.5 249v3M453.5 330v2M453.5 334v4M454.5 203v27M454.5 249v3M454.5 334v4M454.5 355v2M455.5 359v2M456.5 254v2M456.5 323v2M456.5 327v3M456.5 368v2M456.5 374v1M459.5 357v2M460.5 361v2M462.5 355v2M464.5 203v21M464.5 327v3M465.5 203v21M465.5 327v3M465.5 344v2M466.5 361v2M466.5 368v2M467.5 351v2M468.5 359v2M468.5 368v2M469.5 340v2M470.5 346v3M470.5 355v4M471.5 338v2M471.5 355v2M476.5 330v4M477.5 330v2M479.5 327v3M483.5 205v2M483.5 214v2M483.5 220v2M483.5 247v2M483.5 256v2M483.5 268v3M483.5 277v2M483.5 283v2M483.5 292v2M512.5 330v2M513.5 330v2M514.5 330v2M515.5 330v2M516.5 330v2M531.5 334v2M532.5 334v2M533.5 334v6M534.5 334v4M535.5 334v4M536.5 334v4M537.5 334v4M538.5 334v4M539.5 334v4M546.5 342v4M547.5 342v4M548.5 342v4M549.5 342v4M550.5 342v4M551.5 342v4M676.5 355v4M677.5 355v4M678.5 355v4"/><path stroke="#f2ff00" d="M256.5 340v4M256.5 346v5M257.5 327v3M257.5 357v2M258.5 327v3M258.5 357v2M259.5 336v2M259.5 359v2M261.5 349v2M268.5 365v3M269.5 365v3M271.5 353v2M272.5 353v2M275.5 370v2M279.5 365v3M280.5 365v3M281.5 365v3M298.5 346v11M313.5 349v2M321.5 372v3M325.5 353v8M327.5 363v2M328.5 355v2M330.5 357v2M333.5 351v4M334.5 346v3M335.5 342v2M336.5 340v2M366.5 334v2M370.5 330v2M371.5 334v4M371.5 342v33M372.5 330v2M373.5 330v2M377.5 338v2M378.5 338v4M379.5 338v4M380.5 338v4M381.5 338v4M382.5 338v4M383.5 338v4M397.5 294v4M399.5 309v4M406.5 300v2M406.5 306v3M408.5 203v95M409.5 311v4M410.5 306v3M410.5 315v2M411.5 313v2M411.5 323v2M411.5 334v2M411.5 353v2M411.5 359v2M411.5 372v3M412.5 342v4M412.5 351v2M412.5 361v2M413.5 306v3M413.5 317v2M413.5 325v2M413.5 374v1M414.5 296v10M416.5 300v9M417.5 313v2M417.5 325v2M417.5 330v2M417.5 359v2M417.5 370v2M418.5 203v70M420.5 203v61M421.5 203v70M423.5 203v63M424.5 203v70M434.5 302v9M435.5 319v4M436.5 319v4M437.5 319v4M438.5 321v2M439.5 321v2M440.5 203v110M441.5 203v70M442.5 203v84M446.5 203v110M447.5 203v108M448.5 203v110M449.5 357v2M449.5 365v3M450.5 300v4M450.5 330v2M451.5 315v2M451.5 319v2M451.5 330v2M452.5 327v3M453.5 298v2M453.5 302v2M453.5 315v2M453.5 332v2M454.5 287v3M454.5 330v4M455.5 325v2M455.5 344v2M456.5 325v2M456.5 363v2M457.5 300v6M457.5 309v2M457.5 317v4M458.5 300v6M458.5 309v2M458.5 317v4M459.5 300v6M459.5 309v2M459.5 317v4M459.5 353v2M459.5 372v2M460.5 300v6M460.5 309v2M460.5 317v4M460.5 365v3M461.5 296v2M462.5 292v2M462.5 296v2M462.5 374v1M463.5 292v2M463.5 370v2M464.5 302v2M464.5 319v2M464.5 336v2M464.5 359v2M464.5 372v2M465.5 302v2M465.5 319v2M465.5 336v2M466.5 292v4M466.5 338v2M466.5 349v2M466.5 370v2M467.5 357v2M467.5 368v2M468.5 349v2M468.5 357v2M469.5 336v2M469.5 357v2M474.5 332v4M475.5 332v2M482.5 241v2M483.5 207v4M483.5 216v4M483.5 224v6M483.5 233v6M483.5 243v4M483.5 252v2M483.5 260v6M483.5 271v4M483.5 279v4M483.5 287v5M483.5 296v10M483.5 353v22M484.5 203v38M484.5 243v11M484.5 256v50M484.5 353v22M485.5 203v38M485.5 243v11M485.5 256v50M485.5 353v22M493.5 237v4M493.5 243v2M495.5 237v4M495.5 243v2M497.5 237v4M497.5 243v2M499.5 237v4M499.5 243v2M531.5 349v2M535.5 340v2"/><path stroke="#fff600" d="M256.5 344v2M257.5 330v2M257.5 355v2M258.5 330v2M258.5 355v2M259.5 338v2M259.5 357v2M260.5 346v3M270.5 363v2M274.5 365v3M274.5 370v2M275.5 365v3M276.5 365v3M276.5 370v2M277.5 353v2M277.5 357v2M278.5 353v2M279.5 353v2M279.5 357v2M281.5 353v2M281.5 357v2M282.5 353v2M282.5 357v2M308.5 344v2M309.5 344v2M310.5 342v7M311.5 344v2M312.5 344v2M314.5 254v2M315.5 344v2M315.5 359v16M322.5 372v2M324.5 368v2M325.5 368v2M330.5 359v2M331.5 357v2M332.5 353v2M334.5 349v2M335.5 344v2M366.5 336v4M367.5 334v6M368.5 334v6M375.5 332v2M376.5 332v2M377.5 332v2M383.5 332v2M397.5 298v2M397.5 304v5M398.5 203v82M399.5 302v2M399.5 317v4M401.5 203v63M402.5 203v74M405.5 203v87M406.5 313v2M407.5 203v57M408.5 298v6M408.5 311v2M409.5 319v2M409.5 330v2M410.5 321v2M410.5 340v2M411.5 319v2M411.5 340v2M411.5 349v2M411.5 363v2M412.5 311v2M412.5 321v2M412.5 325v2M412.5 332v2M412.5 336v2M412.5 355v2M413.5 334v4M413.5 344v2M413.5 353v4M413.5 363v2M414.5 311v2M415.5 203v70M416.5 313v2M417.5 311v2M417.5 317v2M417.5 340v4M417.5 349v2M417.5 361v2M418.5 273v21M420.5 264v28M421.5 273v21M422.5 203v59M423.5 266v26M424.5 273v21M425.5 203v74M427.5 203v82M428.5 203v63M434.5 311v4M435.5 315v2M435.5 323v2M435.5 330v2M435.5 338v2M435.5 374v1M436.5 315v2M436.5 323v2M437.5 315v2M437.5 323v2M437.5 330v2M437.5 338v2M437.5 374v1M438.5 315v2M438.5 319v2M438.5 323v2M439.5 315v2M439.5 319v2M439.5 323v2M439.5 330v2M439.5 338v2M439.5 374v1M440.5 313v2M440.5 321v4M441.5 273v21M442.5 287v15M446.5 313v2M446.5 319v4M447.5 311v4M447.5 319v4M447.5 338v2M448.5 313v2M448.5 319v4M449.5 287v3M449.5 370v2M451.5 351v2M453.5 233v2M453.5 237v2M453.5 245v2M453.5 258v2M453.5 262v2M453.5 266v2M453.5 275v2M453.5 279v2M453.5 283v2M453.5 287v3M453.5 296v2M453.5 304v2M453.5 321v2M453.5 325v5M453.5 338v2M453.5 342v2M454.5 233v2M454.5 237v2M454.5 245v2M454.5 258v2M454.5 262v2M454.5 266v2M454.5 275v2M454.5 279v2M454.5 296v2M454.5 304v2M454.5 321v2M454.5 325v5M454.5 338v2M454.5 342v2M454.5 359v2M455.5 296v2M455.5 300v2M455.5 317v2M455.5 355v2M455.5 368v2M456.5 241v2M457.5 306v3M457.5 321v4M457.5 334v2M457.5 338v4M457.5 363v2M457.5 374v1M458.5 306v3M458.5 321v6M458.5 334v2M458.5 338v4M458.5 349v2M458.5 357v2M459.5 306v3M459.5 321v6M459.5 330v2M459.5 334v2M459.5 338v4M459.5 349v2M460.5 306v3M460.5 321v6M460.5 330v2M460.5 334v2M460.5 338v4M460.5 349v2M460.5 372v2M461.5 346v3M461.5 361v2M463.5 340v2M463.5 351v2M463.5 363v2M464.5 226v2M464.5 230v3M464.5 235v2M464.5 239v2M464.5 243v2M464.5 247v2M464.5 252v2M464.5 256v2M464.5 260v2M464.5 264v2M464.5 273v2M464.5 277v2M464.5 281v2M464.5 285v2M464.5 298v2M464.5 344v2M464.5 353v2M464.5 370v2M465.5 226v2M465.5 230v3M465.5 235v2M465.5 239v2M465.5 243v2M465.5 247v2M465.5 252v2M465.5 256v2M465.5 260v2M465.5 264v2M465.5 273v2M465.5 277v2M465.5 281v2M465.5 285v2M465.5 298v2M465.5 370v2M466.5 351v2M467.5 349v2M467.5 359v2M472.5 334v2M473.5 334v2M483.5 306v7M483.5 344v9M484.5 306v7M484.5 344v9M485.5 306v7M485.5 344v9M530.5 336v13M531.5 336v13M532.5 336v4M532.5 346v3M533.5 340v2M544.5 342v4M545.5 342v4"/><path stroke="#ffe700" d="M257.5 332v2M257.5 336v2M257.5 353v2M258.5 332v2M258.5 336v2M258.5 353v2M259.5 340v9M259.5 355v2M279.5 368v2M280.5 368v2M281.5 368v2M284.5 353v4M285.5 353v4M314.5 241v2M328.5 363v2M336.5 338v2M396.5 203v84M397.5 309v2M397.5 313v4M397.5 323v2M398.5 285v13M399.5 313v4M399.5 321v2M399.5 327v5M399.5 338v2M399.5 349v2M399.5 359v2M399.5 368v7M401.5 266v26M402.5 277v17M403.5 203v87M404.5 203v74M405.5 290v8M406.5 302v4M406.5 309v2M407.5 260v30M408.5 304v2M408.5 309v2M408.5 317v2M408.5 327v3M408.5 336v2M408.5 346v3M408.5 365v3M409.5 338v2M409.5 349v2M409.5 357v4M409.5 368v2M410.5 319v2M410.5 330v4M410.5 349v4M410.5 359v4M410.5 368v4M411.5 311v2M411.5 330v2M411.5 368v2M412.5 370v2M413.5 321v4M413.5 365v3M414.5 309v2M414.5 319v2M415.5 273v21M416.5 315v2M416.5 323v2M417.5 351v2M417.5 368v2M418.5 294v8M419.5 203v87M420.5 292v12M421.5 294v10M422.5 262v28M423.5 292v12M424.5 294v12M425.5 277v19M426.5 203v80M427.5 285v15M428.5 266v26M429.5 203v78M430.5 203v72M432.5 203v76M433.5 203v84M434.5 319v4M435.5 317v2M435.5 327v3M435.5 336v2M435.5 344v2M435.5 355v2M435.5 363v2M435.5 372v2M436.5 317v2M436.5 330v2M436.5 338v2M436.5 344v2M436.5 355v2M436.5 374v1M437.5 317v2M437.5 355v2M438.5 317v2M438.5 330v2M438.5 338v2M438.5 344v2M438.5 355v2M438.5 374v1M439.5 317v2M439.5 355v2M440.5 315v2M440.5 319v2M440.5 330v2M440.5 338v2M440.5 355v2M440.5 374v1M441.5 294v12M442.5 302v11M443.5 203v87M444.5 203v78M445.5 203v65M446.5 315v2M446.5 323v2M446.5 330v2M446.5 338v2M446.5 344v2M446.5 355v2M446.5 374v1M447.5 323v2M447.5 330v2M447.5 355v2M447.5 374v1M448.5 323v2M448.5 338v2M448.5 344v2M448.5 355v2M448.5 374v1M450.5 357v2M450.5 365v3M452.5 285v2M452.5 315v2M452.5 319v2M453.5 254v2M454.5 254v2M454.5 368v2M456.5 313v2M456.5 317v2M456.5 349v2M457.5 203v38M457.5 243v6M457.5 256v10M457.5 271v2M457.5 275v8M457.5 292v2M457.5 327v5M457.5 342v2M457.5 349v2M458.5 203v38M458.5 243v6M458.5 256v10M458.5 271v2M458.5 275v6M458.5 285v2M458.5 292v2M458.5 327v5M458.5 342v2M459.5 203v38M459.5 243v6M459.5 256v10M459.5 271v2M459.5 275v6M459.5 285v2M459.5 292v2M459.5 298v2M459.5 327v3M460.5 203v38M460.5 243v6M460.5 256v10M460.5 271v2M460.5 275v12M460.5 292v2M460.5 298v2M460.5 327v3M460.5 353v2M461.5 355v2M461.5 372v3M462.5 372v2M463.5 372v2M464.5 351v2M465.5 351v2M465.5 359v4M466.5 359v2M472.5 336v2M483.5 241v2M483.5 254v2M483.5 313v2M483.5 340v4M484.5 254v2M484.5 313v2M484.5 340v4M485.5 254v2M485.5 313v2M485.5 340v4M532.5 340v6M533.5 342v4M534.5 342v4M535.5 342v4"/><path stroke="#ffd900" d="M257.5 334v2M257.5 338v2M257.5 351v2M258.5 334v2M258.5 338v2M258.5 351v2M259.5 353v2M270.5 365v3M274.5 368v2M275.5 368v2M276.5 368v2M278.5 357v2M281.5 355v2M282.5 355v2M301.5 342v17M315.5 346v13M369.5 330v2M377.5 340v2M378.5 332v4M379.5 332v4M380.5 332v4M381.5 332v4M382.5 332v4M396.5 287v9M397.5 300v4M397.5 311v2M397.5 317v2M397.5 321v2M397.5 325v2M397.5 334v2M397.5 365v3M397.5 370v2M397.5 374v1M398.5 298v2M399.5 325v2M399.5 336v2M399.5 340v2M399.5 346v3M399.5 351v2M399.5 355v4M399.5 361v2M399.5 365v3M400.5 203v84M401.5 292v8M402.5 294v8M403.5 290v6M404.5 277v19M405.5 298v2M405.5 304v2M406.5 323v4M406.5 332v2M406.5 342v4M406.5 353v2M406.5 361v4M406.5 372v3M407.5 290v12M408.5 344v2M408.5 355v4M408.5 368v2M409.5 306v5M409.5 315v4M409.5 346v3M409.5 370v2M410.5 311v2M410.5 317v2M410.5 338v2M410.5 357v2M410.5 372v2M411.5 344v2M412.5 313v2M412.5 340v2M412.5 365v3M413.5 372v2M414.5 306v3M414.5 313v2M414.5 321v2M415.5 294v6M415.5 302v4M416.5 309v4M416.5 321v2M416.5 340v2M416.5 359v2M416.5 368v2M417.5 321v2M417.5 327v3M417.5 332v2M418.5 302v2M418.5 306v5M419.5 290v12M420.5 304v2M420.5 309v4M421.5 304v2M421.5 311v2M422.5 290v12M423.5 304v2M423.5 313v2M424.5 306v3M424.5 313v2M425.5 296v10M426.5 283v15M427.5 300v9M428.5 292v12M429.5 281v17M430.5 275v19M431.5 203v87M432.5 279v19M433.5 287v13M434.5 315v4M434.5 323v2M434.5 327v3M434.5 336v4M434.5 344v2M434.5 372v2M435.5 353v2M436.5 327v3M436.5 336v2M436.5 340v2M436.5 363v2M436.5 372v2M437.5 327v3M437.5 344v2M437.5 363v2M438.5 327v3M438.5 340v2M439.5 327v3M439.5 340v2M439.5 344v2M440.5 317v2M440.5 340v2M440.5 344v2M441.5 306v9M442.5 313v2M443.5 290v12M444.5 281v17M445.5 268v24M446.5 317v2M446.5 336v2M446.5 363v2M446.5 372v2M447.5 315v4M447.5 327v3M447.5 344v2M447.5 363v2M448.5 315v4M448.5 327v5M448.5 336v2M448.5 353v2M448.5 363v2M448.5 372v2M450.5 287v3M450.5 317v2M450.5 351v2M451.5 287v3M451.5 317v2M451.5 357v2M451.5 365v3M452.5 287v3M452.5 317v2M453.5 285v2M453.5 317v2M453.5 359v2M454.5 283v4M454.5 315v4M455.5 283v4M455.5 315v2M456.5 283v4M456.5 315v2M456.5 344v2M456.5 355v2M457.5 249v3M457.5 268v3M457.5 287v3M457.5 325v2M458.5 249v3M458.5 268v3M458.5 287v3M458.5 363v2M458.5 374v1M459.5 249v3M459.5 268v3M459.5 287v3M459.5 342v2M459.5 365v3M460.5 249v3M460.5 268v3M460.5 287v3M460.5 374v1M462.5 361v2M463.5 353v2M464.5 361v2M466.5 342v2M468.5 340v2M470.5 336v4M471.5 336v2M483.5 336v4M484.5 241v2M484.5 336v4M485.5 241v2M485.5 336v4M493.5 241v2M495.5 241v2M497.5 241v2M499.5 241v2"/><path stroke="#ffca00" d="M257.5 340v11M258.5 340v11M259.5 349v4M260.5 349v2M277.5 355v2M278.5 355v2M279.5 355v2M369.5 338v4M370.5 338v4M371.5 330v2M371.5 338v4M372.5 338v4M373.5 338v4M374.5 338v4M375.5 338v4M376.5 338v4M396.5 296v2M396.5 302v4M397.5 319v2M397.5 330v4M397.5 336v2M397.5 342v4M397.5 351v8M397.5 363v2M397.5 368v2M397.5 372v2M398.5 306v5M399.5 306v3M399.5 323v2M399.5 332v4M399.5 342v4M399.5 353v2M399.5 363v2M400.5 287v11M401.5 300v6M403.5 296v8M404.5 296v2M404.5 302v4M405.5 300v4M405.5 306v3M405.5 311v2M406.5 311v2M406.5 315v2M406.5 334v2M406.5 340v2M406.5 351v2M406.5 355v2M407.5 309v2M408.5 313v4M408.5 338v2M408.5 374v1M409.5 327v3M409.5 336v2M409.5 340v2M409.5 355v2M409.5 365v3M410.5 309v2M411.5 338v2M411.5 355v4M411.5 365v3M412.5 349v2M412.5 359v2M413.5 313v4M413.5 338v2M413.5 342v2M413.5 357v2M413.5 361v2M414.5 325v2M414.5 336v2M414.5 355v2M414.5 365v3M415.5 300v2M416.5 330v2M416.5 349v2M416.5 357v2M417.5 357v2M417.5 372v2M418.5 304v2M418.5 317v2M419.5 302v2M419.5 309v2M420.5 306v3M420.5 319v2M421.5 306v5M421.5 313v2M421.5 319v2M422.5 302v4M422.5 311v2M423.5 306v3M423.5 311v2M423.5 315v2M424.5 315v2M424.5 323v2M425.5 306v3M425.5 315v2M426.5 298v11M427.5 309v2M427.5 315v4M428.5 304v7M429.5 298v11M430.5 294v12M431.5 290v12M432.5 298v11M433.5 300v11M434.5 330v2M434.5 353v4M434.5 363v2M434.5 374v1M435.5 325v2M435.5 340v4M436.5 325v2M436.5 353v2M437.5 325v2M437.5 336v2M437.5 340v2M437.5 372v2M438.5 325v2M438.5 336v2M438.5 363v2M438.5 372v2M439.5 325v2M439.5 357v2M439.5 363v5M440.5 327v3M440.5 332v2M440.5 357v2M440.5 363v2M440.5 372v2M441.5 321v2M442.5 315v2M442.5 319v6M443.5 302v11M444.5 298v11M445.5 292v12M446.5 327v3M446.5 340v2M446.5 353v2M447.5 336v2M447.5 340v2M447.5 353v2M447.5 372v2M448.5 340v2M451.5 300v4M452.5 300v4M452.5 357v2M452.5 365v3M453.5 241v2M453.5 300v2M453.5 368v2M454.5 241v2M454.5 298v4M455.5 298v2M456.5 296v4M457.5 252v4M457.5 266v2M457.5 273v2M457.5 283v4M457.5 290v2M457.5 294v6M457.5 311v6M457.5 332v2M457.5 336v2M457.5 355v4M458.5 252v4M458.5 266v2M458.5 273v2M458.5 281v4M458.5 290v2M458.5 294v6M458.5 311v6M458.5 332v2M458.5 336v2M459.5 252v4M459.5 266v2M459.5 273v2M459.5 281v4M459.5 290v2M459.5 294v4M459.5 311v6M459.5 332v2M459.5 336v2M459.5 374v1M460.5 252v4M460.5 266v2M460.5 273v2M460.5 290v2M460.5 294v4M460.5 311v6M460.5 332v2M460.5 336v2M460.5 342v2M460.5 355v2M461.5 294v2M461.5 353v2M462.5 294v2M462.5 353v2M462.5 363v2M463.5 294v2M463.5 361v2M464.5 292v4M465.5 292v4M467.5 338v2M469.5 338v2M483.5 315v2M483.5 332v4M484.5 315v2M484.5 332v4M485.5 315v2M485.5 332v4M536.5 344v2M537.5 344v2M538.5 344v2M539.5 344v2M540.5 344v2M541.5 344v2M542.5 344v2M543.5 342v4"/><path stroke="#ffbb00" d="M313.5 351v24M369.5 332v2M370.5 332v2M371.5 332v2M372.5 332v2M373.5 332v2M374.5 332v2M396.5 298v4M396.5 311v4M397.5 327v3M397.5 338v4M397.5 346v5M397.5 359v4M398.5 300v2M398.5 311v2M398.5 315v4M398.5 325v5M398.5 336v2M398.5 368v2M398.5 372v2M399.5 304v2M400.5 298v6M401.5 315v2M402.5 302v7M402.5 317v2M402.5 325v2M403.5 306v3M404.5 298v4M404.5 309v2M405.5 321v4M405.5 330v2M405.5 370v2M406.5 330v2M406.5 349v2M406.5 365v3M406.5 370v2M407.5 302v2M407.5 315v2M408.5 306v3M408.5 319v2M408.5 330v2M408.5 334v2M408.5 349v2M408.5 353v2M408.5 359v2M408.5 363v2M408.5 372v2M409.5 321v2M409.5 332v2M409.5 351v2M409.5 361v2M409.5 374v1M410.5 342v2M410.5 346v3M410.5 363v2M411.5 336v2M411.5 346v3M412.5 346v3M412.5 357v2M412.5 368v2M413.5 346v3M413.5 351v2M414.5 327v3M414.5 338v2M414.5 346v3M414.5 357v2M414.5 374v1M415.5 306v3M415.5 311v4M415.5 321v2M416.5 325v5M416.5 338v2M416.5 370v2M417.5 319v2M417.5 338v2M418.5 311v2M418.5 315v2M418.5 325v2M418.5 332v2M419.5 304v5M419.5 311v2M419.5 317v2M420.5 313v2M420.5 317v2M420.5 327v3M421.5 321v2M421.5 327v3M421.5 374v1M422.5 306v3M422.5 313v2M423.5 309v2M423.5 321v2M423.5 330v2M424.5 309v4M424.5 321v2M424.5 332v2M425.5 309v2M425.5 313v2M425.5 317v2M425.5 323v2M426.5 309v2M426.5 315v2M427.5 325v2M427.5 334v2M428.5 311v2M428.5 315v6M429.5 309v4M429.5 317v2M430.5 306v7M431.5 302v9M432.5 309v4M433.5 311v4M433.5 319v2M436.5 342v2M437.5 342v2M437.5 353v2M437.5 357v2M437.5 365v3M438.5 332v2M438.5 353v2M438.5 357v2M438.5 365v3M439.5 332v2M439.5 336v2M439.5 342v2M439.5 346v3M439.5 372v2M440.5 325v2M440.5 336v2M440.5 346v3M440.5 365v3M441.5 315v2M441.5 319v2M441.5 323v2M441.5 330v2M441.5 338v2M441.5 374v1M442.5 330v2M442.5 338v2M442.5 355v2M442.5 374v1M443.5 313v2M443.5 321v2M444.5 309v6M445.5 304v11M446.5 325v2M447.5 325v2M447.5 342v2M448.5 325v2M448.5 342v2M449.5 346v3M449.5 351v2M451.5 359v2M452.5 359v2M453.5 357v2M453.5 365v3M455.5 349v2M457.5 241v2M458.5 241v2M458.5 355v2M458.5 365v3M459.5 241v2M459.5 355v2M459.5 363v2M460.5 241v2M460.5 346v3M460.5 363v2M461.5 363v2M464.5 340v2M468.5 338v2M483.5 330v2M484.5 330v2M485.5 330v2M512.5 332v4M513.5 332v4M514.5 332v4M515.5 332v4M516.5 332v4M536.5 342v2M537.5 342v2M538.5 342v2M539.5 342v2M540.5 342v2M541.5 342v2M542.5 342v2"/><path stroke="#ffad00" d="M396.5 306v5M396.5 321v4M396.5 332v2M396.5 368v2M396.5 372v2M398.5 313v2M398.5 319v2M398.5 323v2M398.5 334v2M398.5 338v2M398.5 344v5M398.5 355v4M398.5 365v3M398.5 370v2M398.5 374v1M400.5 311v4M401.5 313v2M401.5 317v2M401.5 321v6M401.5 332v4M401.5 342v2M401.5 374v1M402.5 315v2M402.5 319v2M402.5 323v2M402.5 334v4M402.5 344v2M402.5 353v4M402.5 365v3M402.5 374v1M403.5 304v2M403.5 309v2M403.5 317v4M403.5 327v3M403.5 338v2M404.5 321v2M405.5 309v2M405.5 313v2M405.5 332v2M405.5 340v4M405.5 349v4M405.5 359v4M405.5 372v2M406.5 327v3M406.5 336v2M406.5 346v3M406.5 359v2M406.5 368v2M407.5 306v3M407.5 325v2M407.5 334v2M407.5 374v1M408.5 325v2M408.5 332v2M408.5 340v2M408.5 370v2M409.5 334v2M409.5 363v2M409.5 372v2M410.5 323v2M410.5 334v4M410.5 353v4M410.5 365v3M410.5 374v1M411.5 325v2M412.5 338v2M413.5 370v2M414.5 317v2M414.5 323v2M414.5 344v2M414.5 353v2M414.5 363v2M414.5 368v2M415.5 338v2M418.5 342v2M418.5 351v2M418.5 361v2M418.5 370v4M420.5 334v2M420.5 344v2M420.5 353v2M420.5 363v2M420.5 372v3M421.5 330v2M421.5 334v2M421.5 355v2M421.5 363v2M422.5 309v2M422.5 315v2M422.5 321v2M423.5 323v2M423.5 346v3M423.5 357v2M423.5 365v3M424.5 317v2M424.5 330v2M424.5 338v2M424.5 349v2M424.5 357v2M424.5 368v2M425.5 311v2M425.5 332v2M426.5 313v2M426.5 317v2M427.5 311v4M427.5 319v2M427.5 370v2M428.5 325v2M429.5 319v2M430.5 317v4M431.5 311v2M431.5 319v2M432.5 313v2M432.5 317v6M433.5 321v2M434.5 325v2M434.5 340v4M435.5 332v4M435.5 357v2M435.5 365v3M436.5 332v2M436.5 357v2M436.5 365v3M437.5 332v2M437.5 346v3M438.5 342v2M438.5 346v3M439.5 353v2M440.5 342v2M440.5 353v2M441.5 317v2M441.5 355v2M442.5 317v2M442.5 340v2M442.5 344v2M443.5 315v2M443.5 319v2M443.5 323v2M443.5 330v2M443.5 338v2M443.5 374v1M444.5 315v2M444.5 319v6M445.5 319v4M446.5 332v2M446.5 342v2M446.5 357v2M446.5 365v3M447.5 357v2M447.5 365v3M449.5 359v2M450.5 359v2M450.5 368v2M451.5 368v2M452.5 368v2M454.5 357v2M454.5 365v3M455.5 357v2M455.5 365v3M456.5 357v2M456.5 365v3M457.5 344v2M457.5 365v3M461.5 342v2M463.5 344v2M483.5 317v2M483.5 327v3M484.5 317v2M484.5 327v3M485.5 317v2M485.5 327v3"/><path stroke="#ff9e00" d="M313.5 338v2M315.5 338v2M396.5 315v2M396.5 319v2M396.5 330v2M396.5 340v6M396.5 349v6M396.5 361v7M396.5 370v2M396.5 374v1M398.5 304v2M398.5 321v2M398.5 330v4M398.5 340v2M398.5 349v2M398.5 353v2M398.5 359v2M398.5 363v2M400.5 319v4M400.5 332v2M400.5 340v2M400.5 372v2M401.5 319v2M401.5 330v2M401.5 344v2M401.5 351v6M401.5 361v7M401.5 370v4M402.5 321v2M402.5 327v3M402.5 332v2M402.5 342v2M402.5 346v3M402.5 357v2M402.5 363v2M402.5 368v2M402.5 372v2M403.5 321v2M403.5 325v2M403.5 336v2M403.5 346v5M403.5 355v4M403.5 365v5M404.5 306v3M404.5 311v2M404.5 319v2M404.5 330v2M404.5 338v4M404.5 349v2M404.5 357v4M404.5 368v2M405.5 325v2M405.5 338v2M405.5 353v2M405.5 363v2M405.5 368v2M405.5 374v1M406.5 321v2M406.5 338v2M406.5 357v2M407.5 304v2M407.5 311v2M407.5 344v2M407.5 353v4M407.5 363v5M408.5 342v2M408.5 351v2M408.5 361v2M409.5 342v4M409.5 353v2M410.5 344v2M413.5 327v3M413.5 359v2M413.5 368v2M415.5 309v2M415.5 319v2M415.5 323v2M415.5 327v3M415.5 346v3M415.5 357v2M415.5 368v2M416.5 317v4M416.5 361v2M416.5 365v3M417.5 344v2M417.5 363v5M417.5 374v1M418.5 313v2M418.5 323v2M418.5 330v2M418.5 359v2M419.5 319v2M419.5 325v2M419.5 332v2M419.5 342v2M419.5 361v2M419.5 372v2M420.5 315v2M420.5 325v2M421.5 315v4M421.5 336v2M421.5 344v2M421.5 365v3M422.5 319v2M422.5 330v2M422.5 336v2M422.5 346v3M422.5 355v2M422.5 365v3M423.5 317v4M423.5 332v2M423.5 336v4M423.5 355v2M424.5 365v3M425.5 325v2M425.5 334v2M425.5 338v2M425.5 349v2M425.5 368v2M426.5 311v2M426.5 323v4M426.5 332v2M426.5 340v2M426.5 368v2M427.5 323v2M427.5 332v2M427.5 340v2M427.5 351v2M427.5 359v2M427.5 368v2M428.5 313v2M428.5 334v4M428.5 340v2M428.5 351v2M428.5 370v2M429.5 313v4M429.5 325v2M429.5 334v2M429.5 370v2M430.5 313v2M430.5 327v3M430.5 336v2M431.5 313v2M431.5 317v2M431.5 321v2M432.5 327v3M432.5 336v2M432.5 353v2M432.5 372v2M433.5 317v2M433.5 327v3M433.5 336v4M433.5 363v2M433.5 374v1M435.5 346v3M435.5 361v2M436.5 346v3M437.5 334v2M439.5 334v2M441.5 327v3M441.5 340v2M441.5 344v2M441.5 363v2M442.5 325v5M442.5 332v2M442.5 336v2M442.5 357v2M442.5 363v2M442.5 372v2M443.5 355v2M444.5 330v2M444.5 338v2M444.5 374v1M445.5 315v2M445.5 323v2M445.5 330v2M445.5 338v2M445.5 374v1M446.5 346v3M447.5 332v2M447.5 346v3M448.5 332v2M448.5 357v2M448.5 365v3M449.5 368v2M450.5 346v3M465.5 340v4M467.5 340v2"/><path stroke="#ff8f00" d="M396.5 317v2M396.5 325v5M396.5 334v4M396.5 355v2M396.5 359v2M398.5 302v2M398.5 342v2M398.5 351v2M398.5 361v2M400.5 304v2M400.5 315v4M400.5 323v2M400.5 330v2M400.5 342v2M400.5 349v4M400.5 359v6M400.5 368v4M400.5 374v1M401.5 327v3M401.5 336v6M401.5 346v5M401.5 357v4M402.5 338v4M402.5 349v4M402.5 359v4M402.5 370v2M403.5 323v2M403.5 330v2M403.5 334v2M403.5 344v2M403.5 359v2M403.5 363v2M403.5 370v2M403.5 374v1M404.5 323v2M404.5 327v3M404.5 336v2M404.5 346v3M404.5 351v2M404.5 361v2M404.5 370v2M405.5 327v3M405.5 334v2M405.5 344v5M405.5 357v2M405.5 365v3M407.5 313v2M407.5 317v2M407.5 327v3M407.5 336v2M407.5 342v2M407.5 346v3M407.5 357v2M407.5 372v2M412.5 330v2M413.5 332v2M413.5 340v2M413.5 349v2M414.5 315v2M414.5 372v2M415.5 315v2M415.5 355v2M415.5 365v3M416.5 342v2M416.5 346v3M416.5 351v2M417.5 346v3M417.5 353v2M418.5 319v2M418.5 327v3M418.5 340v2M418.5 344v2M418.5 363v2M419.5 313v4M419.5 327v3M419.5 334v2M419.5 344v2M419.5 351v4M419.5 363v2M419.5 370v2M419.5 374v1M420.5 321v2M420.5 332v2M420.5 361v2M421.5 346v3M421.5 353v2M421.5 372v2M422.5 374v1M423.5 349v2M423.5 368v2M423.5 374v1M424.5 319v2M424.5 325v2M424.5 336v2M424.5 346v3M425.5 321v2M425.5 330v2M425.5 357v4M426.5 319v2M426.5 334v2M426.5 349v4M426.5 359v2M427.5 321v2M427.5 349v2M427.5 361v2M428.5 361v2M429.5 321v2M429.5 327v3M429.5 336v2M429.5 342v2M429.5 351v4M429.5 361v2M430.5 315v2M430.5 321v2M430.5 325v2M430.5 334v2M430.5 342v2M430.5 353v2M430.5 361v2M430.5 372v2M431.5 315v2M431.5 327v3M431.5 336v2M431.5 342v2M431.5 353v2M431.5 372v2M432.5 315v2M432.5 338v2M432.5 344v2M432.5 363v2M432.5 374v1M433.5 315v2M433.5 323v2M433.5 330v2M433.5 344v2M433.5 353v4M433.5 372v2M434.5 332v2M434.5 361v2M435.5 370v2M436.5 334v2M436.5 361v2M438.5 334v2M440.5 334v2M441.5 325v2M441.5 332v2M441.5 357v2M441.5 365v3M441.5 372v2M442.5 346v3M442.5 353v2M442.5 365v3M443.5 317v2M443.5 340v2M443.5 344v2M444.5 317v2M444.5 340v2M444.5 344v2M444.5 355v2M445.5 355v2M446.5 334v2M447.5 334v2M448.5 334v2M448.5 346v3M448.5 361v2M454.5 349v2M466.5 340v2M483.5 319v2M483.5 325v2M484.5 319v2M484.5 325v2M485.5 319v2M485.5 325v2"/><path stroke="#ff8000" d="M314.5 334v2M396.5 338v2M396.5 346v3M396.5 357v2M400.5 325v5M400.5 334v6M400.5 344v2M400.5 353v2M400.5 357v2M401.5 368v2M402.5 330v2M403.5 340v4M403.5 351v4M403.5 361v2M403.5 372v2M404.5 325v2M404.5 332v2M404.5 342v2M404.5 363v5M404.5 372v2M405.5 336v2M405.5 355v2M407.5 332v2M407.5 351v2M407.5 361v2M410.5 327v3M411.5 327v3M412.5 327v3M414.5 334v2M414.5 340v2M414.5 359v2M415.5 325v2M415.5 340v2M415.5 349v2M415.5 359v2M416.5 355v2M416.5 372v2M417.5 334v2M417.5 355v2M418.5 349v2M418.5 353v2M418.5 368v2M418.5 374v1M419.5 330v2M420.5 330v2M420.5 336v2M420.5 342v2M420.5 355v2M421.5 332v2M422.5 317v2M422.5 323v2M422.5 327v3M422.5 332v2M422.5 363v2M423.5 334v2M424.5 334v2M424.5 359v2M425.5 319v2M425.5 340v2M425.5 370v2M426.5 321v2M426.5 338v2M426.5 370v2M427.5 336v4M427.5 342v2M428.5 321v4M428.5 327v3M428.5 332v2M428.5 342v2M428.5 353v2M428.5 359v2M428.5 368v2M428.5 372v2M429.5 340v2M429.5 372v2M430.5 351v2M430.5 370v2M431.5 334v2M431.5 338v2M431.5 361v4M431.5 370v2M431.5 374v1M432.5 323v4M432.5 342v2M432.5 355v2M432.5 361v2M433.5 342v2M434.5 334v2M434.5 357v2M434.5 365v3M434.5 370v2M435.5 351v2M437.5 361v2M441.5 336v2M441.5 342v2M441.5 346v3M441.5 353v2M442.5 342v2M443.5 325v5M443.5 357v2M443.5 363v5M444.5 327v3M444.5 336v2M444.5 363v2M444.5 372v2M445.5 317v2M445.5 327v3M445.5 340v2M445.5 344v2M445.5 363v2M446.5 361v2M447.5 361v2M447.5 370v2M448.5 370v2M451.5 346v3M459.5 346v3M483.5 321v4M484.5 321v4M485.5 321v4"/><path stroke="#ff7300" d="M400.5 309v2M400.5 346v3M400.5 355v2M400.5 365v3M401.5 306v3M401.5 311v2M402.5 313v2M403.5 332v2M404.5 334v2M404.5 344v2M404.5 353v4M404.5 374v1M405.5 319v2M407.5 323v2M407.5 330v2M407.5 338v2M407.5 349v2M407.5 368v4M414.5 349v2M414.5 361v2M415.5 330v2M415.5 336v2M415.5 374v1M416.5 332v2M421.5 323v4M422.5 334v2M422.5 344v2M422.5 357v2M423.5 325v5M424.5 340v2M424.5 355v2M425.5 336v2M425.5 351v2M426.5 336v2M426.5 357v2M427.5 327v3M428.5 338v2M428.5 349v2M429.5 323v2M429.5 338v2M430.5 323v2M430.5 338v4M430.5 363v2M430.5 374v1M431.5 323v4M431.5 344v2M431.5 351v2M432.5 330v2M432.5 340v2M432.5 370v2M433.5 325v2M434.5 346v3M434.5 351v2M435.5 359v2M436.5 370v2M437.5 370v2M438.5 359v4M439.5 359v4M439.5 370v2M440.5 359v4M443.5 332v2M443.5 336v2M443.5 342v2M443.5 353v2M443.5 372v2M444.5 325v2M444.5 332v2M444.5 353v2M444.5 357v2M444.5 365v3M445.5 325v2M445.5 336v2M445.5 357v2M445.5 372v2M446.5 370v2M448.5 351v2M458.5 344v2M462.5 342v4M464.5 342v2"/><path stroke="#ff6500" d="M402.5 309v2M403.5 315v2M406.5 317v2M407.5 340v2M407.5 359v2M409.5 325v2M413.5 330v2M414.5 342v2M414.5 370v2M415.5 317v2M415.5 370v2M416.5 336v2M416.5 344v2M416.5 363v2M416.5 374v1M418.5 321v2M418.5 334v2M419.5 323v2M420.5 323v2M420.5 346v3M420.5 351v2M420.5 365v3M420.5 370v2M421.5 361v2M422.5 338v2M422.5 372v2M423.5 363v2M424.5 327v3M424.5 351v2M424.5 370v2M424.5 374v1M425.5 365v3M426.5 330v2M427.5 330v2M427.5 353v2M427.5 372v2M429.5 332v2M429.5 359v2M429.5 374v1M430.5 344v2M431.5 330v2M431.5 355v2M432.5 334v2M432.5 351v2M433.5 334v2M433.5 340v2M433.5 361v2M433.5 370v2M435.5 368v2M436.5 351v2M436.5 359v2M436.5 368v2M437.5 359v2M438.5 368v4M439.5 368v2M440.5 368v4M441.5 334v2M442.5 334v2M443.5 346v3M444.5 342v2M444.5 346v3M445.5 332v2M445.5 342v2M445.5 353v2M445.5 365v3M446.5 359v2M447.5 351v2M447.5 359v2M448.5 359v2M452.5 346v3M453.5 349v2M463.5 342v2"/><path stroke="#ff5800" d="M313.5 336v2M314.5 336v4M315.5 336v2M403.5 311v2M404.5 317v2M409.5 323v2M410.5 325v2M414.5 351v2M415.5 363v2M416.5 353v2M417.5 336v2M419.5 321v2M419.5 359v2M421.5 342v2M421.5 357v2M422.5 325v2M422.5 349v2M422.5 353v2M422.5 368v2M423.5 359v2M425.5 327v3M425.5 346v3M426.5 327v3M426.5 361v2M427.5 357v2M429.5 363v2M429.5 368v2M430.5 332v2M430.5 355v2M431.5 340v2M433.5 351v2M434.5 359v2M437.5 351v2M437.5 368v2M438.5 351v2M439.5 351v2M443.5 334v2M445.5 346v3M446.5 351v2M446.5 368v2M447.5 368v2M448.5 368v2M453.5 346v3M458.5 346v3M459.5 344v2M461.5 344v2"/><path stroke="#ff4b00" d="M400.5 306v3M401.5 309v2M405.5 315v2M406.5 319v2M408.5 321v4M414.5 330v2M415.5 342v4M415.5 361v2M418.5 357v2M418.5 365v3M421.5 338v2M421.5 351v2M421.5 370v2M423.5 344v2M423.5 370v4M425.5 361v2M426.5 342v2M426.5 372v2M428.5 330v2M428.5 363v2M428.5 374v1M429.5 330v2M429.5 344v2M429.5 349v2M430.5 330v2M430.5 359v2M430.5 368v2M432.5 332v2M433.5 332v2M434.5 368v2M435.5 349v2M436.5 349v2M437.5 349v2M438.5 349v2M439.5 349v2M440.5 349v4M442.5 359v4M445.5 334v2M447.5 349v2M452.5 349v2M454.5 346v3M457.5 346v3M460.5 344v2"/><path stroke="#ff3d00" d="M402.5 311v2M404.5 313v2M414.5 332v2M415.5 353v2M415.5 372v2M418.5 346v3M419.5 340v2M419.5 349v2M419.5 355v2M419.5 365v5M420.5 368v2M421.5 349v2M421.5 368v2M423.5 340v2M423.5 351v4M424.5 353v2M424.5 363v2M424.5 372v2M425.5 355v2M425.5 374v1M426.5 353v2M426.5 365v3M427.5 374v1M428.5 344v2M428.5 357v2M429.5 355v2M431.5 332v2M433.5 357v2M433.5 365v3M441.5 359v4M441.5 370v2M442.5 368v4M444.5 334v2M446.5 349v2M448.5 349v2M449.5 349v2M450.5 349v2M451.5 349v2M455.5 346v3M456.5 346v3"/><path stroke="#ff3000" d="M415.5 334v2M415.5 351v2M416.5 334v2M418.5 338v2M418.5 355v2M419.5 336v2M419.5 346v3M420.5 340v2M420.5 349v2M420.5 357v4M421.5 359v2M422.5 361v2M422.5 370v2M424.5 344v2M424.5 361v2M425.5 342v2M425.5 353v2M425.5 372v2M426.5 346v3M427.5 346v3M427.5 355v2M427.5 363v5M428.5 355v2M430.5 349v2M431.5 359v2M431.5 365v3M432.5 346v3M432.5 365v3M433.5 346v3M434.5 349v2M441.5 368v2M443.5 359v4M443.5 370v2M444.5 361v2M445.5 361v2M445.5 370v2"/><path stroke="#ff2400" d="M403.5 313v2M404.5 315v2M405.5 317v2M407.5 319v4M415.5 332v2M418.5 336v2M419.5 338v2M419.5 357v2M420.5 338v2M421.5 340v2M422.5 340v4M422.5 351v2M422.5 359v2M423.5 342v2M423.5 361v2M424.5 342v2M425.5 344v2M425.5 363v2M426.5 344v2M426.5 355v2M426.5 363v2M426.5 374v1M427.5 344v2M428.5 346v3M428.5 365v3M429.5 346v3M429.5 357v2M429.5 365v3M430.5 346v3M430.5 357v2M430.5 365v3M431.5 346v5M431.5 357v2M431.5 368v2M432.5 349v2M432.5 357v4M432.5 368v2M433.5 349v2M433.5 359v2M433.5 368v2M441.5 349v4M442.5 349v4M443.5 349v4M443.5 368v2M444.5 349v4M444.5 359v2M444.5 368v4M445.5 349v4M445.5 359v2M445.5 368v2"/></g><g stroke="#000" stroke-width="1" fill="none"><path d="M219.5 197V378M219 197.5H689M688.5 197V378M219 377.5H689"/><path d="M208 374.5H219M214 344.5H219M214 326.5H219M214 313.5H219M214 303.5H219M214 295.5H219M214 288.5H219M214 283.5H219M214 277.5H219M208 273.5H219M214 242.5H219M214 224.5H219M214 212.5H219M214 202.5H219"/><path d="M220.5 378V383M238.5 378V389M256.5 378V383M274.5 378V383M292.5 378V383M310.5 378V383M328.5 378V383M346.5 378V383M364.5 378V383M382.5 378V383M400.5 378V383M418.5 378V383M436.5 378V383M454.5 378V389M472.5 378V383M490.5 378V383M508.5 378V383M526.5 378V383M544.5 378V383M562.5 378V383M580.5 378V383M598.5 378V383M616.5 378V383M634.5 378V383M652.5 378V383M670.5 378V389M688.5 378V383"/><path d="M220.5 622V627M238.5 622V633M256.5 622V627M274.5 622V627M292.5 622V627M310.5 622V627M328.5 622V627M346.5 622V627M364.5 622V627M382.5 622V627M400.5 622V627M418.5 622V627M436.5 622V627M454.5 622V633M472.5 622V627M490.5 622V627M508.5 622V627M526.5 622V627M544.5 622V627M562.5 622V627M580.5 622V627M598.5 622V627M616.5 622V627M634.5 622V627M652.5 622V627M670.5 622V633M688.5 622V627"/><path d="M720.5 198V378M720 217.5H732M720 204.5H726M720 244.5H732M720 230.5H726M720 270.5H732M720 257.5H726M720 297.5H732M720 284.5H726M720 323.5H732M720 310.5H726M720 350.5H732M720 337.5H726M720 377.5H732M720 364.5H726"/><path d="M219.5 440V622M219 440.5H689M688.5 440V622M219 621.5H689"/><path d="M214 440.5H219M208 451.5H219M214 463.5H219M208 475.5H219M214 487.5H219M208 500.5H219M214 514.5H219M208 529.5H219M214 545.5H219M208 562.5H219M214 580.5H219M208 599.5H219M214 621.5H219"/></g><defs><linearGradient id="cb" x1="0" y1="0" x2="0" y2="1"><stop offset="0" stop-color="#ff0000"/><stop offset="0.08" stop-color="#ff2a00"/><stop offset="0.2" stop-color="#ff8000"/><stop offset="0.36" stop-color="#ffff00"/><stop offset="0.50" stop-color="#00ff00"/><stop offset="0.68" stop-color="#00ff90"/><stop offset="0.755" stop-color="#00ffff"/><stop offset="0.87" stop-color="#0000ff"/><stop offset="1" stop-color="#00007a"/></linearGradient></defs><rect x="704" y="198" width="16" height="180" fill="url(#cb)"/><path d="M220.5 485V543M221.5 470V536M222.5 491V528M223.5 462V528M224.5 456V502M225.5 453V507M226.5 464V512M227.5 456V510M228.5 442V499M229.5 461V515M230.5 463V492M231.5 470V492M232.5 461V486M233.5 466V495M234.5 474V488M235.5 472V487M236.5 473V498M237.5 474V496M238.5 474V493M239.5 479V504M240.5 492V504M241.5 495V512M242.5 490V516M243.5 505V526M244.5 514V526M245.5 505V529M246.5 514V526M247.5 516V528M248.5 521V535M249.5 520V536M250.5 523V541M251.5 520V548M252.5 521V544M253.5 525V552M254.5 521V552M255.5 531V550M256.5 540V556M257.5 540V563M258.5 540V554M259.5 539V564M260.5 551V566M261.5 553V564M262.5 548V568M263.5 550V570M264.5 553V571M265.5 554V569M266.5 553V572M267.5 553V566M268.5 556V572M269.5 559V571M270.5 563V569M271.5 562V570M272.5 562V574M273.5 566V575M274.5 564V574M275.5 562V577M276.5 566V577M277.5 567V577M278.5 566V586M279.5 567V579M280.5 566V577M281.5 571V579M282.5 570V579M283.5 570V580M284.5 567V580M285.5 567V584M286.5 563V579M287.5 560V594M288.5 558V577M289.5 560V590M290.5 562V578M291.5 557V578M292.5 560V580M293.5 564V574M294.5 560V581M295.5 560V577M296.5 558V571M297.5 560V569M298.5 558V575M299.5 550V566M300.5 542V565M301.5 550V565M302.5 539V561M303.5 547V558M304.5 545V558M305.5 546V555M306.5 544V559M307.5 547V557M308.5 550V559M309.5 550V562M310.5 555V562M311.5 546V566M312.5 546V568M313.5 546V572M314.5 554V567M315.5 554V571M316.5 546V560M317.5 547V561M318.5 536V558M319.5 542V556M320.5 526V557M321.5 527V552M322.5 533V547M323.5 510V554M324.5 504V549M325.5 510V534M326.5 490V535M327.5 503V541M328.5 496V527M329.5 487V523M330.5 487V510M331.5 487V509M332.5 463V496M333.5 471V487M334.5 466V487M335.5 465V495M336.5 467V505M337.5 469V497M338.5 479V497M339.5 474V492M340.5 486V495M341.5 482V494M342.5 486V494M343.5 482V497M344.5 483V500M345.5 483V504M346.5 470V502M347.5 476V498M348.5 471V513M349.5 471V507M350.5 487V511M351.5 481V505M352.5 492V504M353.5 491V510M354.5 498V524M355.5 496V529M356.5 511V527M357.5 489V529M358.5 512V542M359.5 533V562M360.5 562V576M373.5 523V553M374.5 490V525M375.5 482V502M376.5 478V499M377.5 482V494M378.5 478V495M379.5 484V502M380.5 476V499M381.5 481V508M382.5 481V504M383.5 476V498M384.5 474V499M385.5 477V500M386.5 463V488M387.5 470V500M388.5 464V493M389.5 463V483M390.5 456V484M391.5 460V498M392.5 471V501M393.5 491V520M394.5 486V517M395.5 465V503M396.5 465V493M397.5 463V488M398.5 468V485M399.5 466V493M400.5 470V501M401.5 467V494M402.5 483V504M403.5 483V495M404.5 485V502M405.5 480V500M406.5 484V506M407.5 471V504M408.5 485V498M409.5 481V502M410.5 474V491M411.5 475V490M412.5 472V486M413.5 471V497M414.5 467V487M415.5 471V488M416.5 471V490M417.5 477V505M418.5 461V503M419.5 474V499M420.5 478V497M421.5 478V509M422.5 482V509M423.5 480V515M424.5 489V510M425.5 491V518M426.5 485V507M427.5 482V508M428.5 489V519M429.5 497V517M430.5 493V517M431.5 484V516M432.5 486V517M433.5 489V525M434.5 493V513M435.5 491V515M436.5 489V513M437.5 492V511M438.5 499V509M439.5 495V509M440.5 493V509M441.5 497V508M442.5 495V517M443.5 493V511M444.5 491V508M445.5 490V509M446.5 486V506M447.5 495V510M448.5 487V514M449.5 484V502M450.5 482V504M451.5 481V500M452.5 480V504M453.5 479V499M454.5 464V495M455.5 469V498M456.5 465V499M457.5 475V502M458.5 473V503M459.5 474V496M460.5 474V500M461.5 485V508M462.5 478V498M463.5 485V512M464.5 490V511M465.5 495V524M466.5 491V520M467.5 503V532M468.5 499V519M469.5 493V523M470.5 506V522M471.5 502V516M472.5 500V512M473.5 501V512M474.5 502V512M475.5 494V506M476.5 494V508M477.5 489V507M478.5 494V512M479.5 480V508M480.5 486V515M481.5 494V518M482.5 500V517M483.5 508V520M484.5 508V530M485.5 517V534M486.5 517V541M487.5 525V549M488.5 513V547M489.5 520V540M490.5 508V544M491.5 493V527M492.5 496V531M493.5 485V517M494.5 488V519M495.5 486V514M496.5 476V509M497.5 486V519M498.5 486V508M499.5 477V512M500.5 484V506M501.5 487V506M502.5 484V508M503.5 481V512M504.5 477V508M505.5 479V507M506.5 489V500M507.5 479V493M508.5 480V500M509.5 475V495M510.5 467V481M511.5 460V485M512.5 463V484M513.5 474V497M514.5 483V514M515.5 485V514M516.5 493V517M517.5 474V524M518.5 507V531M519.5 513V544M520.5 523V548M521.5 538V550M522.5 546V562M534.5 562V573M535.5 530V562M536.5 518V551M537.5 507V523M538.5 498V525M539.5 486V515M540.5 478V516M541.5 482V505M542.5 464V507M543.5 481V498M544.5 485V501M545.5 485V502M546.5 483V503M547.5 478V500M548.5 480V501M549.5 468V511M550.5 473V511M551.5 474V508M552.5 488V525M553.5 485V514M554.5 499V534M555.5 498V541M556.5 498V540M557.5 514V545M558.5 519V549M559.5 513V555M560.5 522V569M561.5 537V559M562.5 531V563M563.5 519V577M564.5 536V573M565.5 551V573M566.5 556V575M567.5 559V576M568.5 550V583M569.5 565V588M570.5 566V585M571.5 566V589M572.5 568V592M573.5 578V595M574.5 579V593M575.5 575V597M576.5 572V609M577.5 575V592M578.5 572V607M579.5 577V596M580.5 581V597M581.5 576V598M582.5 574V595M583.5 577V596M584.5 583V602M585.5 578V614M586.5 578V601M587.5 575V607M588.5 579V613M589.5 577V616M590.5 575V606M591.5 573V601M592.5 583V603M593.5 580V613M594.5 581V603M595.5 578V608M596.5 582V602M597.5 587V616M598.5 582V611M599.5 578V614M600.5 589V610M601.5 573V599M602.5 571V601M603.5 584V601M604.5 584V604M605.5 581V602M606.5 582V597M607.5 583V593M608.5 576V595M609.5 574V596M610.5 576V596M611.5 562V605M612.5 571V593M613.5 561V592M614.5 569V595M615.5 567V585M616.5 564V581M617.5 571V587M618.5 566V585M619.5 566V583M620.5 558V589M621.5 556V580M622.5 558V586M623.5 547V593M624.5 552V583M625.5 558V590M626.5 558V575M627.5 553V576M628.5 556V567M629.5 556V569M630.5 555V567M631.5 547V562M632.5 540V556M633.5 542V563M634.5 540V555M635.5 536V556M636.5 532V542M637.5 523V540M638.5 518V533M639.5 512V532M640.5 516V539M641.5 531V548M642.5 542V561M643.5 542V575M644.5 557V573M645.5 552V573M646.5 555V577M647.5 550V580M648.5 558V595M649.5 545V569M650.5 555V582M651.5 550V584M652.5 558V586M653.5 558V581M654.5 556V587M655.5 558V579M656.5 544V575M657.5 544V593M658.5 525V573M659.5 524V578M660.5 528V582M661.5 520V572M662.5 511V568M663.5 510V552M664.5 510V553M665.5 506V547M666.5 505V533M667.5 503V531M668.5 499V528M669.5 502V527M670.5 500V526M671.5 492V522M672.5 502V534M673.5 497V520M674.5 500V528M675.5 494V526M676.5 504V518M677.5 501V529M678.5 509V529M679.5 514V537M680.5 521V556M681.5 527V551M682.5 531V580M683.5 538V577M684.5 564V583" stroke="#000" stroke-width="1" fill="none" shape-rendering="crispEdges"/></svg><svg class="plot" width="1345" height="916" viewBox="0 0 1345 916" text-rendering="geometricPrecision"><g opacity="0.999" stroke="#fff" stroke-width="0.16" paint-order="fill stroke"><text x="317 328 339 349 359 365 376 381 391 404 413 418 428 433 443 448 453 465 474 485 490 500 510 519 528 534 541 550 555 567 576 582" y="187" >RBSP-A/EMFISIS  HFR Spectra Data</text><text x="173 183" y="282.6" >10</text><text x="193.5" y="274.6" >5</text><text x="173 183" y="383.8" >10</text><text x="193.5" y="376" >4</text><g transform="translate(161.3,287.5) rotate(-90)"><text x="-10.5 1.5" y="0" >Hz</text></g><text x="736 746" y="226.5" >10</text><text x="756 762 772" y="219.0" >-10</text><text x="736 746" y="253.2" >10</text><text x="756 762 772" y="245.7" >-12</text><text x="736 746" y="279.9" >10</text><text x="756 762 772" y="272.4" >-14</text><text x="736 746" y="306.5" >10</text><text x="756 762 772" y="299.0" >-16</text><text x="736 746" y="333.2" >10</text><text x="756 762 772" y="325.7" >-18</text><text x="736 746" y="359.9" >10</text><text x="756 762 772" y="352.4" >-20</text><text x="736 746" y="386.6" >10</text><text x="756 762 772" y="379.1" >-22</text><g transform="translate(805,288) rotate(-90)"><text x="-51.5 -40.5 -27.5 -17.5 -12.5 2.5 15.5 25.5 30.5 42.5" y="0" >V^2/m^2/Hz</text></g><text x="216 226 236 241 251" y="409" >00:00</text><text x="216 226 236 246 256 262 272 282 288 298" y="425" >2012-12-02</text><text x="648 658 668 673 683" y="409" >00:00</text><text x="648 658 668 678 688 694 704 714 720 730" y="425" >2012-12-03</text><text x="294 305 316 326 336 342 353 358 368 379 388 393 398 410 423 433 443 448 453 463 466 475 484 490 497 507 517 522 527 536 546 555 562 572 577 586 596 605" y="414" >RBSP-A/ECT  HOPE  Electron  Tperp/Tpar</text><text x="178 188 193" y="457.5" >2.2</text><text x="178 188 193" y="481.5" >2.0</text><text x="178 188 193" y="506.5" >1.8</text><text x="178 188 193" y="535.5" >1.6</text><text x="178 188 193" y="568.5" >1.4</text><text x="178 188 193" y="605.5" >1.2</text><g transform="translate(166,532.4) rotate(-90)"><text x="-49.5 -40.5 -35.5 -26.5 -16.5 -7.5 -0.5 9.5 14.5 23.5 33.5 42.5" y="0" >e Tperp/Tpar</text></g><text x="216 226 236 241 251" y="653" >00:00</text><text x="432 442 452 457 467" y="653" >12:00</text><text x="648 658 668 673 683" y="653" >00:00</text><text x="157" y="673" >R</text><text x="168.5" y="677.5" style="font-size:11px">E</text><text x="216 226 231 241 251" y="673" >4.225</text><text x="432 442 447 457 467" y="673" >5.756</text><text x="648 658 663 673 683" y="673" >3.179</text><text x="137.5 150.5 159.5 168.5" y="693" >MLat</text><text x="200 206 216 226 231 241 251" y="693" >-10.580</text><text x="426 432 442 447 457 467" y="693" >-1.544</text><text x="632 638 648 658 663 673 683" y="693" >-16.190</text><text x="143.5 156.5 165.5" y="713" >MLT</text><text x="216 226 231 241 251" y="713" >2.247</text><text x="432 442 447 457 467" y="713" >5.398</text><text x="648 658 663 673 683" y="713" >8.125</text><text x="165.5" y="733" >L</text><text x="216 226 231 241 251" y="733" >4.373</text><text x="432 442 447 457 467" y="733" >5.760</text><text x="648 658 663 673 683" y="733" >3.447</text><text x="251.6 261.6 271.6 281.6 291.6 297.6 307.6 317.6 323.6 333.6 343.6 348.6 354.6 364.6 374.6 384.6 390.6 395.6 405.6 415.6 420.6 430.6 440.6 445.6 451.6 461.6 466.6 476.6 486.6 496.6 506.6 512.6 522.6 532.6 538.6 548.6 558.6 563.6 569.6 579.6 589.6 599.6 605.6 610.6 620.6 630.6 635.6 645.6" y="757" >2012-12-01 (336) 23:00 to 2012-12-03 (338) 01:00</text></g></svg>
<div id="status"></div>
<svg id="st" width="1345" height="916" viewBox="0 0 1345 916"><g id="status-text"><text x="126 132 134 140 144 149 155 158 163 169 171 177 182 186 192" y="786" style="font-size:10px;font-weight:normal;fill:#222;stroke:#222;stroke-width:0.3px">plot_1 selected</text></g></svg>
<div id="pm"><div class="tb"></div><svg width="246" height="90" viewBox="0 0 246 90"><path d="M12.6 10.4h8.8l-4.4 5.6z" fill="#999"/><path d="M222.5 9.5l7 7m0 -7l-7 7" stroke="#9a9a9a" stroke-width="2.2" fill="none"/></svg><svg class="tt" width="246" height="90" viewBox="0 0 246 90"><text transform="translate(122.2,19.2) scale(0.93,1)" text-anchor="middle">Progress Monitor</text></svg><div class="bar"><i></i></div><div class="cancel"></div><svg width="246" height="90" viewBox="0 0 246 90"><defs><linearGradient id="rg" x1="0" y1="0" x2="0" y2="1"><stop offset="0" stop-color="#ee7a80"/><stop offset="0.5" stop-color="#e04a55"/><stop offset="1" stop-color="#d83545"/></linearGradient></defs><rect x="225.5" y="55.5" width="13" height="13" rx="2.5" fill="url(#rg)" stroke="#c03040"/><path d="M229.2 59.2l5.6 5.6m0 -5.6l-5.6 5.6" stroke="#fff" stroke-width="2.2"/></svg><svg class="ui" width="246" height="90" viewBox="0 0 246 90"><text x="67 74 84 94 104 108 118 128 133 143 152 158 167" y="38" style="font-size:14px" >running batch</text><text x="16 23 27 30 34 39 42 45 51 57 65 68 71 74 81 86 89 94 100 103 109 113 119 125 131 136 140 144 150 156 162 168 174 180 186 192 196 202 208 211 217 223" y="50" style="font-size:8px" >write /hom...walk3/product_20121225_00.png</text><text x="29 37 45 49 57 65 69 74 82 90 95 103 107 119 123 132 137 141 150 156 165 169 177 185 190 198 202 210" y="84" >49/62 (45.5/min, eta 18.4 s)</text></svg></div>
</body></html>
